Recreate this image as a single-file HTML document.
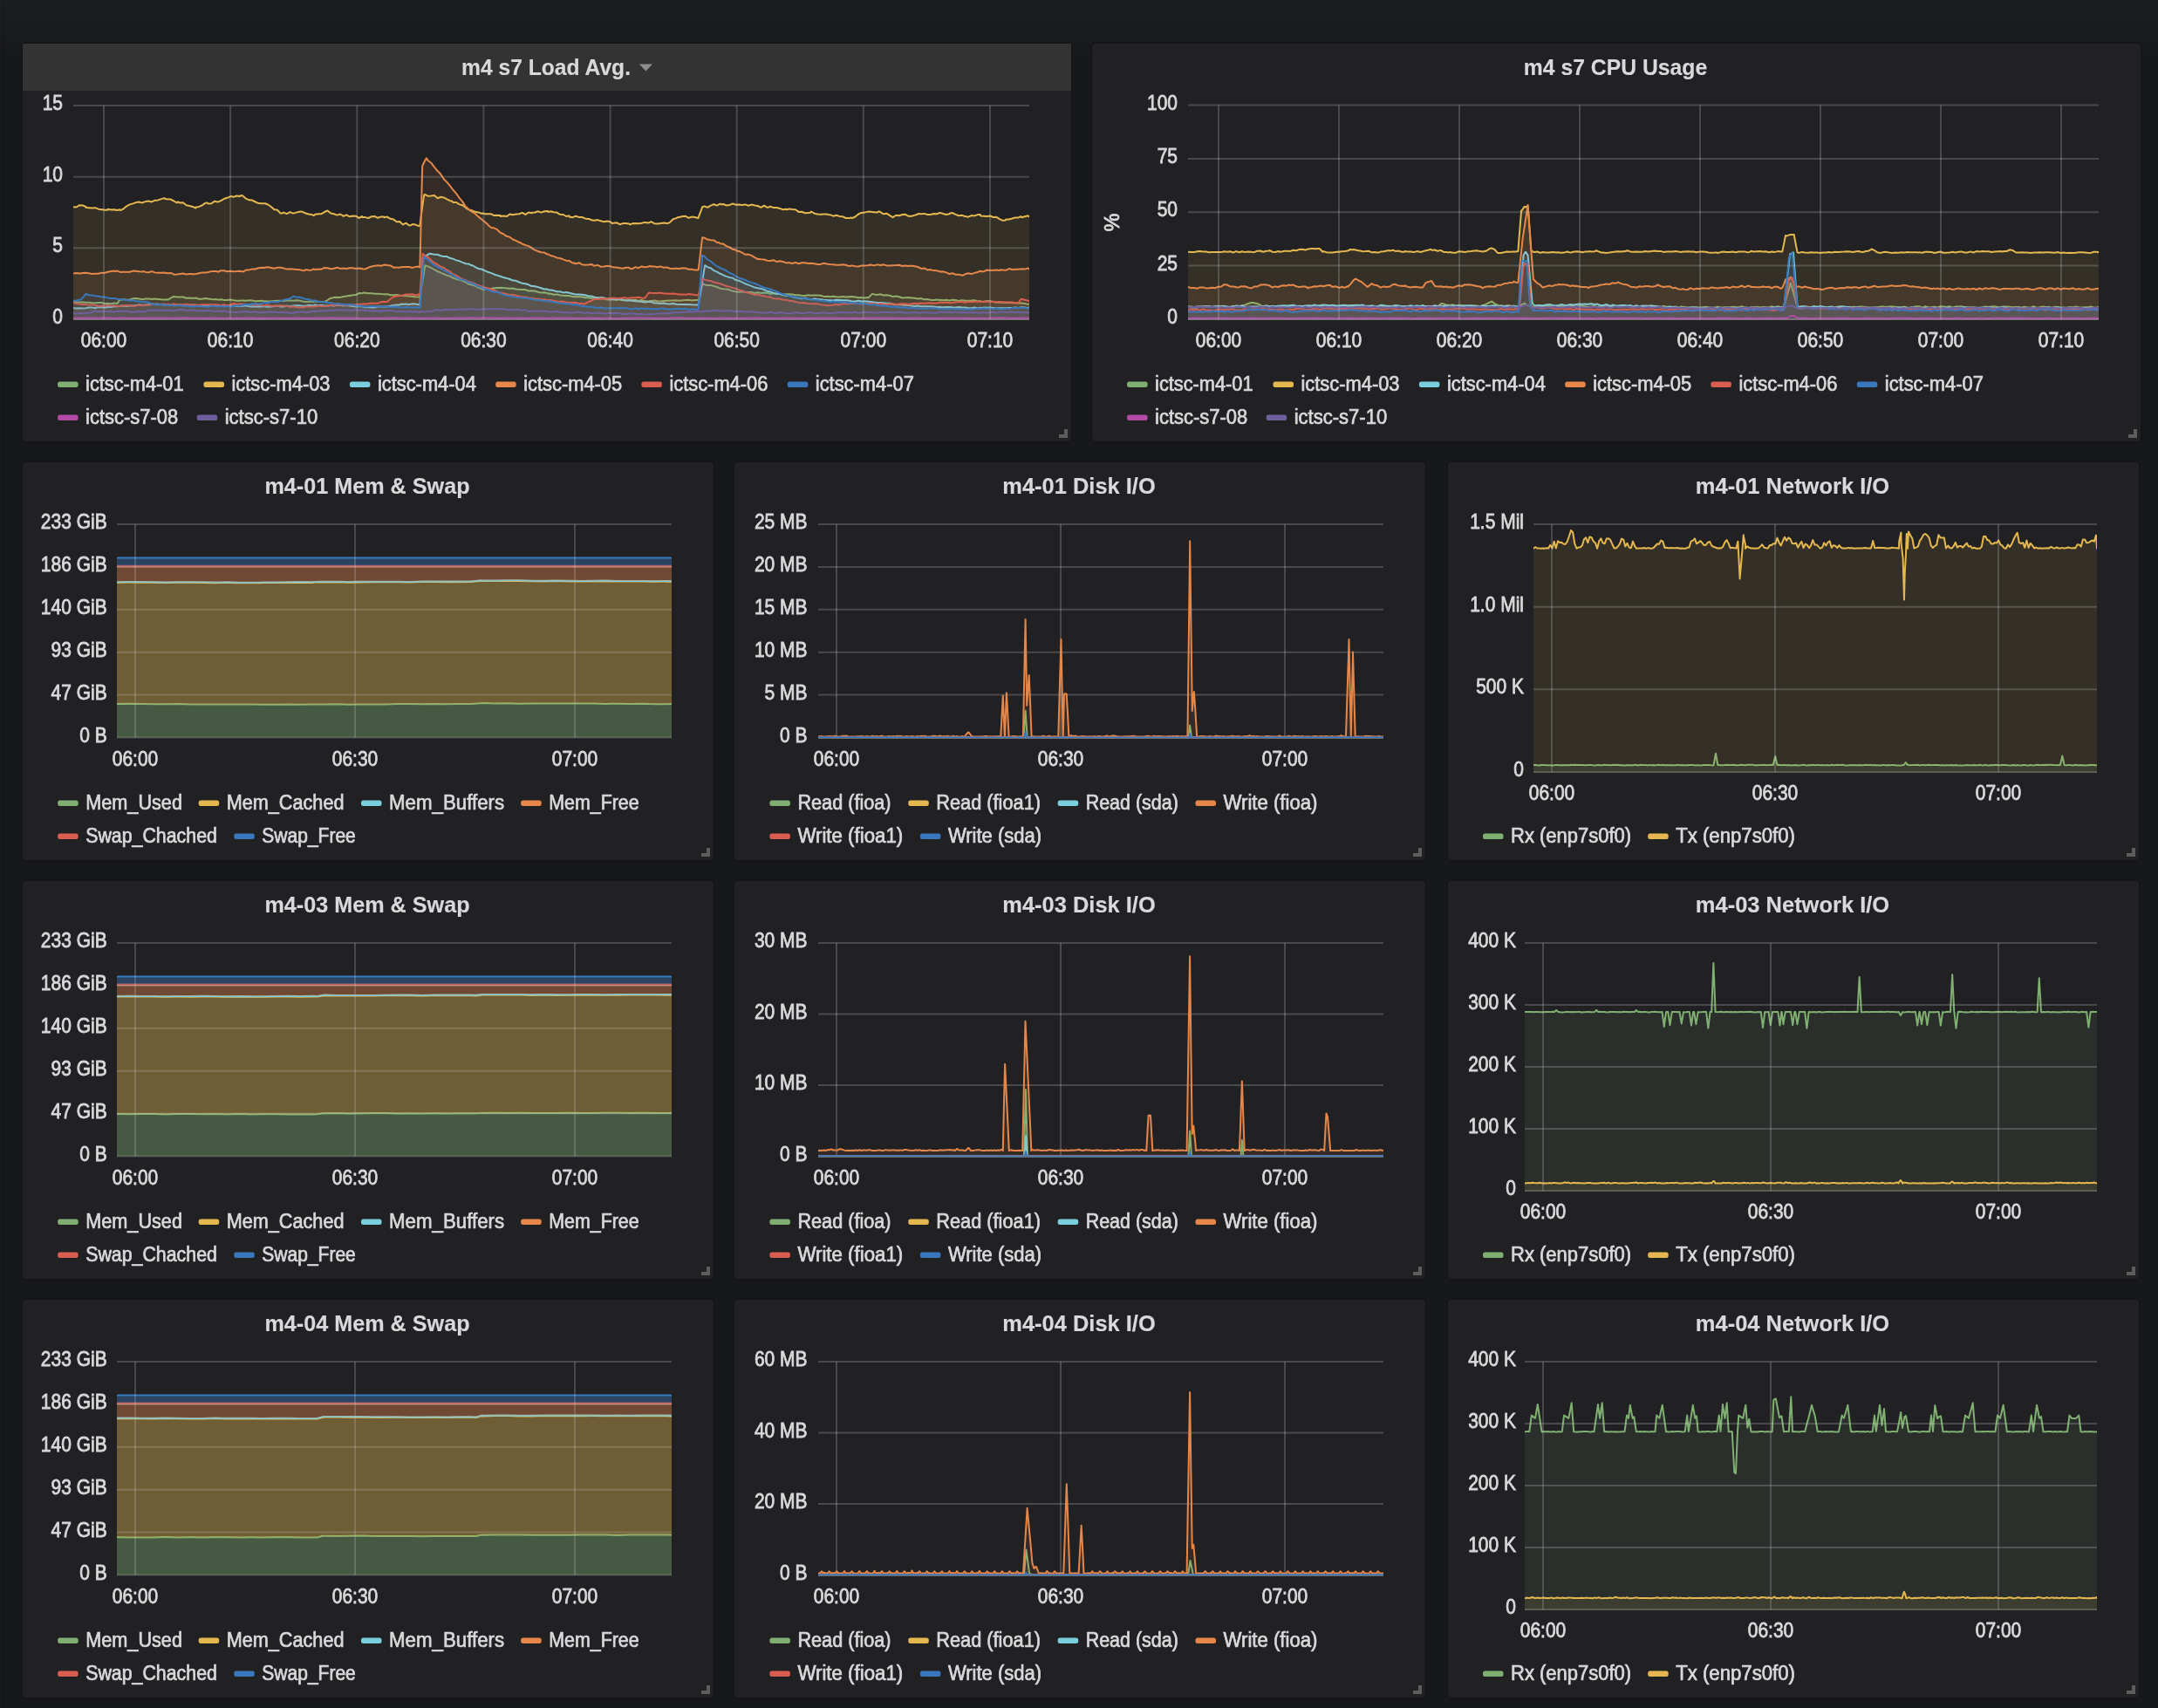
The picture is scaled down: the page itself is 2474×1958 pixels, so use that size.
<!DOCTYPE html><html><head><meta charset="utf-8"><style>html,body{margin:0;padding:0;background:#17181a;overflow:hidden}svg{display:block;will-change:transform}</style></head><body><svg width="2474" height="1958" viewBox="0 0 2474 1958">
<style>
.ttl{font-family:"Liberation Sans",sans-serif;font-weight:bold;font-size:26.5px;fill:#d8d9da;stroke:#d8d9da;stroke-width:.15px}
.ax{font-family:"Liberation Sans",sans-serif;font-size:23.5px;fill:#d8d9da;stroke:#d8d9da;stroke-width:.8px}
.lg{font-family:"Liberation Sans",sans-serif;font-size:23px;fill:#d8d9da;stroke:#d8d9da;stroke-width:.7px}
</style>
<rect width="2474" height="1958" fill="#17181a"/>
<defs><linearGradient id="tg" x1="0" y1="0" x2="0" y2="1"><stop offset="0" stop-color="#1c1d1f"/><stop offset=".6" stop-color="#1a1b1d"/><stop offset="1" stop-color="#17181a"/></linearGradient></defs>
<rect width="2474" height="64" fill="url(#tg)"/>
<rect x="3" y="0" width="1.2" height="1958" fill="#111214" opacity=".6"/>
<rect x="24.5" y="48.5" width="1205" height="459" rx="5" fill="#141516"/>
<rect x="26" y="50" width="1202" height="456" rx="4" fill="#212124"/>
<rect x="26" y="50" width="1202" height="54" fill="#333333"/>
<text x="626.0" y="86" class="ttl" text-anchor="middle" textLength="194" lengthAdjust="spacingAndGlyphs">m4 s7 Load Avg.</text>
<path d="M732.8 73.4 L748 73.4 L740.4 81.6 Z" fill="#8e8e8e"/>
<path d="M1220 492 h4 v10 h-10 v-4 h6 z" fill="#5d5d5d"/>
<text transform="translate(72 371.0) scale(.894 1)" class="ax" text-anchor="end">0</text>
<text transform="translate(72 289.3) scale(.894 1)" class="ax" text-anchor="end">5</text>
<text transform="translate(72 207.7) scale(.894 1)" class="ax" text-anchor="end">10</text>
<text transform="translate(72 126.0) scale(.894 1)" class="ax" text-anchor="end">15</text>
<text transform="translate(119.0 398.0) scale(.894 1)" class="ax" text-anchor="middle">06:00</text>
<text transform="translate(264.1 398.0) scale(.894 1)" class="ax" text-anchor="middle">06:10</text>
<text transform="translate(409.3 398.0) scale(.894 1)" class="ax" text-anchor="middle">06:20</text>
<text transform="translate(554.4 398.0) scale(.894 1)" class="ax" text-anchor="middle">06:30</text>
<text transform="translate(699.6 398.0) scale(.894 1)" class="ax" text-anchor="middle">06:40</text>
<text transform="translate(844.7 398.0) scale(.894 1)" class="ax" text-anchor="middle">06:50</text>
<text transform="translate(989.8 398.0) scale(.894 1)" class="ax" text-anchor="middle">07:00</text>
<text transform="translate(1135.0 398.0) scale(.894 1)" class="ax" text-anchor="middle">07:10</text>
<defs><clipPath id="cload"><rect x="84" y="101" width="1096" height="266"/></clipPath></defs><g clip-path="url(#cload)"><path d="M72 345.4l12 0 3.6 1.1 3.6 .1 3.6-.4 3.6 .5 3.6 .1 3.6 .4 3.6 .4 .2-.3 3.4-.4 3.6 0 3.6 1.1 3.6-.3 3.6 .5 3.6-.8 3.6 .6 0 .1 2.8-4.5 .8 .3 3.6-.8 3.6 .7 3.6-.3 3.6-1.2 3.6-.2 3.4 .4 .2 .1 3.6 .6 3.6-.6 3.6 0 3.6 .3 3.6-.3 3.6 .3 3.6 .4 3.6 .2 3.6-.2 .8 .3 2.8-2 2.8-1.3 .8-.3 3.6 .5 3.6 .1 3.6-.1 3.6 1.2 3.6-.1 3.4 .1 .2 .2 3.6-.4 3.6 1.2 3.6 0 3.6-.7 3.6 .4 3.6 .7 3.6 .1 2.4-.1 1.2 .6 3.6-.5 3.6 .7 3.6 0 3.6-.3 3.6 .6 3.6 .5 3.6 .1 1.4-.3 2.2 .1 3.6 .2 3.6-.6 3.6 .4 3.6 .7 3.6-.3 3.6-.2 3.6 .6 .4-.1 3.2 .2 3.6-.2 3.6-.4 3.6-.1 3.6 0 3.6 .2 3.6-.4 3-.1 .6-.1 3.6 .3 3.6-.4 3.6 .2 3.6 1 3.6 .5 3.6-.3 3.6-.1 2 .3 1.6-.5 3.6 .3 3.6 .4 3.6-.4 1.5-.4 2.1-1.3 3.5-2.3 .1 .4 3.6-1.2 3.6-.1 3.6 .1 3.6-.9 3.6-.6 3.6-.7 .5 .2 3.1-.6 3.6-.3 3.6-1.9 3.6 .1 2.8-.9 .8 .5 3.6 .4 3.6 .1 3.6 .4 3.6 0 3.6 .3 3.6 .2 2.6 .3 1-.4 3.6 1.2 3.6 0 3.6-.2 3.6 .7 3.6 .2 3.6 .2 3.6 .2 1.6 .4 2 .1 3.6 .3 3.6 .2 1.4-.1 2.2-13.2 3.6-21.7 .3-1.2 3.3 1.2 3.6 1.6 3.6 2.2 3.6 2 2.6 .8 1 .7 3.6 1.5 3.6 1.5 3.6 .9 3.6 2.2 2.6 .7 1 .5 3.6 .7 3.6 1.4 3.6 1.4 3.6 2.3 3.6 .8 3.6 1.2 3.6 2 3.6 1.1 2.2 1.1 1.4-.7 3.6-.3 3.6 0 3.6-.8 3.6-.3 3.6 .1 .1-.3 3.5 .3 3.6 .2 1.2 .4 2.4 .2 3.6-.2 3.6 .8 3.6 .4 3.6 .1 3.6 .2 3.6 1.4 3.6-.2 .2 .1 3.4 .2 3.6 1.1 3.6 .9 3.6-.3 3.6 .7 1.5 .8 2.1-.2 3.6 1.1 3.6-.3 3.6 1 3.6 .3 3.6 .2 3.6 0 3.6 1.2 3.6 .2 3.6 0 3.6 0 3.6 .9 3.6 0 3.6 .6 3.6 .1 3.6 .7 2.1 0 1.5-.4 3.6 .4 3.6 1 3.6 0 3.6-.5 3.6 .8 3.6-.6 3.6 .9 3.6 0 3.6-.3 3.6 0 3.6-.2 3.6 1.2 3.6-.9 3.6 1.1 3.6 .3 2.7-.4 .9 0 3.6-.5 3.6 .8 3.6 .1 3.6-.4 3.6-.3 3.6-.2 3.6-.1 3.6-.2 3.6 .5 3.6-.4 3.6-.3 3.6-.2 3.6 .6 3.6-.5 3.6 .2 .4 0 3.2-14 1.2-4.9 2.4 1 3.6 .9 3.6-.2 3.6 1.1 3.6 1 3.6 1.7 3.6 .6 3.6 .3 3.6 .7 3.6 1.5 1.6 .1 2 .5 3.6 .4 3.6-.5 3.6 .8 3.6 0 3.6 0 3.6 .8 3.6-.7 3.6 .8 3.6-.6 3.6 .4 3.6 1.1 3.6-.7 3.6 .9 .6-.3 3 .3 3.6 .5 3.6-.4 3.6 .1 3.6 .1 3.6 .9 3.6-.1 3.6 .6 3.6 .1 3.6-.7 3.6 .6 3.6-.3 3.6 .1 3.6 .2 3.6 1.1 3.6 .1 1.2-.3 2.4 .5 3.6-.5 3.6 .5 3.6 .3 3.6-.4 3.6 .4 3.6-.3 3.6-.1 3.6 .3 3.6 .9 3.6-.3 3.6 .6 3.6-.5 1 .1 2.6-2.9 1.8-1.5 1.8 .6 3.6 .5 3.6-.6 3.6 1.2 3.6-.2 3.6 .4 3.6 1.4 3.6-.6 3.6 .7 3.6 1.3 2.1-.3 1.5 0 3.6-.1 3.6 .3 3.6 .4 3.6 .8 3.6-.5 3.6 1.2 3.6-.3 3.6 .9 3.6 .2 3.6-.5 3.3 .5 .3-.3 3.6 .4 3.6-.4 3.6 .7 3.6-.7 3.6 .1 3.6 1.2 3.6-.8 3.6 .5 3.6-.1 3.6-.1 3.6-.3 3.6 1.1 3.1-.4 .5 .6 3.6 .2 3.6-.8 3.6 .3 3.6 .7 3.6 .7 3.6-.3 3.6 .4 3.6 .2 3.6-.3 3.6 .6 3.6-.1 3.6 .2 3.6 0 3.6 .5 3.6 1 1.6-.5 12 0 0 29.6 -1120 0Z" fill="#80B071" fill-opacity="0.1" stroke="#80B071" stroke-width="2" stroke-linejoin="round"/><path d="M72 237.3l12 0 3.6 .2 3.6-2.3 3.6 .3 3.5 1.4 .1 .9 3.6 .4 3.6 .4 3.6-.4 3.6 1.5 3.6 .6 1.3-.1 2.3 .5 3.3 .1 .3-1 3.6 .6 3.6-.2 3.6 .8 2.8-.8 .8 1 3.6-1.9 3.6-3 3.1-1.6 .5-.3 3.6-1 3.6-1.3 3.6-.6 2.6 .9 1-.2 3.6-1.1 3.6-.5 3.6 .8 3.5-1.7 .1 0 3.6-.3 3.6-1.3 3.6-1 1.6 1.2 2-.1 3.6 .3 3.6 1.8 3.6 2.2 1.1-1.2 2.5 1.2 3.6-.3 3.6 3.1 3.6 .8 3.6 .8 3.6 1.6 .4-1.1 3.2-.5 3.6-1.4 3.6-2.6 2.1-.5 1.5 1.2 3.6-.4 3.6-2.6 2.4 .7 1.2 .3 3.6-1.5 3.6-2.1 3.6-1.2 3.6-1.5 1.1-.4 2.5 1 3.6-1.4 3.6 .6 1.4-1 2.2 .5 3.6 3.1 3.6 1.6 3.6 .3 3.6 1.9 .1-.2 3.5 1.8 3.6 .1 3.6 0 .4 .1 3.2 1.2 3.6 2.5 3.6 3.3 .7-.1 2.9 .5 3.6 3.9 1.9-.2 1.7-.8 3.6 1.5 3.6-2 3.6 1.5 3.6-1 3.6-.9 2.5-.3 1.1 .5 3.6 1.6 3.6 1 3.6 .5 2 1.2 1.6-1.4 3.6-.5 3.6-.1 3.6-2.1 1.5-.9 2.1-.7 3.6 3 3.6 .7 3.6 1.4 3.6-1.1 3 1.7 .6 .7 3.6-1.6 3.6 2 3.6-.8 3.6 .2 3.6 2.2 3.6-1.9 0 1.1 3.6 0 3.6 .9 3.6-1.8 3.6-.2 3.6 1.8 3.6-1.4 3.4 .2 .2 .6 3.6-.6 3.6 2.2 3.6 .8 3.6 2.7 3.6-.4 1.3 1.6 2.3 1.9 3.6-1.7 3.6 2.8 1.6-.2 2-1.3 3.6 .6 3.6 1.6 1.4-.9 2.2-17.3 2.5-17.5 1.1-.7 3.6 2 3.6-.3 3.6-.4 3.6 3.2 2.6-1 1-.6 3.6 .7 3.6 2 3.6 1.8 2.1 .3 1.5 1.4 3.6 .1 3.6 2.4 3.6 .9 3.6 3 .8 .5 2.8 1.6 3.6 .9 3.6 1.5 3.6 .6 3.6 1.4 2.2-.4 1.4 .8 3.6 0 3.6 0 3.6 1.9 3.6-.3 3.6 .1 .1 1.1 3.5-.6 3.6 .7 3.6-2.6 3.6 .8 2.4-.5 1.2-.4 3.6-.1 3.6-1.4 3.6 2 3.6-2.4 3.6 .7 .2-.4 3.4-.3 3.6-1.3 3.6 1.4 3.6-1.3 3.6-.4 1.5 1.2 2.1-.9 3.6 1 3.6 .4 3.6 2.2 3.6 .2 3.6 2 3.2-.8 .4 1.3 3.6 .7 3.6-1.5 3.6 1.2 3.6 0 3.6 1.5 3.6 .7 1.3-.1 2.3 1.3 3.6 .4 3.6-.6 3.6 1.1 3.6 1 3.6-.8 3.6 .8 2.3 1.7 1.3-.1 3.6-.6 3.6 2 3.6-1.1 3.6-.2 3.6 .5 1 1 2.6-1.1 3.6-.4 3.6 .4 3.6-.5 3.6-.9 3.6 .6 2.7-.7 .9-.8 3.6 2.2 3.6 .3 3.6-.4 3.6-.7 3.6 .5 1.5 0 2.1-1 3.6-3.7 3.6-1.1 2.3-1.2 1.3 .1 3.6-1 3.6-.2 3.6 2 3.6-1.2 3.6 .4 3.6 1.1 .4-1.2 3.2-8.2 1.2-3.4 2.4-.9 3.6 1.4 3.6-2.1 3.6-1.5 3.6 1.4 3.6-2.1 1.4 .9 2.2-.5 3.6 1.6 3.6-.4 3.6-1.7 3.6 1.3 3.6-.1 3.1 .4 .5 0 3.6-.6 3.6 1.4 3.6-1.2 3.6 .8 3.6 .6 3.6 1.8 3.6-2.1 3.6 2.1 2.7-.5 .9-.7 3.6 1.5 3.6 0 3.6 .8 3.6 1.3 3.6-.5 1.5 .5 2.1-.8 3.6 .5 3.6 .4 3.6 2.6 3.6-.1 3.6 1.4 3.6-.3 2.5-.2 1.1-1.2 3.6 2.2 3.6 .7 3.6 .3 3.6-.2 3.6 0 1.2 .5 2.4 .2 3.6 1.5 3.6-1 3.6 1.2 3.6 .3 3.6 1.8 3.6 .1 2.2-.6 1.4 .7 3.6-1.7 3.6-3 3.6-1.6 2.4-.2 1.2-.1 3.6-1 3.6 .2 3.6 .4 3.6 .4 1.9-1.4 1.7 1 3.6 2.1 3.6-.6 3.6 2.2 2 1.2 1.6 1.2 3.6-2.6 3.6 .5 3.6-1.2 3.6-.2 3.6 2 3.6 0 3.6-1.2 2.3-.6 1.3-1.1 3.6 .4 3.6-.4 3.6 1.1 3.6-.1 3.6-.8 3.6 .1 3.6-1.3 3.6 1.1 3.6 1 3.6-.7 .5-.7 3.1-.5 3.6 1.8 3.6 1.3 3.6-.5 3.6 1.4 3.6 .6 3.6-1.6 3.6 .3 3.6-1.3 3.1-.1 .5 1.5 3.6 .2 3.6 .2 3.6-.4 3.6 1.6 3.6-.3 3.6 2.4 3.6 1.6 3.4-.4 .2-.9 3.6 0 3.6-1 3.6-1.1 3.6 0 2.8-1.3 .8 1.1 3.6-1 3.6-.9 1.6 1.2 12 0 0 129.5 -1120 0Z" fill="#E5B84F" fill-opacity="0.1" stroke="#E5B84F" stroke-width="2" stroke-linejoin="round"/><path d="M72 353.3l12 0 3.6 .3 3.6-.3 3.6 .1 3.6-.1 3.6-.8 3.6-.1 3.6 .8 .2-.4 3.4-.5 3.6-.3 3.6 .7 3.6-.9 3.6 .2 3.6-.7 3.6-.1 2.8-.3 .8-.5 3.6 .4 3.6 .1 3.6-.6 3.6 .1 3.6-.3 3.6-.9 3.6 .6 3.6-.4 3.6-.5 3.6-.6 3.6 .9 1.3-.6 2.3 .1 3.6 .4 3.6 .3 3.6-.1 3.6 .4 3.6-.5 3.6 .6 3.6-.3 3.6 .7 3.6 .1 3.6-.9 3.4 .6 .2-.4 3.6 .1 3.6 .9 3.6-.6 3.6 .2 3.6-.4 3.6 .2 3.6-.1 3.6 0 3.6 .2 3.6 0 3.6 .4 1.9-.5 1.7 .3 3.6 .4 3.6 .1 3.6 .2 3.6-.2 3.6-.5 3.6 .9 3.6 .3 3.6 0 3.6-.2 3.6 .3 3.6-.5 .4 .3 3.2 .4 3.6-.4 3.6-.4 3.6-.4 3.6 .9 3.6 .1 3.6-1.2 3 .5 .6 .3 3.6-.6 3.6-.4 3.6 .1 3.6 .4 3.6 .1 3.6-1.1 3.6 .5 2-.2 1.6-.5 3.6 .8 3.6-.5 3.6 .7 3.6 .1 3.6-.6 3.6 .6 3.6-.8 1 .2 2.6-.3 3.6 .9 3.6-.5 3.6 .5 3.6 .5 3.6 .4 3.6-.3 3.6 .1 3.6 1.3 2-.3 1.6-.3 3.6 .6 3.6-.2 3.6-.8 3.6 0 3.6 0 2.6-.2 1 0 3.6-.6 3.6-.7 3.6-.5 3.6-.2 1.3-.8 2.3 .1 3.6-.1 3.6 .3 3.6-.6 3.6 .1 3.6 .8 1.4-.6 2.2-35 1.1-17.8 2.5-1.4 3.6-2.8 2.3-.8 1.3 .2 3.6 .8 3.6 0 3.6 1.4 3.6 .7 3.6 0 .1 .5 3.5 1.4 3.6 1.1 3.6 1.5 3.6 .9 3.6 1.6 3.6 1.3 3.6 .4 2.7 1.6 .9-.2 3.6 2.2 3.6 1.8 3.6 .5 3.6 1.7 3.6 1.6 3.6 1.1 3.6 1.5 1.7 .9 1.9 .3 3.6 1.2 3.6 1.3 3.6 .8 3.6 1.1 3.6 1.6 3.6 .2 3.6 1.7 .7 .1 2.9 1.2 3.6 .5 3.6 1 3.6 1.8 .2-.3 3.4 .5 3.6 .8 3.6 1.2 3.6 1.2 3.6 .1 1.5 .9 2.1 .1 3.6 .5 3.6 1.2 3.6 0 3.6 1.1 3.6-.3 3.6 .7 3.6 .9 3.6 .9 3.6 0 3.6 .2 3.6 .5 3.6 1 3.6 .1 3.6 1.3 3.6 .6 2.1-.1 1.5-.2 3.6 .4 3.6 1 3.6 .2 3.6 .6 3.6-.2 3.6 .1 3.6 .5 3.6 1 3.6-.3 3.6 .5 3.6 .4 2.6 .4 1-.1 3.6 .3 3.6 .8 3.6-.7 3.6 .1 3.6 1.4 3.6 .1 3.6 .4 3.6-.4 3.6 .8 3.6 .2 3.6-.6 3 .6 .6 .3 3.6 .3 3.6 0 3.6 0 3.6-.1 3.6 .3 3.6 .1 3.6 0 .4 .5 3.2-19.9 3.6-22.9 .5-2.9 3.1 2 3.6 1 3.6 2.9 3.6 1.6 3.6 2.2 1.4 .2 2.2 1.4 3.6 1.4 3.6 1.1 3.6 .7 3.6 2.4 3.6 .7 3.6 1.6 3.6 1.9 3.6 1.3 3.6 1.3 .3 .2 3.3 1.5 3.6 .7 3.6 .7 3.6 1 3.6 1.8 3.6 .7 3.6 1.4 3.6 .6 .6 .3 3 .2 3.6 1.1 3.6 .9 3.6-.1 3.6 1.4 3.6 .8 3.6 .5 3.6 .7 .9-.2 2.7-.4 3.6 1 3.6 .5 3.6-.7 3.6 .5 3.6 .2 3.6 .6 3.6 .1 1.2 .2 2.4 .1 3.6 .4 3.6-.8 3.6 .2 3.6 .2 3.6 .1 3.6 .1 3.6 1.2 3.6 0 3.6-.8 3.6 .6 3.6-.1 1.7 .3 1.9-.1 3.6 .4 3.6 .7 3.6 .3 3.6 .1 3.6 .2 3.6 .5 3.6 .1 3.6 .9 3.6 .5 3.6 0 3.6 0 2.1 .7 1.5-.3 3.6 .4 3.6 .5 3.6 .4 3.6-.3 3.6 .7 3.6-.1 3.6 0 3.6 .1 3.6 .3 3.6 .4 3.3 0 .3-.1 3.6 .4 3.6-.2 3.6-.2 3.6 .4 3.6 .2 3.6-.6 3.6 .5 3.6 0 3.6 .6 3.6 .2 3.6-.6 3.6 .7 3.1-.5 .5 .4 3.6-.6 3.6 .2 3.6-.4 3.6 .8 3.6-.2 3.6 .3 3.6-.1 3.6-.2 3.6 .1 3.6-.2 3.6-.5 3.6 .5 3.6-.7 3.6 .2 3.6 .8 1.6-.9 12 0 0 25.7 -1120 0Z" fill="#7ACFDF" fill-opacity="0.1" stroke="#7ACFDF" stroke-width="2" stroke-linejoin="round"/><path d="M72 313.4l12 0 3.6-.3 3.6 .4 3.6-.5 3.6-.2 3.6 .5 3.6 .8 3.6-.3 3.6-.1 3.6-1.1 1.3 .5 2.3-.3 3.6-1 3.6-.7 3.6-.6 .8 .6 2.8-.5 3.6 1.3 3.6-.2 3.6 0 3.6 0 3.6-1.1 3.6 .2 3.6 .5 3.6 .2 1.8-.4 1.8 .8 3.6 .4 3.6-1.2 3.6 1.3 3.6 .4 3.6 0 3.6-.3 3.6 .8 3.6-.4 2.8 1 .8 .8 3.6-.1 3.6-.6 3.6-.5 3.6 1.1 3.6-.6 3.4-.1 .2 .7 3.6-.5 3.6-.9 3.6-.6 3.6 0 3.6-.6 3.6-.9 3.6-.1 2.4 .1 1.2 .6 3.6-1.4 3.6 0 3.6 1 3.6-.6 3.6 .5 3.6-.1 3.6-.3 1.4 .3 2.2 .5 3.6-2 3.6-.2 3.6-1 3.6 .2 .1-.3 3.5-1 3.6-.5 3.6 .1 .4-.5 3.2-.1 3.6 .7 3.6 .8 3.6-1.1 3.6 .1 3.6 .6 3.6 1.2 3-.3 .6 .3 3.6-.2 3.6 .5 3.6 .2 3.6 .9 1.7 .3 1.9-1.2 3.6 .6 3.6-.3 2-1.1 1.6 .8 3.6-.6 3.6 .2 3.6-1.8 3.6 .3 3.6 1 3.6-.5 3.6-.9 1 .1 2.6 1 3.6-.4 3.6 .5 3.6-.8 3.6 0 3.6 .7 3.6-.4 3.6 .6 0 .2 3.6 .2 3.6-1.8 3.6-1.3 3.6-.6 3.6-.5 3.6 .5 3.4-1.2 .2-.2 3.6 .6 3.6 .4 3.6 2.3 3.6-.3 2.1 .5 1.5-.5 3.6-.4 3.6-.1 3.6 .2 3.6 .8 3.6-1 3.6-.3 1.4 .8 2.2-92.8 .6-23.4 3-6.2 1.7-2.7 1.9 3 3.6 2.5 3.6 4.8 3.6 4.5 2.6 2.4 1 1.2 3.6 5.6 3.6 3.6 3.6 4.2 3.6 4.9 3.6 3.9 3.6 5.3 3.6 4.2 3.6 5.8 .8 .2 2.8 3 3.6 2.4 3.6 2.2 3.6 3.4 3.6 2.9 3.6 3 3.6 3 .6 1 3 2.4 3.6 .7 3.6 1.8 3.6 3.6 3.6 1.4 3.6 2.8 1.2-.2 2.4 1 3.6 2.7 3.6 1.4 3.6 2 .7-.1 2.9 1.8 3.6 1.4 3.6 1.1 3.6 2 .2 .6 3.4 1.9 3.6 1.4 3.6 1.3 3.6 .3 3.6 1.9 1.5 .2 2.1 1.3 3.6 .9 3.6 1.5 3.6 .6 3.6 1.4 3.6 1.3 3.6 .4 3.6 2.4 1.8-.2 1.8 1.1 3.6-1.2 3.6 2 3.6 .5 3.6-.1 3.6-.7 3.6 1.9 3.6-.9 2.1 .9 1.5 1 3.6-.3 3.6-.8 3.6 .5 3.6 1.2 3.6 .2 3.6 .6 3.6 .6 3.6-1 3.6-.1 1 1 2.6 .5 3.6-2.1 3.6 1.1 3.6-1.8 3.6 .8 3.6-.5 2.7-.9 .9 .8 3.6-.2 3.6 .9 3.6-.9 3.6 1.3 3.6-.3 3.6 1.4 3.6 .1 3-.2 .6 0 3.6 .3 3.6-.7 3.6 .2 3.6 1.2 3.6 0 3.6 .9 3.6-.2 .4-.2 3.2-27.7 1.2-9.3 2.4 .5 3.6 1.9 3.6 .6 3.6 .2 3.6 2.6 2.1 0 1.5 1.3 3.6 .3 3.6 2.5 3.6 1.3 3.6 2.4 3.6 .8 .9 .8 2.7 .5 3.6 1.7 3.6 2.2 3.6-.2 3.6 1.3 3.6 2.3 3.6 1.8 1.9 0 1.7 .2 3.6 .3 3.6 1.2 3.6 .3 3.6-.8 3.6 1.9 3.6-.8 3.6 .7 3.6 1.4 3.6-.3 .8 .2 2.8 .7 3.6-1.1 3.6 1.4 3.6-1.1 3.6 .1 3.6 .7 3.6-.2 3.6 .5 3.6 .8 3.6-.2 3.6-1.2 3.6 .7 1.2 .4 2.4 .2 3.6 .2 3.6 .6 3.6-.1 3.6-.5 3.6 .5 3.6 1.4 3.6-.7 1.6 .4 2 .4 3.6 .2 3.6-.8 3.6-.1 3.6-.3 3.6-.7 3.6 .9 3.6-1 1.9 0 1.7 .8 3.6-1 3.6 1.2 3.6 0 3.6-.2 3.6-.1 3.6-.4 3.6 1.3 3.6-.6 3.6 .7 .8-.3 2.8-.1 3.6 .5 3.6 .8 3.6 1.9 3.6-.5 3.6 2 3.6-.3 3.6 1 3.6 .2 3.3 .9 .3 .3 3.6-.3 3.6 1.2 3.6 1.6 3.6-.7 3.6 1.4 3.6 .1 3.6 .6 .7 .5 2.9-1.6 3.6-1 3.6 .8 3.6-1.2 3.6-.9 3.1-1.4 .5 .6 3.6 0 3.6-1.7 3.6 .6 3.6-.4 3.6-.1 3.6 .4 1.2-.8 2.4 .3 3.6 .3 3.6-1.7 3.6 .8 3.6-.1 3.6-.1 3.6-.4 3.6 .3 3.6-1.2 1.6 1.1 12 0 0 69.5 -1120 0Z" fill="#E6874A" fill-opacity="0.1" stroke="#E6874A" stroke-width="2" stroke-linejoin="round"/><path d="M72 347.4l12 0 3.6 .6 3.6 .4 3.6 .6 3.6 .1 3.6 .6 3.6-.6 3.6 .9 .2 0 3.4 .7 3.6-.3 3.6 .4 3.6-.8 3.6 .5 3.6-.1 3.6 .4 2.8 .1 .8 0 3.6-.8 3.6 .1 3.6-.1 3.6 .7 3.6-.4 3.6-.8 3.6 .6 3.6-.9 3.6 .4 3.6-.7 3.6-.3 3.6 .9 3.6-1 3.6-.1 3.6 .8 .8-.7 2.8 .6 3.6-.7 3.6 .9 3.6-.4 3.6 .2 3.6-.5 3.6 1 3.6-.3 3.6 .4 3.6 0 3.6-.6 3.6 .1 3.6-.1 3.6 0 3.6 0 3.6 .3 3.6 .5 3.6-.7 3.6 .9 1.9-.2 1.7-.7 3.6-1.3 .3 .1 3.3 .6 3.6-.3 3.6 0 3.6 .4 3.6 .5 3.6-.6 3.6 1.3 3.6-.9 3.6 1 3.6 .3 .4-.4 3.2-.4 3.6 1.1 3.6-.3 3.6 .4 3.6-.5 3.6 .2 3.6 .3 3.6 1.1 3.6-.7 3.6 .8 3.6 .4 2.5-.4 1.1 .5 3.6-1 3.6-.1 3.6 0 3.6 .1 3.6-1 3.6 .6 3.6-.2 3.6-.1 3.6-1.2 2.7 .4 .9 .5 3.6-1.1 3.6 .2 3.6 .2 3.6 .2 3.6-.8 3.6 .5 3.6-.5 3.6-.4 3.6-.2 3.6-.3 2 .3 1.6-.7 3.6-.3 3.6 .2 3.6-.1 3.6-1.5 3.6-.5 2.6 .2 1-.1 3.6-3 3.6-2.5 .2 0 3.4-1 3.6-.3 3.6-.4 3.2-1.1 .4 0 3.6 .1 3.6-.3 3.6 1.1 3.6-.9 1.4 .6 2.2-31.4 1.1-15.9 2.5 2.3 3.6 1.9 3.6 3.5 3.6 3 .6-.1 3 1.9 3.6 2.4 3.6 1.3 3.6 2.6 3.6 1.8 3.6 3 3.6 1.5 3.2 2.2 .4 .1 3.6 2.1 3.6 1.2 3.6 1.6 3.6 .8 3.6 1.5 3.6 1.7 3.6 1.2 2.2 .9 1.4 .2 3.6 1.2 3.6 .7 3.6 1.4 3.6 1.8 3.6 1.1 3.6 .6 3.6 1 1.2 .3 2.4 .2 3.6 .2 3.6 .8 3.6 1.1 3.6 .7 3.6-.1 3.6 1.1 3.6 .5 .2-.3 3.4 .7 3.6 .4 3.6 .5 3.6 0 3.6 .9 1.5-.1 2.1 0 3.6 .6 3.6 .7 3.6 .3 3.6-.1 3.6 1.2 3.6 0 3.6 .3 3.6-.3 3.6 1.1 3.6 0 2.7 .6 .9-.3 3.6-2 3.6-1.4 3.5-2.2 .1 .2 3.6 .1 3.6-.7 3.6 .2 3.6-.1 3.6 0 3.6-.7 3.6 .4 3.6-.1 3.6-.4 2.4-.3 1.2 .6 3.6-.1 3.6-.5 3.6 0 3.6-.4 3.6 .8 3.6 .1 .5-.5 3.1-4.2 1.3-1.6 2.3 .3 3.6 .2 3.6 .2 3.6-.5 3.6 .9 3.6-.1 3.6 .3 3.6-.1 3 .2 .6 .2 3.6 .4 3.6 0 3.6 .3 3.6-.6 3.6 .4 3.6 .5 3.6 .4 .4-.1 3.2-14.2 1.2-4.7 2.4 1 3.6 1 3.6 .5 3.6 1.6 3.6 .8 3.6 1 3.6 1.2 3.6 1.4 0 .2 3.6 .7 3.6 1.1 3.6 .9 3.6 1.6 3.6 .9 3.6 1.4 3.6 1.1 3.6 .6 .3 .4 3.3 1.2 3.6-.4 3.6 1.2 3.6 .6 3.6 .9 3.6 .3 3.6 1.6 3.6 .2 .6 .2 3-.1 3.6 1.3 3.6-.1 3.6 1.1 3.6 .3 3.6 .8 3.6 1 3.6 .4 .9-.3 2.7 .2 3.6 .8 3.6 .2 3.6 0 3.6 .1 3.6 .9 3.6 .3 3.6 .9 1.2-.5 2.4 .4 3.6-.7 3.6-.5 3.6 .4 3.6-1.3 3.6-.2 3.6 .3 3.6-.2 1.6-.2 2-.4 3.6 .6 3.6 .4 3.6-.6 3.6 .1 3.6-.2 3.6 .1 3.6 .8 3.6-.6 3.6 .7 3.6 0 3.6-.4 3.6-.3 3.6 .9 3.6-.6 3.6-.1 2.1 .2 1.5-.3 3.6 .7 3.6-.7 3.6-.4 3.6 .1 3.6-.5 3.6 .4 3.6-.3 3.6-.3 3.6 .5 3.6-.1 3.6-1.1 3.6 .5 3.6-.4 3.6 .7 3.6-.3 3.6-.8 3.6-.1 3.6-.3 3.6 .9 3.6-.9 3.6 .2 3.6-.2 3.6 0 3.1-.2 .5 .1 3.6 .3 3.6-.6 3.6 .9 3.6-.5 3.6 .4 3.6-.1 3.6 .1 3.6 .4 3.6 0 3.6 0 3.6 .6 3.5-.2 .1 0 2.8-3.8 .8-.4 3.6 .9 3.6 .9 1.6 .9 12 0 0 32.5 -1120 0Z" fill="#D95E4F" fill-opacity="0.1" stroke="#D95E4F" stroke-width="2" stroke-linejoin="round"/><path d="M72 344.8l12 0 3.6-.3 3.6-.7 1.5-.2 2.1-2.5 3.5-3.6 .1-.6 3.6 1.4 3.6 .2 3.6 .9 3.6 .1 3.6 .9 3.6 0 3.6 1.1 3.6 .4 3.6 .2 3.6 .6 2.8 .4 .8 .3 3.6-.2 3.6 .8 3.6 .6 3.6-.3 3.6 1 3.6 .3 3.6 .5 1.8-.2 1.8 .2 3.6 .6 3.6 1.7 3.6 .9 1.3-.1 2.3 0 3.6-.2 3.6 .2 3.6 .7 3.6-.3 3.6 1 3.6-.3 3.6-.4 3.6 .7 3.6-.2 3.6 .9 3.4-.4 .2 .5 3.6-.5 3.6 .2 3.6 .2 3.6 .1 3.6 .3 3.6-1.1 3.6 .4 3.6 .4 3.6-.3 3.6 .4 3.6-.6 1.9 .5 1.7 .3 3.6-.8 3.6-.8 3.6 .3 3.6-.8 3.6-.5 3.6 0 3.6-.8 .9 .3 2.7-.6 3.6 .5 3.6-.6 3.6-1.2 3.6 .6 3.6-1.3 3.6 0 3.5-.1 .1 .4 3.6-1.2 3.6-1.2 3.6-.8 3-.6 .6-.4 3.6-2.1 1.4-.2 2.2 1 3.6-.3 3.6 1.2 3.6 1.1 3.6 .4 3.6 1.4 2-.1 1.6-.1 3.6 1.3 3.6 .4 3.6 .2 3.6 .7 3.6 0 3.6 .9 3.6 .4 1-.2 2.6 .3 3.6 .3 3.6 .6 3.6 0 3.6 0 3.6 1.1 3.6-.2 3.6 .7 3.6 .7 2-.2 1.6-.4 3.6-.1 3.6 .1 3.6 .5 3.6-.2 3.6-.2 2.6 .3 1 0 3.6 .7 3.6-.7 3.6 .3 3.6 .7 3.6-.1 3.6-.3 3.6 .3 3.6 .2 3.6-.3 3.6 .4 1.4 .2 2.2-27.6 2.5-30.8 1.1 1.2 3.6 2.3 3.6 3.2 3.6 3.1 .6 0 3 2.1 3.6 1.3 3.6 2.3 3.6 1.6 3.6 2.1 3.6 2.1 3.6 2.3 3.2 1.5 .4 .6 3.6 .7 3.6 1.1 3.6 2 3.6 .9 3.6 1.4 3.6 2.4 3.6 .6 2.2 1.4 1.4 .7 3.6 .6 3.6 1.8 3.6 1 3.6 .1 3.6 1.2 3.6 2 3.6 .7 1.2 .2 2.4 .3 3.6 1 3.6 .5 3.6 .2 3.6 .5 3.6 .1 3.6 .8 3.6 .3 .2 .5 3.4 .6 3.6 .4 3.6-.1 3.6 1.1 3.6-.2 1.5 .7 2.1-.3 3.6 1.1 3.6 .3 3.6 1 3.6 .1 3.6 .5 3.6-.2 3.6 1.3 3.6-.5 3.6 1.1 3.6 .8 3.6 .5 3.6 .4 3.6-.1 3.6 .8 3.6 .5 2.1-.1 1.5-.4 3.6 1.1 3.6 0 3.6-.5 3.6 .5 3.6-.3 3.6-.2 3.6 .6 3.6-.7 3.6 1 3.6 .3 3.6-.8 2.6 .3 1 .6 3.6-1 3.6 .9 3.6-.6 3.6 .9 3.6-.6 3.6 .6 3.6-1 3.6 .1 3.6 .9 3.6-.1 3.6-.1 3 0 .6-.6 3.6 .2 3.6 .2 3.6-.3 3.6 1.1 3.6-.3 3.6 .2 3.6-.3 .4-.2 3.2-45.2 1.2-16.5 2.4 1.3 3.6 3.6 3.6 2 3.6 3.2 2.8 2.1 .8 .4 3.6 2 3.6 1.4 3.6 1.9 3.6 2.5 3.6 1.3 3.6 2.5 3.6 1.5 .2 .5 3.4 1 3.6 1.2 3.6 1.8 3.6 1.1 3.6 1.1 3.6 1.4 3.6 1.7 3.6 1.8 .5-.3 3.1 .9 3.6 1 3.6 1.4 3.6 1.2 3.6 1.7 3.6 1.5 3.6 1 3.6 .8 .8 .6 2.8 .2 3.6 .6 3.6 .5 3.6 .4 3.6 1.2 3.6 0 3.6 .6 3.6 .5 3.6 .4 3.6 .7 3.6 0 3.6 .8 1.2 0 2.4 .7 3.6-.7 3.6 .7 3.6 0 3.6-.1 3.6 .2 3.6 1.1 3.6-.6 3.6 1 3.6-.5 3.6 .6 3.6-.2 1.7 .7 1.9 .2 3.6 .7 3.6-.3 3.6 .7 3.6 .8 3.6-.4 3.6 .6 3.6 .6 3.6 .6 3.6-.5 3.6 1 3.6-.3 2.1 .6 1.5-.4 3.6 1.1 3.6-1 3.6 1.1 3.6-.1 3.6 0 3.6 .2 3.6 0 3.6-.4 3.6 .3 3.6-.2 3.6 .9 3.6 0 3.6 .1 3.6-.6 3.6 .5 2.8 0 .8-.3 3.6 .6 3.6-.1 3.6 .3 3.6-.4 3.6-.1 3.6 .1 3.6-.9 3.6 .6 3.6-.7 3.6 .4 3.6-.4 3.6 1 3.6-1.2 3.6 1.1 3.6 0 3.6-.7 3.6 .5 3.6-1 3.6 0 3.6-.1 3.6 0 3.6-.1 3.6 .9 1.6-.9 12 0 0 25.1 -1120 0Z" fill="#3A78BE" fill-opacity="0.1" stroke="#3A78BE" stroke-width="2" stroke-linejoin="round"/><path d="M72 364.5l12 0 3.6-.1 3.6-.1 3.6 .3 3.6-.4 3.6 .3 3.6-.1 3.6-.2 3.6 .3 3.6-.3 3.6 .3 3.6-.3 3.6 .1 3.6 .2 3.6 .2 3.6-.4 3.6 0 3.6 .3 3.6 .2 3.6-.3 3.6-.1 3.6 .4 3.6-.6 3.6 .5 3.6-.3 3.6-.1 3.6 0 3.6 .1 3.6 .3 3.6-.4 3.6 .2 3.6 .1 3.6-.2 3.6 .1 3.6-.3 3.6 0 3.6 .1 3.6 .3 3.6-.1 3.6-.1 3.6 .2 3.6-.1 3.6-.1 3.6 .3 3.6-.1 3.6-.3 3.6 .2 3.6 0 3.6 .2 3.6-.1 3.6-.2 3.6 .4 3.6-.5 3.6 .2 3.6 .2 3.6-.4 3.6 .2 3.6-.3 3.6 .4 3.6 .1 3.6-.2 3.6 .2 3.6-.3 3.6 .2 3.6 0 3.6-.1 3.6 0 3.6 .2 3.6 .1 3.6-.3 3.6 .1 3.6-.4 3.6 .4 3.6 0 3.6 .2 3.6-.1 3.6-.3 3.6 0 3.6 .2 3.6-.4 3.6 .3 3.6-.2 3.6 0 3.6-.1 3.6 .5 3.6-.4 3.6 0 3.6 .1 3.6 .3 3.6-.5 3.6 .3 3.6 0 3.6 .2 3.6 0 3.6 0 3.6-.3 3.6 0 3.6 0 3.6 .3 3.6 .1 3.6-.5 3.6 0 3.6 0 3.6 0 3.6 .2 3.6 .1 3.6-.2 3.6-.2 3.6 .3 3.6-.1 3.6 .1 3.6 .3 3.6-.2 3.6-.1 3.6 .1 3.6 0 3.6-.4 3.6 .5 3.6 0 3.6 0 3.6 0 3.6-.3 3.6 0 3.6-.1 3.6 .3 3.6-.4 3.6 0 3.6 .1 3.6 0 3.6 .1 3.6-.2 3.6 0 3.6 .1 3.6 0 3.6 .1 3.6-.2 3.6 .5 3.6-.1 3.6-.3 3.6 .1 3.6 0 3.6 0 3.6-.1 3.6 .4 3.6 .1 3.6-.3 3.6 0 3.6-.2 3.6 0 3.6 .1 3.6 0 3.6 .3 3.6-.4 3.6-.1 3.6 .6 3.6-.3 3.6-.2 3.6 .2 3.6-.3 3.6 .3 3.6 .3 3.6-.1 3.6-.1 3.6-.2 3.6 0 3.6-.1 3.6 .4 3.6-.2 3.6 .2 3.6-.3 3.6-.1 3.6 .4 3.6 .1 3.6-.1 3.6 0 3.6 0 3.6-.1 3.6-.3 3.6 .2 3.6-.1 3.6-.2 3.6 0 3.6 .2 3.6 0 3.6 .2 3.6 .2 3.6-.3 3.6 .3 3.6 0 3.6 0 3.6-.4 3.6-.1 3.6 0 3.6 0 3.6 0 3.6 .3 3.6 .1 3.6 0 3.6-.2 3.6 .1 3.6 .1 3.6-.4 3.6 .3 3.6 .1 3.6 0 3.6 0 3.6-.2 3.6-.2 3.6 .4 3.6-.3 3.6 .3 3.6 .1 3.6-.4 3.6 0 3.6 .4 3.6-.2 3.6-.3 3.6 0 3.6 0 3.6 .4 3.6 0 3.6-.4 3.6 .4 3.6 .1 3.6-.2 3.6-.2 3.6 .1 3.6-.2 3.6-.1 3.6 .6 3.6-.2 3.6-.1 3.6 .3 3.6-.3 3.6 .2 3.6 0 3.6-.4 3.6 .1 3.6 0 3.6-.1 3.6 .3 3.6-.2 3.6 .1 3.6-.2 3.6 .4 3.6-.3 3.6 .1 3.6 .1 3.6 .1 3.6-.2 3.6 .3 3.6-.3 3.6 0 3.6 0 3.6-.3 3.6 .3 3.6-.2 3.6-.1 3.6 .5 3.6-.4 3.6 .2 3.6 .1 3.6-.1 3.6-.1 3.6 .1 3.6 0 3.6 .2 3.6-.4 3.6 .2 3.6-.2 3.6 .1 3.6 .3 3.6-.2 3.6 0 3.6 .2 3.6 0 3.6-.2 3.6 .1 3.6-.1 3.6 0 3.6 .1 3.6-.1 3.6 0 3.6 0 3.6 .3 3.6-.2 3.6 .1 3.6 .1 3.6-.4 3.6 .1 3.6 .3 3.6-.1 3.6-.4 3.6 0 3.6 .2 3.6-.3 3.6 .1 3.6-.1 3.6 .4 3.6 .1 3.6 0 3.6-.4 3.6 .3 3.6 0 3.6-.3 1.6 .2 12 0 0 13.5 -1120 0Z" fill="#B24BA6" fill-opacity="0.1" stroke="#B24BA6" stroke-width="2" stroke-linejoin="round"/><path d="M72 358.8l12 0 3.6 1.1 3.6-1.2 3.6 .8 3.6-.9 2.7 .6 .9-.7 3.6-.4 1-1.1 2.6-.4 3.6 .6 3.6-.2 3.6 .1 3.6 0 3.6-.3 3.6 .9 3.6-1 3.6 .2 3.6-.3 3.6 .4 3.6 .3 3.6 .7 3.6-.7 3.6-.3 3.6 .2 1.8 .3 1.8 .1 3.6-2.6 .2 .6 3.4 .2 3.6-.4 3.6 .4 3.6-.4 3.6 .5 3.6-.3 3.6 .2 3.6 .4 3.6-.5 3.6-.6 3.6-.1 3.6 1.2 3.6-.6 3.4 0 .2-.4 3.6 1.2 3.6-.4 3.6 .3 3.6 .3 3.6-.7 3.6 .3 3.6 .8 3.6-.9 3.6 1 3.6-.8 3.6 1 3.6 .1 3.6 .5 3.6 0 3.6-.4 1.4 0 2.2-.3 3.6-.1 3.6 .6 3.6 .1 3.6-.6 3.6 1.2 3.6-.5 3.6 .3 3.6-.6 3.6 .1 3.6-.3 3.6 .6 3.6-.1 3.6 .3 3.6 0 3 .2 .6 .4 3.6-.1 3.6-1.2 3.6 .2 3.6-.5 3.6 .5 3.6 .2 3.6-1.2 3.6 .6 3.6-.9 3.6-.5 3.6 .8 3.6-.7 3.6-.5 3.6 .2 3.6-.4 1 .3 2.6-.1 3.6 .1 3.6 0 3.6 .3 3.6-.3 3.6-.3 3.6 .1 3.6 .1 3.6 .6 3.6-.2 3.6 .7 3.6-.4 3.6 .4 3.6 .4 3.6-1.2 2.6 .6 1-.6 3.6 .3 3.6 .4 3.6 .4 3.6 .3 3.6-.4 3.6 .9 3.6-1.2 3.6 1.3 3.6-.8 3.6 1 1.9-.5 1.7-.8 3.6 .9 3.6-.7 3.6-.1 3.6-1 .6-.2 3-.5 3.6 1 3.6-.8 3.6-.6 3.6 .6 3.6-.2 3.6-.2 3.6-.5 3.6-.1 3.6 .5 3.6-.2 3.6-.6 3.6 .4 3.6 .3 3.6-.1 2.2-.4 1.4 0 3.6 0 3.6 0 3.6-.1 3.6 0 3.6 .4 3.6-.4 3.6 1 1.2-.3 2.4 .4 3.6 .1 3.6-.6 3.6 .7 3.6 .3 3.6-.3 3.6 1.5 3.6-.1 .2-.4 3.4 .2 3.6 .4 3.6-.6 3.6 .2 3.6 .6 1.5 0 2.1 .4 3.6 0 3.6-.9 3.6 1 3.6 .5 3.6-.2 3.6 .4 3.6 .2 3.6-1 3.6 .2 3.6 .4 3.6 .7 3.6-.7 3.6 .8 3.6 0 3.6-.4 2.1 .1 1.5 .2 3.6 .5 3.6-.1 3.6-.6 3.6 .8 3.6-.8 3.6 .4 3.6 .9 3.6-.1 3.6-.7 3.6 .1 3.6 .5 3.6 .5 3.6-.2 3.6 .5 3.6-.2 2.7-.3 .9 .4 3.6-.5 3.6-.5 3.6-.1 3.6-.2 3.6-.1 3.6 .2 3.6-1 3.6-.4 3.6 .7 3.6-.9 3.6 .1 3.6-.7 3.6 .8 3.6-1 3.6-.1 3.6 .5 3.6-.6 3.6-.5 3.6 .6 3.6-.9 3.6-.2 2.1 0 1.5 .8 3.6-.1 3.6 .1 3.6-.6 3.6 1 3.6-.2 3.6 .5 3.6-.5 3.6 .8 3.6 .1 3.6-.4 3.6 .5 3.6 .4 3.6 .4 3.6 .1 3.6 0 3.6-.8 3.6 .8 3.6 .3 .6-.2 3-.6 3.6 .5 3.6 .5 3.6 .1 3.6 0 3.6-1.2 3.6 .7 3.6 .4 3.6-.3 3.6-.5 3.6-.4 3.6 1.2 3.6-.1 3.6-.3 3.6-.4 3.6 .6 3.6 0 3.6-.1 3.6-.2 3.6-.4 3.6-.1 3.6 .1 3.6 0 3.6 .2 3.6-.6 3.6 .9 3.6-.5 3.6-.3 3.6 .1 3.6 .2 3.6 0 3.6 .5 3.6-1 3.6 .2 3.6 .1 3.6-.2 3.6 .8 3.6-.9 3.6-.1 3.6 .7 3.6 .2 3.6 .2 3.6-.4 3.6-.4 3.6 .8 3.6-.2 3.6-.4 3.6 .1 3.6 .5 3.6 .1 3.6-.1 3.6-1.1 3.6 .2 3.6 .1 3.6-.3 3.6 .8 3.6-1 3.6 1.2 3.6-.5 3.6 .1 3.6-.3 3.6 .7 3.6-.5 3.6 .4 3.6 0 3.6-.3 3.6 .4 3.6-.7 3.6-.2 3.6 .7 3.6-.5 3.6-.3 3.6 .5 3.6-.3 3.6-.5 3.6 1 3.6-.5 3.6 .7 3.6-.7 3.6 .6 1.6-.9 12 0 0 20.5 -1120 0Z" fill="#705F9E" fill-opacity="0.1" stroke="#705F9E" stroke-width="2" stroke-linejoin="round"/></g>
<path d="M84 366.0H1180 M84 284.3H1180 M84 202.7H1180 M84 121.0H1180" stroke="rgba(200,200,200,0.24)" stroke-width="2" fill="none"/>
<path d="M119.0 121V366 M264.1 121V366 M409.3 121V366 M554.4 121V366 M699.6 121V366 M844.7 121V366 M989.8 121V366 M1135.0 121V366" stroke="rgba(200,200,200,0.24)" stroke-width="2" fill="none"/>
<rect x="66.1" y="437.5" width="23.5" height="6.5" rx="2.5" fill="#80B071"/>
<text x="98.1" y="448" class="lg" textLength="112.4" lengthAdjust="spacingAndGlyphs">ictsc-m4-01</text>
<rect x="233.5" y="437.5" width="23.5" height="6.5" rx="2.5" fill="#E5B84F"/>
<text x="265.5" y="448" class="lg" textLength="113" lengthAdjust="spacingAndGlyphs">ictsc-m4-03</text>
<rect x="400.9" y="437.5" width="23.5" height="6.5" rx="2.5" fill="#7ACFDF"/>
<text x="432.9" y="448" class="lg" textLength="113" lengthAdjust="spacingAndGlyphs">ictsc-m4-04</text>
<rect x="568.2" y="437.5" width="23.5" height="6.5" rx="2.5" fill="#E6874A"/>
<text x="600.2" y="448" class="lg" textLength="113" lengthAdjust="spacingAndGlyphs">ictsc-m4-05</text>
<rect x="735.4" y="437.5" width="23.5" height="6.5" rx="2.5" fill="#D95E4F"/>
<text x="767.4" y="448" class="lg" textLength="113" lengthAdjust="spacingAndGlyphs">ictsc-m4-06</text>
<rect x="902.8" y="437.5" width="23.5" height="6.5" rx="2.5" fill="#3A78BE"/>
<text x="934.8" y="448" class="lg" textLength="113" lengthAdjust="spacingAndGlyphs">ictsc-m4-07</text>
<rect x="66.1" y="475.5" width="23.5" height="6.5" rx="2.5" fill="#B24BA6"/>
<text x="98.1" y="486" class="lg" textLength="106" lengthAdjust="spacingAndGlyphs">ictsc-s7-08</text>
<rect x="225.7" y="475.5" width="23.5" height="6.5" rx="2.5" fill="#705F9E"/>
<text x="257.7" y="486" class="lg" textLength="106.5" lengthAdjust="spacingAndGlyphs">ictsc-s7-10</text>
<rect x="1250.5" y="48.5" width="1205" height="459" rx="5" fill="#141516"/>
<rect x="1252" y="50" width="1202" height="456" rx="4" fill="#212124"/>
<text x="1852.0" y="86" class="ttl" text-anchor="middle" textLength="210.5" lengthAdjust="spacingAndGlyphs">m4 s7 CPU Usage</text>
<path d="M2446 492 h4 v10 h-10 v-4 h6 z" fill="#5d5d5d"/>
<text transform="translate(1350 371.0) scale(.894 1)" class="ax" text-anchor="end">0</text>
<text transform="translate(1350 309.6) scale(.894 1)" class="ax" text-anchor="end">25</text>
<text transform="translate(1350 248.2) scale(.894 1)" class="ax" text-anchor="end">50</text>
<text transform="translate(1350 186.9) scale(.894 1)" class="ax" text-anchor="end">75</text>
<text transform="translate(1350 125.5) scale(.894 1)" class="ax" text-anchor="end">100</text>
<text transform="translate(1397.0 398.0) scale(.894 1)" class="ax" text-anchor="middle">06:00</text>
<text transform="translate(1535.0 398.0) scale(.894 1)" class="ax" text-anchor="middle">06:10</text>
<text transform="translate(1673.0 398.0) scale(.894 1)" class="ax" text-anchor="middle">06:20</text>
<text transform="translate(1811.0 398.0) scale(.894 1)" class="ax" text-anchor="middle">06:30</text>
<text transform="translate(1949.0 398.0) scale(.894 1)" class="ax" text-anchor="middle">06:40</text>
<text transform="translate(2087.0 398.0) scale(.894 1)" class="ax" text-anchor="middle">06:50</text>
<text transform="translate(2225.0 398.0) scale(.894 1)" class="ax" text-anchor="middle">07:00</text>
<text transform="translate(2363.0 398.0) scale(.894 1)" class="ax" text-anchor="middle">07:10</text>
<defs><clipPath id="ccpu"><rect x="1362" y="100.5" width="1044" height="266.5"/></clipPath></defs><g clip-path="url(#ccpu)"><path d="M1350 351.3l12 0 3.5 .2 3.4 .6 3.4-.8 3.5 .1 3.4 .1 3.5-.6 3.5 .5 3.4 .2 3.4 .3 3.5-1.1 3.5 .3 3.4-.4 3.4 1.2 3.5-.2 3.5-1 3.4 1.5 .4-.8 3.1 .1 3.4-1.2 3.4-.8 3.5-1.5 3.5-1 3.1 .1 .3 .2 3.4 .7 3.5 1.7 2.8 1.7 .6-.4 3.5-.4 3.5 .7 3.4 0 3.4 .6 3.5-.5 3.5 .2 3.4-.2 3.4 .3 3.5-.4 3.5-.3 3.4 1.2 3.5 0 3.4-.3 3.4-.2 3.5-.6 3.5-.1 3.4 .1 3.4-.4 3.5 1.1 3.4-.6 3.5 .8 3.5-.8 3.4 .9 3.4-.1 3.5-1.4 3.5 .3 3.4 1.2 3.4-.7 3.5 .8 3.5-1 3.4-.5 3.5 .9 3.4 .2 3.4-.8 3.5-.3 3.5 .4 3.4 1 3.4-.3 3.5-1 3.4 .2 3.5-.2 3.5-.1 3.4 1.2 3.4-1 3.5 .6 3.5-.2 3.4-.4 3.4 .9 3.5-1 3.5 .8 3.4-.8 3.5 .5 3.4-.4 3.4 .1 3.5 1.2 3.5-.3 3.4-.8 2.9 .3 .5 .3 3.5-3.4 1-.2 2.4 .4 3.5 1.4 1.6-.3 1.9 .4 3.4-.7 3.4 1.5 3.5-1 3.5 .2 3.4 1 3.4-.6 3.5 .1 3.5-.2 3.4 .2 3.5 1 1.1-.1 2.3-1.4 3.4-1.1 3.5-1.9 3.3-1.4 .2 0 3.4 2.9 3.4 1.3 .6 .4 2.9 .2 3.4 .7 3.5-.9 3.5 .1 3.4 1.4 3.4 0 3.5-.7 .1 .4 3.4-2.5 2.9-1.3 .5 .7 3.4 2 3.5 .6 .1 .5 3.4 .7 3.4-.1 3.5-.4 3.4-.3 3.4-.5 3.5-.1 3.5 1.4 3.4-1.1 3.4 .7 3.5-.7 3.4 .9 3.5-.3 3.5-.5 3.4-.2 3.4 .9 3.5-1.1 3.5 .3 3.4 .5 3.4 .5 3.5-.4 3.5-.6 3.4 1.1 3.5-1.2 3.4-.3 3.4 .4 3.5 .3 3.5-.6 3.4 .2 3.4 .3 3.5 .3 3.4-.7 3.5 .4 3.5 .8 3.4 .2 3.4-.5 3.5 0 3.5-.2 3.4-.7 3.4-.1 3.5-.1 3.5 1.5 3.2-.7 .2 .3 3.5 .5 3.4-1.4 3.4 1 3.5-.1 3.5 .4 3.4-.6 3.4 1.2 3.5-1.4 1.4 .7 2 .1 3.5 .3 3.5 .2 3.4-.2 3.4-.1 3.5 .1 3.5 .2 3.4-.9 3.4 .6 3.5 .3 3.5 0 3.4-.8 3.5 .6 3.4 .2 3.4-.5 3.5 .1 3.5-.4 3.4 .3 3.4 .1 3.5-.9 3.4 .9 3.5 .6 3.5-.2 3.4-.3 3.4-.5 3.5 .6 3.5-.3 3.4-.2 3.4 .6 3.5-1.2 3.5 1.1 3.4-1.2 3.5 .9 3.4-.1 0 0 3.5-12.8 3.4-11.7 .8-3.3 2.6 9.3 3.5 12.6 1.7 5.9 1.7 .7 3.5-1.1 3.4-.4 3.5 .5 3.5 .6 3.4-.8 3.5 0 3.4 1.1 3.4-.4 3.5-.3 3.4 .7 3.5-.9 3.5 .5 3.4-.7 3.5 .4 3.4 .6 3.5 .1 3.4 0 3.4-.8 3.5 .3 3.4-.4 3.5-.3 3.4 .6 3.5 .5 3.5 0 3.4-.2 3.5 .4 3.4-1.1 3.4-.1 3.5 .4 3.4-.3 3.5-.1 3.5 .3 3.4 .4 3.5-.2 3.4-.3 3.5 .8 3.4 .3 3.4-.9 3.5-.6 3.4-.1 3.5 1.4 3.4-1.4 3.5 1.1 3.5-.2 3.4-.4 3.5 .7 3.4-1.2 3.4 .2 3.5 .5 3.4-.7 3.5 1.3 3.5-.9 3.4-.2 3.5-.1 3.4 .9 3.5-.3 3.4 .3 3.4 0 3.5 .3 3.4 .2 3.5-.4 3.4-.8 3.5 .4 3.5-.4 3.4-.3 3.5 .7 3.4 .4 3.4-.8 3.5 .1 3.4 .1 3.5 .6 3.5-.3 3.4 .2 3.5 .2 3.4-.6 3.5 .6 3.4 .2 3.4-1.3 3.5 1.4 3.4-.4 3.5-.9 3.4 .5 3.5 .3 3.5 .4 3.4-.8 3.5 .3 3.4 .5 3.4-.1 3.5 .2 3.4-.8 3.5 .3 3.5-.7 3.4 .8 3.5 .2 3.4-.3 3.5 .1 3.4-.8 3.4 1.1 3.5 .1 1.8-.7 .3 .7 12 0 0 25.3 -1068 0Z" fill="#80B071" fill-opacity="0.1" stroke="#80B071" stroke-width="2" stroke-linejoin="round"/><path d="M1350 288.8l12 0 3.5 .3 3.4 0 3.4-.8 3.5-.2 3.4 .5 3.5-.1 3.5 .8 3.4-.2 3.4-.1 3.5-.1 3.5 .2 3.4-.8 3.4 .4 3.5-.4 3.5 1.2 3.4-1.4 3.5 1.2 3.4-1.1 3.4 .9 3.5-.5 3.5 .1 .6 .1 2.8 .4 3.4-1.5 3.5-.2 3.4 1.2 3.5-.9 3.4-.2 .1-.7 3.4 1.8 3.4 .3 3.5-1 2.1 .8 1.4-.2 3.4-.8 3.4-.1 3.5 .2 3.5-1.1 3.4 .5 3.5-1.4 3.4-.1 3.4 .7 3.5-1.1 3.5-.3 1.7 0 1.7 .1 3.4-.2 2.4 .1 1.1 .9 2.6 2.8 .8-.7 3.5 1.1 3.5 .4 3.4 0 3.4-.5 3.5-.5 .7 .2 2.8-.6 3.4-.1 3.4-.6 3.5-1.5 1.9 .3 1.6-.2 3.4 .6 3.5 .7 1.5 .2 1.9 .7 3.4-.2 3.5-.4 3.5 1.6 3.4-.3 3.4 .5 .9 .1 2.6-1 3.4-.3 3.5-.8 3-.4 .5 .5 3.4-.8 3.4 1.1 3.5-.3 3.5 1.2 3.2 0 .2-.7 3.4 .4 3.5 .1 3.5 .5 3.4-1 3.5 .7 2.6 0 .8-.7 3.4-.9 3.5-.7 2.3-.7 1.2 .9 3.4-.2 3.4 1.2 3.5-.8 1 .7 2.4 1.3 3.5 0 1.6 .7 1.9-.6 3.4 .7 3.4 .1 3.5-1.6 3.5 .3 3.4 .6 3.4-.8 3.5-.3 3.5-.6 3.4-.1 3.5 .8 3.4 .4 2.7-.9 .7 .4 3.5-2.5 .8-.4 2.7-.5 2.3 1 1.1 .8 2.7 3.2 .7 .4 3.5-.1 3.4-.6 3.5-.8 3.5 .2 3.4-.3 3.4 0 2.4-.3 1.1-14.4 2.6-32.4 .9-.4 2.4-3.9 1 .5 3.2-1.2 .2 2.3 3.5 47.3 .1 1.7 3.4 1.4 1.6-.2 1.8-.3 3.5 1.2 3.4-.6 3.4 .4 3.5 .1 3.5-.6 3.4 .2 2.5 .4 .9-.4 3.5 .5 3.4-.1 3.5-1.1 3.5 1.1 3.4-.9 3.4-.4 3.5 .2 3.5 .7 3.4-.8 3.4 0 2.2-.3 1.3 .5 3.5-.4 2.7-1.1 .7 .8 3.5 1.1 .8 .6 2.6 0 3.4 .3 3.5-.4 3.5-.6 3.4-.5 3.4-.2 3.5 .4 1.7-.5 1.7 .1 3.5-.9 3.5 1.1 3.4 .3 3.4-.1 3.5 .1 3.5 0 3.4-.6 3.4 .5 3.5-.7 3.5-.5 3.2 .7 .2-.2 3.5 0 3.4 1 3.4-.3 3.5-.2 3.5 .2 3.4-.7 3.4 .7 3.5 .3 1.4-.3 2-.1 3.5-.2 3.5 .3 3.4 0 3.4 .6 3.5-.8 3.5 0 3.4 .4 3.4 .7 3.5 .2 3.5-.1 2-.2 1.4 .6 3.5-.9 3.4-.6 3.4 .6 3.5-.1 3.5-.5 3.4 .7 3.4-.6 3.5-.2 3.4 0 3.5 1 2.8-.8 .7-.8 3.4 .6 3.4-.2 3.5-.1 3.5 .4 3.4-.3 3.4 1.1 3.5-.7 3.5 .3 3.4-.8 3.5 .4 1.5 .1 1.9-9 1.9-9.6 1.6 .4 3.4-1.3 3.4-.1 1.3-.1 2.2 12.1 1.7 8.4 1.7 .5 3.5-1 3.4 .5 3.5 .4 3.5-.6 3.4 .4 3.5 0 .7-.2 2.7 .7 3.4-.7 3.5 .1 3.4-.6 3.5 .6 3.5-.7 3.4 .2 3.5-.2 3.4-.2 3.5-.3 3.4 .1 3.4 .5 3.5-.6 3.4-.3 3.5 1.1 3.1-.5 .3-.5 3.5-.3 3.5-2 .4-.3 3 1.3 3.5 2.5 1.2 .1 2.2 .6 3.4-.9 3.5-.3 3.4 .8 3.5 .3 3.5-.4 3.4 .3 3.5-.6 3.4 .4 3.5-.6 3.4 .2 3.4 0 3.5 0 2.8 .2 .6-.2 3.5 .6 3.4-1 3.5 0 3.5 .1 3.4 1.1 3.5-.8 3.4-.7 3.4 1.2 3.5 0 3.4-.1 3.5-.8 3.5 .6 3.4-.7 3.5-.3 3.4 1.1 3.5 0 3.4-1.1 3.4 1.1 3.5-1.4 3.4 .4 3.5-.5 3.4 .2 3.5 0 3.5 .8 3.4-.6 3.5-.2 3.4-.1 2.8 .5 .6-.5 3.5-.1 3.4-1.5 .3-.2 3.2 .6 3.5 2.4 1 .1 2.4 0 3.5-.1 3.4 .1 3.5 .2 3.4 .3 3.4-.5 3.5 .2 3.4-.3 3.5 .3 3.4-.4 3.5 0 3.5 .2 3.4 .3 3.5-.7 3.4 1.1 3.4-.7 3.5 .5 3.4-.2 3.5 .4 3.5-.4 3.4-.4 3.5-.1 3.4 .3 3.5 .3 3.4 .1 3.4-1.1 3.5-.1 1.8 .7 .3-.7 12 0 0 89.3 -1068 0Z" fill="#E5B84F" fill-opacity="0.1" stroke="#E5B84F" stroke-width="2" stroke-linejoin="round"/><path d="M1350 351.7l12 0 3.5 .7 3.4 0 3.4 .2 3.5-1.2 3.4 0 3.5-.2 3.5 .1 3.4 .9 3.4-1.2 3.5 .7 3.5-.6 3.4 .1 3.4 .2 3.5 .6 3.5-.4 3.4-1.1 3.5 .4 3.4-.3 3.4 1.3 3.5-.2 3.5-.1 3.4 0 3.4-.2 3.5 .3 3.4-.3 3.5-1 3.5 1 3.4-.7 3.4 .5 3.5-.4 3.5-.3 3.4-.2 3.4 .1 3.5-.3 3.5-.4 3.4 1.2 3.5-.1 3.4 .3 3.4-.6 3.5-.3 .1 0 3.4 .4 3.4-1.1 3.4 1 3.5-.4 3.4-.5 3.5 .1 3.5 .6 3.4-.5 3.4 .4 3.5 .3 3.5-.4 3.4-.4 3.4 .6 3.5-.4 3.5 0 3.4-.1 3.5 .3 3.4-.5 3.4 1.1 3.5 .5 3.5-1 3.4 .7 3.4 .4 3.5-1.6 3.4 .2 3.5 1.2 3.5 0 3.4-.3 3.4-.9 3.5 .5 3.5 .8 3.4 .1 3.4-.1 3.5-1.1 3.5 1.2 2-.6 1.4-.3 3.5 .7 3.4-1.1 3.4 1.6 3.5-.7 3.5 .3 3.4-.9 3.4 .7 3.5 0 3.4 0 3.5-.4 3.5 .7 3.4-.7 3.4 0 3.5-.2 3.5 .9 3.4-1 3.4 .2 3.5-.2 3.5 1 3.4-.1 3.5 0 3.4-.9 3.4 .8 3.5-.2 3.5-.4 3.4-.2 3.4 1.8 3.5-1.5 3.4 .3 3.5 0 3.5 .6 3.4-.9 3.4 .7 3.5-.1 .1 .2 3.4-38.4 1.6-20.4 1.8-3.5 .7-.3 2.5 3.8 .2 2 3.5 38.2 1.4 14.8 2.1 2.3 1.6 .3 1.8-.1 3.5-.1 3.4 .3 3.4-.8 3.5-.5 3.5 .8 3.4 .6 3.4-.4 3.5-.9 3.4 .7 3.5 .2 3.5-1.1 3.4 .5 3.4-.5 3.5-.3 3.5 .1 3.4-.3 3.1 .5 .3-.3 3.5-.4 3.5 .8 3.4-.4 3.5 1.4 3.4-.1 3.4-.9 3.5 1.5 3-.3 .5-.6 3.4 .6 3.4 .2 3.5-.3 3.4 0 3.5 .4 3.5-.5 3.4 1.4 3.4-1.3 3.5 1.4 3.5-1 3.4 .2 3.4 .3 3.5-.6 3.5 .3 3.2 .7 .2-.2 3.5 .3 3.4 1 3.4 .4 3.5-1.5 3.5 1.1 3.4-.5 3.4 1.4 3.5-.7 1.4 .4 2 .7 3.5-.6 3.5-.7 3.4-.3 3.4 .5 3.5 1.1 3.5-1.3 3.4 .6 3.4-.2 3.5 0 3.5 .8 3.4-1.1 3.5 .9 3.4-.1 3.4 .5 3.5-.7 3.5 .7 3.4-.9 3.4 .3 3.5 .1 3.4 .4 3.5 .1 3.5-1.5 3.4 .1 3.4 .7 3.5 .5 3.5-.5 3.4-.4 3.4 1.2 3.5-1.2 3.5-.4 3.4-.1 3.5 0 3.4 1.2 0-.4 3.5-31.1 3.4-29.6 .1-1.1 3.3-1 .5-.9 3 40.3 1.7 21.5 1.7 .6 3.5-.6 3.4 .4 3.5 .4 3.5-.1 3.4-.7 3.5 .9 3.4-1.1 3.4 .4 3.5 1.3 3.4-.8 3.5-.3 3.5 1 3.4-.6 3.5-.7 3.4 .1 3.5 .5 3.4 .2 3.4 1.1 3.5-1.2 3.4 1.2 3.5 .1 3.4-.7 3.5 1.1 3.5-.4 3.4-.4 3.5-.4 3.4 .5 3.4 .8 2.2-.7 1.3 .1 3.4-.6 3.5 .3 3.5 .2 3.4-.5 3.5 .7 3.4-1 3.5 1.4 3.4-1.1 3.4-.2 3.5 .9 3.4-.5 3.5 1 3.4-.7 3.5 .1 3.5 .5 3.4-1.1 3.5 1 3.4-.2 3.4-.4 3.5 1 3.4-1.7 3.5 1.5 3.5-1.3 3.4 1.3 3.5-1.3 3.4-.2 3.5 .8 3.4 .8 3.4-1.2 3.5 .4 3.4 .2 3.5-.6 3.4 .5 3.5-.9 3.5 .7 3.4 .6 3.5-.7 3.4-.3 3.4-.3 3.5 1.2 3.4-.5 3.5 .9 3.5-.3 3.4-1.2 3.5 1.5 3.4 0 3.5-.2 3.4 0 3.4-.2 3.5 0 3.4-.1 3.5-.1 3.4-.6 3.5-.2 3.5 1 3.4-.2 3.5-1 3.4 1.1 3.4-.1 3.5-.1 3.4 .4 3.5 .2 3.5-.9 3.4 .8 3.5-.6 3.4 .2 3.5-.3 3.4 .9 3.4-.9 3.5 1 1.8-.9 .3-.3 12 0 0 25.2 -1068 0Z" fill="#7ACFDF" fill-opacity="0.1" stroke="#7ACFDF" stroke-width="2" stroke-linejoin="round"/><path d="M1350 328.9l12 0 3.5 1.2 3.4 0 3.4 .6 3.5-1.3 3.4 0 3.5 1 3.5-.1 3.4-.6 2.9 .4 .5 .2 3.5-1.6 3.5-.2 3.4-2.4 1.6 .3 1.8-.1 3.5 2.2 3.5-.1 3.4 .7 .4 .5 3.1-.3 1.9-1.2 1.5 .5 3.4-.4 3.5 1.4 3.5 .8 .6-.3 2.8-1.5 3.4 0 3.5-2.1 2.8-.1 .6-.2 3.5 .2 3.5 .9 3.4 2.2 1.5-.6 1.9-.5 3.5 .7 3.5-1.6 3.4-.2 3.4 .1 1.8-1 1.7 .7 3.5-.5 3.4 1.7 3.5 .8 .4-.2 3-.4 3.4 0 3.5 1.9 .1-.8 3.4-.3 3.4-1 3.4 .1 3.5-.9 3.4 .8 3.5-1 2-.2 1.5-.4 3.4 2.2 3.4-.6 3.5 1.2 .7 .6 2.8-1.3 3.4 1 3.4-1.7 .4 .8 3.1-3.3 3.5-4.5 2.1-1.5 1.3 .6 3.5 2 1.5 .4 1.9 1.7 3.4 2.7 2.2 1.9 1.3-1 3.5-2.7 .2-.1 3.2 1.7 3.4 .5 3.4 2.3 .1 0 3.4-1.2 3.5 .7 3.5-.5 3.4-2.4 3.4-.5 .2 .7 3.3 1 3.5 .3 3.2 .4 .2-.9 3.4 1.6 3.5 .7 3.5-.7 3.4 .1 3.5 .7 2.6 0 .8 0 3.4-5.4 .8-.3 2.7-1 3.5-.9 0 .6 3.4 5.2 .4 .3 3 .3 3.5-.1 3.4 .6 3.5-.4 1.6 1.1 1.9-.6 3.4 .7 3.4-1.3 3.5-1.2 3.5 .8 3.4-1.8 .9 .2 2.5-.1 3.5 .1 3.5 .8 3.4 .7 3.5 .6 3.4 1.8 .2-.7 3.2-.9 3.5-.5 3.5 .3 3.4 .2 1.5-1.1 1.9-.9 3.5 .1 3.4-1.7 3.5-.4 3.5-.8 3.4-.2 .8-1.1 2.6 1.2 2.4 .1 1.1-10.9 3.5-33 .4-4.9 3-19.6 3.2-20.5 .2 2.7 3.5 49.4 .1 .5 2.5 32.5 .9 .9 3.4 3.4 3.5 2.1 2.2 2.4 1.2 .6 3.4-1.1 3.5-1.2 3.5 .9 3.4-1.4 2.5-.3 .9-.3 3.5 .2 3.4 0 3.5 .5 3.5 1.2 3.4-.8 1.9 .9 1.5-.3 3.5 .7 3.5 .6 3.4 0 3.1 .5 .3 .5 3.5-1.6 3.5-.3 3.4-.5 3.5-1.1 3.4-.4 3.4-.7 3.5 .5 3.5-1.7 3.4 .5 3.4-1.5 .2 .6 3.3 1.2 3.4 1 3.5 .4 3.5 2.2 3.4 .4 2.9 .5 .5 .1 3.5-1.4 3.5 .4 3.4-.6 3.4 0 3.5 .6 3.5-.5 3.2-1.1 .2-.8 3.5 1.7 3.4 1 3.4-.4 3.5-.4 3.5 2 3.4-.4 3.4 1.6 3.5 .3 1.4-.6 2 .7 3.5 .2 3.5-1.8 3.4 1.5 3.4-1 3.5 .4 3.5-.9 3.4 .3 3.4 .2 3.5-1.3 3.5 .7 3.4 .5 3.5-.8 3.4-.1 3.4-.7 3.5 1.2 3.5-1.6 3.4 .7 3.4-.3 3.5-1.5 3.4 1.8 3.5-1.7 2.8 .4 .7 1 3.4 .1 3.4 .1 3.5 .1 3.5-.7 3.4 .3 3.4-.1 3.5 1.4 3.5-1.6 3.4 .4 3.5 1.8 1.5-.8 1.9-4.2 1.9-5.5 1.6-.3 3.4-1.1 .8-1.3 2.6 4.7 3.3 5.7 .2 .7 3.4-.3 3.5 1.3 3.4-1.2 3.5 1.1 3.5 .7 3.4 .9 3.5-.3 .7 .2 2.7 .3 3.4 .5 3.5-1.2 3.4-.6 3.5-.4 3.5 1.5 3.4-.8 3.5-.3 3.4 .1 3.5-.9 3.4 .1 1.4 .6 2-.7 3.5-.1 3.4 1.1 3.5-1.4 3.4-.5 3.5 1.4 3.5-.8 3.4-1.2 3.5 1.1 3.4-.1 3.4-.3 3.5 .1 3.4-.8 3.5-.6 3.5 .9 3.4-.4 3.5 0 .7-.5 2.7-.3 3.5 .7 3.4 1 3.4-.3 3.5 .8 3.4 .1 3.5 .9 3.4-.5 3.5 .7 3.5 1 3.4-.7 1.4 .5 2.1-.6 3.4 .9 3.4-1 3.5 1.4 3.4-1.1 3.5 1.2 3.5-.7 3.4-.8 3.5 .8 3.4 .3 3.5-.4 3.4 .3 3.4-.6 3.5 1.2 3.4-1.5 3.5 1.2 3.4-1.5 3.5 .9 3.5-.9 3.4 .2 3.5 .9 3.4 .6 3.4-1.2 3.5 .2 3.4 .2 3.5 .2 3.5-.5 3.4 0 3.5 1 3.4-.6 3.5-.4 3.4 .9 3.4 .4 3.5-1.1 3.4-.9 3.5 .6 3.4 1.2 3.5-1.4 3.5 0 3.4 1.2 3.5-1.4 3.4 1.5 3.4-1.2 3.5 .3 3.4 .4 3.5-1 3.5 1.4 3.4-.7 3.5 .7 3.4-.1 3.5-1.3 3.4 1.5 3.4 0 3.5-1.2 1.8 .5 .3 .2 12 0 0 46.7 -1068 0Z" fill="#E6874A" fill-opacity="0.1" stroke="#E6874A" stroke-width="2" stroke-linejoin="round"/><path d="M1350 356l12 0 3.5-1.8 3.4 1.3 3.4-1 3.5 1.5 3.4-1.8 3.5 1.5 3.5-.3 3.4 .3 3.4 .2 3.5-1.4 3.5 .2 3.4 .6 3.4-.8 3.5 0 3.5-.1 3.4 1.1 3.5 0 3.4-.1 3.4-1.1 3.5 1.3 3.5-.8 3.4-.5 3.4 .4 3.5-.1 3.4-.6 3.5 .8 3.5-.4 3.4 .4 1.5-.1 1.9 .7 3.5-.5 3.5-.5 3.4 .8 3.4 .2 3.5-.9 3.5 .8 3.4-1.7 3.5 .2 3.4 0 3.4 1.4 3.5-.5 3.5 0 3.4-.8 3.4 .4 3.5 .6 3.4-1.4 3.5 0 3.5-.1 3.4 .7 3.4 .6 3.5-.5 3.5-.3 3.4 .1 3.4-.6 3.5 1.4 3.5-1.1 3.4-.2 3.5 .1 1.5 .3 1.9 .6 3.4-.9 3.5 1.1 3.5-1 3.4 .2 3.4-.7 3.5 1.5 3.4-.2 3.5-.5 3.5-.7 3.4 .7 3.4-.2 3.5 .9 3.5 .2 3.4-.4 3.4-.8 3.5-.4 3.5 1.6 3.4 .1 3.5-1.4 3.4 .6 3.4 0 3.5 .9 3.5-1.7 3.4 .1 3.4 1.4 3.5-.5 3.4-.2 3.5 .6 3.5-.3 3.4 .2 3.4-.8 3.5-.3 3.5-.1 3.4 .6 3.4 .6 3.5-.5 3.5 0 3.4 .5 3.5 .1 3.4-.1 3.4-.5 3.5 .9 3.5 0 3.4 .1 3.4 .1 3.5-1.6 3.4 1.2 3.5-.6 3.5 .1 3.4 .3 3.4-.7 3.5 .2 .1 .5 3.4-33.7 1.6-18.4 1.8-.3 3.2 .3 .2 3.5 3.5 45.6 .1 1 3.4-.3 3.4 .2 3.5 .6 3.4 .3 3.4-.5 3.5-.4 3.5 .3 3.4 1.4 3.4-.1 3.5-1 3.4 1.4 3.5-.3 3.5-.3 3.4 1.1 3.4-1.2 3.5 .8 0-.8 3.5 .5 3.4 .7 3.4-.4 3.5-.1 3.5 .8 3.4-.9 3.5 .7 3.4-1.4 3.4 1.4 3.5-1.2 3.5 .9 3.4 .4 3.4-.4 3.5-.1 3.4-.1 3.5 .4 3.5-.7 3.4-.2 3.4 .6 3.5-.1 3.5-.7 3.4 .7 3.4-.1 3.5-.6 3.5 1 3.2-.3 .2 .5 3.5-.8 3.4 1 3.4 .3 3.5-.6 3.5-.4 3.4-.2 3.4-.2 3.5 .3 1.4 .5 2 .9 3.5-1.7 3.5 1.5 3.4-.4 3.4 .2 3.5-1.2 3.5 .9 3.4-.8 3.4 .9 3.5 .2 3.5-.1 3.4-.4 3.5 .7 3.4-1.2 3.4-.1 3.5 1.2 3.5-1.4 3.4 .6 3.4 0 3.5 .9 3.4-1 3.5 .4 3.5-.1 3.4-.1 3.4 0 3.5 0 3.5 .2 3.4-.2 3.4-.1 3.5 .9 3.5 .1 3.4-1.3 3.5 1.3 3.4-1.7 0 .9 3.5-20.9 2.3-13.9 1.1 .2 2.8-2.1 .6 3.4 3.5 21.6 1.7 9.7 1.7 .9 3.5-.6 3.4-.3 3.5-.7 3.5 .7 3.4 .1 3.5 .6 3.4-.7 3.4 .8 3.5-.7 3.4 .4 3.5 .2 3.5-1 3.4 1.4 3.5-.9 3.4 .1 3.5 .9 3.4-.7 3.4-.1 3.5-.5 3.4 0 3.5 1 3.4-.4 3.5 .3 3.5 .1 3.4 0 3.5-.7 3.4 1 3.4-.7 3.5-.5 3.4 1.3 3.5 .1 3.5-1.4 3.4 1.4 3.5-.4 3.4-.7 3.5 .6 3.4 .6 3.4-1.3 3.5 .9 3.4-.7 3.5-.2 3.4 1.5 3.5 .1 3.5-.6 3.4 .2 3.5-.7 3.4 .1 3.4 .4 3.5 .4 3.4-.2 3.5-.4 3.5 .3 3.4-.4 3.5 .8 3.4 .1 3.5-.2 3.4-.8 3.4 .2 3.5 1.1 3.4-1.1 3.5 .5 3.4-1 3.5 .1 3.5 .2 3.4 .8 3.5-.8 3.4 .8 3.4-1 3.5 1.1 3.4 .1 3.5-.8 3.5 0 3.4 0 3.5 .5 3.4-.6 3.5 .1 3.4 1.1 3.4 .2 3.5-1.3 3.4 .6 3.5 .3 3.4 .5 3.5-.6 3.5-.1 3.4 .5 3.5 0 3.4-.1 3.4-.1 3.5 .3 3.4-1.3 3.5 1.3 3.5-1 3.4 .3 3.5 .1 3.4 .2 3.5 .2 3.4 0 3.4-.5 3.5 .1 1.8 .3 .3 .3 12 0 0 22.6 -1068 0Z" fill="#D95E4F" fill-opacity="0.1" stroke="#D95E4F" stroke-width="2" stroke-linejoin="round"/><path d="M1350 357.4l12 0 3.5 .2 3.4-.2 3.4 0 3.5-.1 3.4 .5 3.5-.9 3.5 .8 3.4-1.3 3.4 .5 3.5 .1 3.5-.5 3.4 1.2 3.4-.9 3.2 .4 .3 .5 3.5 .1 3.4-1.7 3.5 1 3.4-.5 3.4-.5 3.5-1.6 3.5 .6 .6 .1 2.8 .3 3.4-.5 3.5 0 3.4 .3 3.5 0 3.5 1.2 3.4-.7 3.4 .3 3.5 .6 3.5 .7 3.4-1.2 3.4-.3 3.5 2 3.5-.2 2.3-.5 1.1 .5 3.5-.6 3.4-.7 3.4-.3 3.5 .2 3.5 .2 3.4-.9 3.4 1.2 3.5 0 3.4-1.6 3.5 1.6 3.5-.8 3.4 .7 3.4-1 3.5 .6 .7-.6 2.8-.1 3.4 .5 3.4-.2 3.5-.8 3.5 .3 3.4 .3 3.5 .5 3.4 0 3.4 .4 3.5 .4 3.5-.4 3.4-.1 3.4 .5 3.5 1 2.4-.8 1 .5 3.5-.3 3.5 .2 3.4-1.2 3.4-.3 3.5-.1 3.5 0 3.4-.3 3.4 1.1 3.5 .6 3.5-1.7 3.4 1.1 3.5 .4 3.4-.4 3.4-1.3 .8 .7 2.7 .3 3.5-.6 3.4-.1 3.4-.2 3.5 1.1 3.4 .9 3.5-1.5 3.5 .2 3.4 .5 3.4-.6 3.5 1 3.5 .6 3.4-.4 3.4-.7 2.5 1 1-1 3.5 .3 3.4 .9 3.5 .5 3.4-.9 3.4-.8 3.5 .2 3.5 .4 3.4-.7 3.4 0 3.5 .6 3.4 .8 3.5-1.2 3.5 1.2 3.4 0 3.4-1 2.9 .2 .6-11.5 2.6-45.6 .9-.8 3.4 .3 2-.8 1.4 20.7 2.3 30.7 1.2 2.6 2.6 3.6 .9-.6 3.4 .5 3.5-.7 3.4 .6 3.4 0 3.5-.3 3.5 0 3.4 1.9 3.4-1.4 3.5 .5 3.4 .1 3.5-.1 3.5 .3 3.4-.1 3.4 0 3.5 .1 0-.9 3.5 1.1 3.4 .1 3.4 .2 3.5-.8 3.5 .3 3.4 .7 3.5-.2 3.4-1.3 3.4 .6 3.5-.3 3.5 1.1 3.4-.6 3.4 0 3.5-.3 3.4 .5 3.5 .5 3.5-.2 3.4-.8 3.4 .4 3.5 .5 3.5-1.1 3.4 1.7 3.4-1.8 3.5 1.3 3.5-1 3.2 .8 .2 .9 3.5-.8 3.4-1.1 3.4 .3 3.5 .5 3.5-.2 3.4-.6 3.4-.3 3.5 0 1.4-.6 2 .9 3.5-.9 3.5 .2 3.4 .4 3.4-.6 3.5-.6 3.5 .7 3.4-.5 3.4 .7 3.5 0 3.5 .3 3.4-1.6 3.5-.2 3.4 1.8 3.4-.4 3.5 .5 3.5-.4 3.4 .2 3.4-1.6 3.5 .1 3.4 .8 3.5 .3 3.5-1.3 3.4 1.6 3.4-1.5 3.5 0 3.5 .4 3.4-.5 3.4-.2 3.5-.1 3.5-.1 3.4 .2 3.5 1.1 3.4 .1 0-.5 3.5-34.9 2.3-25 1.1-1.8 2.8-4 .6 7.8 3.5 36.7 1.7 19.2 1.7 .8 3.5-.8 3.4-.5 3.5 .5 3.5-.3 3.4 1.2 3.5-.7 3.4-.6 3.4 .4 3.5-.2 3.4 1.8 3.5-1 3.5 .8 3.4-.3 3.5-.3 3.4 .7 3.5-.2 3.4-1 3.4 2 3.5-1.3 3.4 .7 3.5-.4 3.4 1.2 3.5-1.5 3.5-.2 3.4 0 3.5 .8 3.4 1 3.4-.8 3.5 1.1 3.4-1.5 3.5 1.7 3.5-1.5 3.4 1.5 3.5-1.4 3.4 .9 3.5 .1 3.4 .8 3.4-1.1 3.5 1 2.8-.7 .6-.9 3.5 1.7 3.4-.7 3.5 0 3.5 .8 3.4-1.3 3.5 .6 3.4-.1 3.4-.6 3.5-.3 3.4 .6 3.5-.3 3.5 .6 3.4-.4 3.5-.7 3.4 1.2 3.5 .5 3.4-.6 3.4-.7 3.5 0 3.4 1.3 3.5-1 3.4 .5 3.5-1.3 3.5 1.5 3.4 .1 3.5-1.3 3.4 .1 3.4 .7 3.5 .6 3.4-.4 3.5-1.5 3.5 .2 3.4 1.5 3.5-1 3.4 1.1 3.5-1 3.4 .7 3.4-1.2 3.5 1.5 3.4-1 3.5-1 3.4 .4 3.5-.2 3.5 .6 3.4 1.1 3.5 0 3.4-.1 3.4-1.1 3.5 .7 3.4 0 3.5 .1 3.5 .3 3.4-.3 3.5-.1 3.4-.9 3.5-.3 3.4 .4 3.4-.2 3.5 .9 1.8-.5 .3-.7 12 0 0 23.6 -1068 0Z" fill="#3A78BE" fill-opacity="0.1" stroke="#3A78BE" stroke-width="2" stroke-linejoin="round"/><path d="M1350 364.7l12 0 3.5 .1 3.4 0 3.4-.2 3.5 .2 3.4-.1 3.5 0 3.5-.2 3.4 0 3.4 .1 3.5 .2 3.5-.2 3.4 .1 3.4-.1 3.5 .2 3.5 0 3.4-.2 3.5 .3 3.4-.4 3.4 .3 3.5 0 3.5-.3 3.4 .2 3.4 0 3.5 .1 3.4-.3 3.5 .2 3.5 .1 3.4-.1 3.4-.1 3.5-.1 3.5 .3 3.4-.1 3.4 .2 3.5-.4 3.5 .3 3.4 0 3.5 0 3.4-.3 3.4 .1 3.5-.1 3.5 .3 3.4-.2 3.4 .2 3.5-.2 3.4 .2 3.5 0 3.5-.2 3.4 .1 3.4 .1 3.5-.1 3.5-.1 3.4 0 3.4 .2 3.5-.3 3.5 .2 3.4 0 3.5 0 3.4-.2 3.4 .2 3.5 .1 3.5-.2 3.4 0 3.4 .2 3.5-.1 3.4-.1 3.5-.1 3.5 .3 3.4-.2 3.4 .1 3.5-.1 3.5 .1 3.4 .1 3.4-.2 3.5-.1 3.5 .4 3.4-.1 3.5-.3 3.4 .2 3.4 0 3.5-.1 3.5 .2 3.4 0 3.4-.1 3.5-.1 3.4-.1 3.5 .1 3.5-.1 3.4 0 3.4 0 3.5 .3 3.5-.1 3.4 .1 3.4 0 3.5 0 3.5-.3 3.4 .3 3.5-.3 3.4 .3 3.4 0 3.5-.1 3.5-.1 3.4-.1 3.4 0 3.5 .2 3.4-.1 3.5 .1 3.5-.1 3.4-.1 3.4 .1 3.5 .2 3.5-.1 3.4-.1 3.4 .1 3.5 0 3.5 0 3.4-.1 3.5 .3 3.4-.1 3.4-.2 3.5 0 3.5-.1 3.4 .1 3.4-.1 3.5 .3 3.4-.1 3.5-.1 3.5 .2 3.4-.2 3.4 .1 3.5 .1 3.5-.1 3.4 0 3.4-.1 3.5 .3 3.5-.1 3.4-.2 3.5 0 3.4 .1 3.4 0 3.5 0 3.5-.2 3.4 .2 3.4 0 3.5 .1 3.4-.2 3.5 0 3.5 .1 3.4 0 3.4 0 3.5-.2 3.5 .1 3.4 .3 3.4-.1 3.5-.1 3.5 .1 3.2-.1 .2-.2 3.5 .1 3.4 .1 3.4 .1 3.5-.3 3.5 .2 3.4 .2 3.4-.1 3.5 .1 1.4-.2 2-.1 3.5 .3 3.5 0 3.4-.4 3.4 .2 3.5 .1 3.5-.2 3.4 .2 3.4 .1 3.5 0 3.5-.2 3.4-.1 3.5 .1 3.4-.1 3.4 .1 3.5-.1 3.5 .1 3.4 .1 3.4 .1 3.5 0 3.4-.2 3.5-.2 3.5 .3 3.4-.1 3.4 .1 3.5 .1 3.5-.4 3.4 .3 3.4-.2 3.5 .1 3.5 0 3.4 0 3.5-.1 3.4 .1 3.5-.1 .4 .1 3-2.2 .8-.5 2.6-.1 1.3 .1 2.2 1.6 1.7 1.1 1.7 0 3.5-.1 3.4 .1 3.5-.1 3.5 .3 3.4-.1 3.5-.2 3.4 .1 3.4 0 3.5 0 3.4 0 3.5 0 3.5 .1 3.4-.2 3.5 .2 3.4-.2 3.5 .1 3.4 0 3.4 .2 3.5 0 3.4 0 3.5-.2 3.4 .1 3.5-.2 3.5 .2 3.4 0 3.5-.1 3.4 0 3.4 .1 3.5 0 3.4 .1 3.5-.3 3.5 0 3.4 0 3.5 0 3.4-.1 3.5 .1 3.4 .1 3.4 0 3.5 .2 3.4-.2 3.5-.1 3.4 .3 3.5-.3 3.5 .1 3.4 .1 3.5-.1 3.4 .2 3.4-.1 3.5-.1 3.4 .2 3.5 0 3.5-.2 3.4-.1 3.5 0 3.4 .3 3.5 0 3.4-.1 3.4 0 3.5 .1 3.4-.3 3.5 0 3.4 .3 3.5 0 3.5-.2 3.4-.1 3.5 0 3.4 .1 3.4 .2 3.5-.3 3.4 .1 3.5-.2 3.5 .3 3.4-.2 3.5 .2 3.4-.1 3.5 0 3.4-.1 3.4 .1 3.5 .2 3.4 0 3.5-.1 3.4-.2 3.5 0 3.5 .1 3.4 .2 3.5 0 3.4-.3 3.4 .2 3.5-.1 3.4 0 3.5-.1 3.5 .2 3.4 0 3.5 .1 3.4-.2 3.5 0 3.4 .1 3.4-.2 3.5 .3 1.8-.2 .3 .1 12 0 0 13.2 -1068 0Z" fill="#B24BA6" fill-opacity="0.1" stroke="#B24BA6" stroke-width="2" stroke-linejoin="round"/><path d="M1350 351.8l12 0 3.5 .5 3.4-.3 3.4-.2 3.5 .3 3.4 0 3.5 0 3.5 0 3.4-.2 3.4 0 3.5 .5 3.5-.5 3.4 .5 3.4 .1 3.5 .1 3.5 .1 3.4-.9 3.5 0 3.4 .6 3.4-.2 3.5-.4 3.5 .6 3.4 .2 3.4 0 3.5-.8 3.4 .1 3.5-.3 3.5 1.1 3.4-.9 3.4 .6 3.5-.2 3.5 .1 3.4-.1 3.4 .3 3.5-.2 3.5-.4 3.4-.2 3.5 .4 3.4 .6 3.4-1 3.5 .7 3.5-.1 3.4-.6 3.4 .1 3.5 .6 3.4-.3 3.5-.1 3.5 .1 3.4-.4 3.4 .7 3.5-.1 3.5-.1 3.4-.2 3.4 .5 3.5 0 3.5-.3 3.4-.5 3.5 0 3.4 0 3.4-.1 3.5 .7 3.5-.1 3.4-.4 3.4 .8 3.5-.3 3.4 .2 3.5 0 3.5-.1 3.4-.2 3.4 .5 3.5-1 3.5 .7 3.4 .2 3.4-.5 3.5 .4 3.5-.7 3.4 .3 3.5-.2 3.4 .1 3.4 .4 3.5-.7 3.5 .3 3.4 .6 3.4-.7 3.5-.2 3.4 1 3.5-.5 3.5-.6 3.4 .6 3.4-.5 3.5 0 3.5 .7 3.4-.1 3.4-.2 3.5 .1 3.5 0 3.4-.1 3.5-.4 3.4 .8 3.4 0 3.5-.4 3.5-.1 3.4 .3 3.4-.2 3.5 0 3.4 .5 3.5 0 3.5-.9 3.4 .1 3.4 .7 2.4-.3 1.1 .2 3.5-1.1 3.4-1.4 2-.3 1.4 .2 3.5 2.7 .1-.3 3.4 .5 3.4-.2 3.5-.1 3.4 .3 3.4-.5 3.5 .5 3.5-.8 3.4-.3 3.4 1 3.5-.2 3.4 .1 3.5-.8 3.5 .2 3.4 .4 3.4-.7 3.5 .3 3.5 .4 3.4 .4 3.4-.3 3.5-.4 3.5 0 3.4 .2 3.5 .2 3.4 .3 3.4-1.1 3.5 1.1 3.5-.2 3.4-.9 3.4 .3 3.5 0 3.4-.1 3.5-.1 3.5 0 3.4 .7 3.4-.3 3.5-.4 3.5 .9 3.4 0 3.4-.7 3.5 .6 3.5 0 3.2-.3 .2 0 3.5-.4 3.4 .8 3.4 .4 3.5 .1 3.5 .2 3.4-.8 3.4 1 3.5-.9 1.4 .5 2-.1 3.5 .2 3.5 .1 3.4-.1 3.4 .4 3.5-.1 3.5 .1 3.4-.2 3.4-.3 3.5-.5 3.5 .7 3.4 .4 3.5-.9 3.4 .9 3.4-1.1 3.5 .4 3.5 .4 3.4 0 3.4-.2 3.5-.3 3.4-.1 3.5-.1 3.5 .6 3.4-.7 3.4 .1 3.5 .7 3.5-.3 3.4-.5 3.4 .4 3.5 .6 3.5-.4 3.4-.3 3.5-.2 3.4 .4 0 0 3.5-1.5 3.4-1.1 .8-.1 2.6 .4 3.5 1.9 1.7 .4 1.7 .4 3.5-.4 3.4 .2 3.5-.4 3.5 .8 3.4-.8 3.5 .7 3.4-1 3.4 .7 3.5 .3 3.4-.4 3.5-.4 3.5-.1 3.4 1 3.5 0 3.4-.9 3.5 .2 3.4 .5 3.4 .1 3.5-1 3.4 .6 3.5-.4 3.4-.2 3.5 .8 3.5-.3 3.4-.3 3.5 .7 3.4-.6 3.4 0 3.5 0 3.4-.1 3.5 .8 3.5-.7 3.4 .8 3.5-.3 3.4-.2 3.5 .4 3.4-.6 3.4-.4 3.5 .7 3.4-.7 3.5 1.1 3.4 0 3.5-.7 3.5-.4 3.4 1.1 3.5-.8 3.4 .8 3.4-.6 3.5 .5 3.4 0 3.5-.9 3.5 .2 3.4 .2 3.5-.3 3.4 .9 3.5-.9 3.4 0 3.4 0 3.5-.1 3.4 .8 3.5-.7 3.4 .4 3.5-.5 3.5 .8 3.4 0 3.5 .2 3.4-1.1 3.4 .7 3.5 .1 3.4-.5 3.5 .5 3.5-.5 3.4 .3 3.5 .4 3.4-.1 3.5-.6 3.4 0 3.4 .8 3.5-.9 3.4 .3 3.5-.1 3.4 0 3.5 .2 3.5-.5 3.4 .4 3.5 .2 3.4 .3 3.4-.5 3.5-.3 3.4 .1 3.5-.1 3.5-.1 3.4 .2 3.5 .1 3.4 .7 3.5-.3 3.4 .2 3.4-.5 3.5-.3 1.8 .3 .3 .1 12 0 0 24.8 -1068 0Z" fill="#705F9E" fill-opacity="0.1" stroke="#705F9E" stroke-width="2" stroke-linejoin="round"/></g>
<path d="M1362 366.0H2406 M1362 304.6H2406 M1362 243.2H2406 M1362 181.9H2406 M1362 120.5H2406" stroke="rgba(200,200,200,0.24)" stroke-width="2" fill="none"/>
<path d="M1397.0 120.5V366 M1535.0 120.5V366 M1673.0 120.5V366 M1811.0 120.5V366 M1949.0 120.5V366 M2087.0 120.5V366 M2225.0 120.5V366 M2363.0 120.5V366" stroke="rgba(200,200,200,0.24)" stroke-width="2" fill="none"/>
<rect x="1292.1" y="437.5" width="23.5" height="6.5" rx="2.5" fill="#80B071"/>
<text x="1324.1" y="448" class="lg" textLength="112.4" lengthAdjust="spacingAndGlyphs">ictsc-m4-01</text>
<rect x="1459.5" y="437.5" width="23.5" height="6.5" rx="2.5" fill="#E5B84F"/>
<text x="1491.5" y="448" class="lg" textLength="113" lengthAdjust="spacingAndGlyphs">ictsc-m4-03</text>
<rect x="1626.9" y="437.5" width="23.5" height="6.5" rx="2.5" fill="#7ACFDF"/>
<text x="1658.9" y="448" class="lg" textLength="113" lengthAdjust="spacingAndGlyphs">ictsc-m4-04</text>
<rect x="1794.2" y="437.5" width="23.5" height="6.5" rx="2.5" fill="#E6874A"/>
<text x="1826.2" y="448" class="lg" textLength="113" lengthAdjust="spacingAndGlyphs">ictsc-m4-05</text>
<rect x="1961.4" y="437.5" width="23.5" height="6.5" rx="2.5" fill="#D95E4F"/>
<text x="1993.4" y="448" class="lg" textLength="113" lengthAdjust="spacingAndGlyphs">ictsc-m4-06</text>
<rect x="2128.8" y="437.5" width="23.5" height="6.5" rx="2.5" fill="#3A78BE"/>
<text x="2160.8" y="448" class="lg" textLength="113" lengthAdjust="spacingAndGlyphs">ictsc-m4-07</text>
<rect x="1292.1" y="475.5" width="23.5" height="6.5" rx="2.5" fill="#B24BA6"/>
<text x="1324.1" y="486" class="lg" textLength="106" lengthAdjust="spacingAndGlyphs">ictsc-s7-08</text>
<rect x="1451.7" y="475.5" width="23.5" height="6.5" rx="2.5" fill="#705F9E"/>
<text x="1483.7" y="486" class="lg" textLength="106.5" lengthAdjust="spacingAndGlyphs">ictsc-s7-10</text>
<rect x="24.5" y="528.5" width="795" height="459" rx="5" fill="#141516"/>
<rect x="26" y="530" width="792" height="456" rx="4" fill="#212124"/>
<text x="421.0" y="566" class="ttl" text-anchor="middle" textLength="235.2" lengthAdjust="spacingAndGlyphs">m4-01 Mem &amp; Swap</text>
<path d="M810 972 h4 v10 h-10 v-4 h6 z" fill="#5d5d5d"/>
<text transform="translate(122.7 850.5) scale(.894 1)" class="ax" text-anchor="end">0 B</text>
<text transform="translate(122.7 801.6) scale(.894 1)" class="ax" text-anchor="end">47 GiB</text>
<text transform="translate(122.7 752.7) scale(.894 1)" class="ax" text-anchor="end">93 GiB</text>
<text transform="translate(122.7 703.8) scale(.894 1)" class="ax" text-anchor="end">140 GiB</text>
<text transform="translate(122.7 654.9) scale(.894 1)" class="ax" text-anchor="end">186 GiB</text>
<text transform="translate(122.7 606.0) scale(.894 1)" class="ax" text-anchor="end">233 GiB</text>
<text transform="translate(155.0 877.5) scale(.894 1)" class="ax" text-anchor="middle">06:00</text>
<text transform="translate(407.0 877.5) scale(.894 1)" class="ax" text-anchor="middle">06:30</text>
<text transform="translate(659.0 877.5) scale(.894 1)" class="ax" text-anchor="middle">07:00</text>
<defs><clipPath id="cmem0"><rect x="134" y="581" width="636" height="265.5"/></clipPath></defs><g clip-path="url(#cmem0)"><path d="M134 806.9l14-.1 14 .3 14 .1 14 0 14-.1 14 .4 14 .1 14-.1 14 .1 14-.1 14 0 12 .3 2-.1 14 .1 14-.3 14 .3 14-.3 14-.1 14-.1 14 .4 14-.2 14 .1 14-.2 14-.4 14 .1 14 .1 14-.3 14 .4 14-.3 14 0 11-.7 3-.2 14 .4 14-.3 14 .5 14-.2 14 .1 14-.1 14 .1 14-.1 14 0 14 .5 6-.2 8-.1 14 .3 14-.2 14 .4 14 0 6-.2 0 38.5 -6 0 -14 0 -14 0 -14 0 -14 0 -8 0 -6 0 -14 0 -14 0 -14 0 -14 0 -14 0 -14 0 -14 0 -14 0 -14 0 -14 0 -3 0 -11 0 -14 0 -14 0 -14 0 -14 0 -14 0 -14 0 -14 0 -14 0 -14 0 -14 0 -14 0 -14 0 -12 0 -2 0 -14 0 -14 0 -14 0 -14 0 -2 0 -12 0 -14 0 -14 0 -14 0 -14 0 -14 0 -14 0 -14 0 -14 0 -14 0 -14 0 -14 0Z" fill="#80B071" fill-opacity="0.4"/><path d="M134 806.9l14-.1 14 .3 14 .1 14 0 14-.1 14 .4 14 .1 14-.1 14 .1 14-.1 14 0 12 .3 2-.1 14 .1 14-.3 14 .3 14-.3 14-.1 14-.1 14 .4 14-.2 14 .1 14-.2 14-.4 14 .1 14 .1 14-.3 14 .4 14-.3 14 0 11-.7 3-.2 14 .4 14-.3 14 .5 14-.2 14 .1 14-.1 14 .1 14-.1 14 0 14 .5 6-.2 8-.1 14 .3 14-.2 14 .4 14 0 6-.2" fill="none" stroke="#80B071" stroke-width="2" stroke-linejoin="round" stroke-opacity="1"/><path d="M134 667.8l14-.2 14 .1 14 .1 14 .2 14-.2 14 0 14 .1 14 .3 14-.3 14 .4 14 0 12-.1 2-.2 14 .1 14-.2 14-.2 14 .2 2-.3 12-.2 14-.1 14 .4 14-.3 14-.1 14 0 14 0 14 .2 14-.4 14 0 14 .1 14 0 14-.1 11-1.2 3 .2 14 0 14-.2 14 0 14 .4 14 .1 14-.4 14 .4 14 .1 14-.1 14-.2 6 .2 8 .2 14 0 14-.1 14 .3 14-.2 6 .2 0 140.2 -6 .2 -14 0 -14-.4 -14 .2 -14-.3 -8 .1 -6 .2 -14-.5 -14 0 -14 .1 -14-.1 -14 .1 -14-.1 -14 .2 -14-.5 -14 .3 -14-.4 -3 .2 -11 .7 -14 0 -14 .3 -14-.4 -14 .3 -14-.1 -14-.1 -14 .4 -14 .2 -14-.1 -14 .2 -14-.4 -14 .1 -14 .1 -14 .3 -14-.3 -14 .3 -14-.1 -2 .1 -12-.3 -14 0 -14 .1 -14-.1 -14 .1 -14-.1 -14-.4 -14 .1 -14 0 -14-.1 -14-.3 -14 .1Z" fill="#E5B84F" fill-opacity="0.4"/><path d="M134 667.8l14-.2 14 .1 14 .1 14 .2 14-.2 14 0 14 .1 14 .3 14-.3 14 .4 14 0 12-.1 2-.2 14 .1 14-.2 14-.2 14 .2 2-.3 12-.2 14-.1 14 .4 14-.3 14-.1 14 0 14 0 14 .2 14-.4 14 0 14 .1 14 0 14-.1 11-1.2 3 .2 14 0 14-.2 14 0 14 .4 14 .1 14-.4 14 .4 14 .1 14-.1 14-.2 6 .2 8 .2 14 0 14-.1 14 .3 14-.2 6 .2" fill="none" stroke="#E5B84F" stroke-width="2" stroke-linejoin="round" stroke-opacity="1"/><path d="M134 667.2l14-.2 14 .1 14 .1 14 .2 14-.2 14 0 14 .1 14 .3 14-.3 14 .4 14 0 12-.1 2-.2 14 .1 14-.2 14-.2 14 .2 2-.3 12-.2 14-.1 14 .4 14-.3 14-.1 14 0 14 0 14 .2 14-.4 14 0 14 .1 14 0 14-.1 11-1.2 3 .2 14 0 14-.2 14 0 14 .4 14 .1 14-.4 14 .4 14 .1 14-.1 14-.2 6 .2 8 .2 14 0 14-.1 14 .3 14-.2 6 .2 0 .6 -6-.2 -14 .2 -14-.3 -14 .1 -14 0 -8-.2 -6-.2 -14 .2 -14 .1 -14-.1 -14-.4 -14 .4 -14-.1 -14-.4 -14 0 -14 .2 -14 0 -3-.2 -11 1.2 -14 .1 -14 0 -14-.1 -14 0 -14 .4 -14-.2 -14 0 -14 0 -14 .1 -14 .3 -14-.4 -14 .1 -12 .2 -2 .3 -14-.2 -14 .2 -14 .2 -14-.1 -2 .2 -12 .1 -14 0 -14-.4 -14 .3 -14-.3 -14-.1 -14 0 -14 .2 -14-.2 -14-.1 -14-.1 -14 .2Z" fill="#7ACFDF" fill-opacity="0.4"/><path d="M134 667.2l14-.2 14 .1 14 .1 14 .2 14-.2 14 0 14 .1 14 .3 14-.3 14 .4 14 0 12-.1 2-.2 14 .1 14-.2 14-.2 14 .2 2-.3 12-.2 14-.1 14 .4 14-.3 14-.1 14 0 14 0 14 .2 14-.4 14 0 14 .1 14 0 14-.1 11-1.2 3 .2 14 0 14-.2 14 0 14 .4 14 .1 14-.4 14 .4 14 .1 14-.1 14-.2 6 .2 8 .2 14 0 14-.1 14 .3 14-.2 6 .2" fill="none" stroke="#7ACFDF" stroke-width="2" stroke-linejoin="round" stroke-opacity="1"/><path d="M134 649.3l14 0 14 0 14 0 14 0 14 0 14 0 14 0 14 0 14 0 14 0 14 0 12 0 2 0 14 0 14 0 14 0 14 0 2 0 12 0 14 0 14 0 14 0 14 0 14 0 14 0 14 0 14 0 14 0 14 0 14 0 14 0 11 0 3 0 14 0 14 0 14 0 14 0 14 0 14 0 14 0 14 0 14 0 14 0 6 0 8 0 14 0 14 0 14 0 14 0 6 0 0 16.9 -6-.2 -14 .2 -14-.3 -14 .1 -14 0 -8-.2 -6-.2 -14 .2 -14 .1 -14-.1 -14-.4 -14 .4 -14-.1 -14-.4 -14 0 -14 .2 -14 0 -3-.2 -11 1.2 -14 .1 -14 0 -14-.1 -14 0 -14 .4 -14-.2 -14 0 -14 0 -14 .1 -14 .3 -14-.4 -14 .1 -12 .2 -2 .3 -14-.2 -14 .2 -14 .2 -14-.1 -2 .2 -12 .1 -14 0 -14-.4 -14 .3 -14-.3 -14-.1 -14 0 -14 .2 -14-.2 -14-.1 -14-.1 -14 .2Z" fill="#E6874A" fill-opacity="0.4"/><path d="M134 649.3l14 0 14 0 14 0 14 0 14 0 14 0 14 0 14 0 14 0 14 0 14 0 12 0 2 0 14 0 14 0 14 0 14 0 2 0 12 0 14 0 14 0 14 0 14 0 14 0 14 0 14 0 14 0 14 0 14 0 14 0 14 0 11 0 3 0 14 0 14 0 14 0 14 0 14 0 14 0 14 0 14 0 14 0 14 0 6 0 8 0 14 0 14 0 14 0 14 0 6 0" fill="none" stroke="#E6874A" stroke-width="2" stroke-linejoin="round" stroke-opacity="1"/><path d="M134 648.8l14 0 14 0 14 0 14 0 14 0 14 0 14 0 14 0 14 0 14 0 14 0 12 0 2 0 14 0 14 0 14 0 14 0 2 0 12 0 14 0 14 0 14 0 14 0 14 0 14 0 14 0 14 0 14 0 14 0 14 0 14 0 11 0 3 0 14 0 14 0 14 0 14 0 14 0 14 0 14 0 14 0 14 0 14 0 6 0 8 0 14 0 14 0 14 0 14 0 6 0 0 .5 -6 0 -14 0 -14 0 -14 0 -14 0 -8 0 -6 0 -14 0 -14 0 -14 0 -14 0 -14 0 -14 0 -14 0 -14 0 -14 0 -14 0 -3 0 -11 0 -14 0 -14 0 -14 0 -14 0 -14 0 -14 0 -14 0 -14 0 -14 0 -14 0 -14 0 -14 0 -12 0 -2 0 -14 0 -14 0 -14 0 -14 0 -2 0 -12 0 -14 0 -14 0 -14 0 -14 0 -14 0 -14 0 -14 0 -14 0 -14 0 -14 0 -14 0Z" fill="#D95E4F" fill-opacity="0.4"/><path d="M134 648.8l14 0 14 0 14 0 14 0 14 0 14 0 14 0 14 0 14 0 14 0 14 0 12 0 2 0 14 0 14 0 14 0 14 0 2 0 12 0 14 0 14 0 14 0 14 0 14 0 14 0 14 0 14 0 14 0 14 0 14 0 14 0 11 0 3 0 14 0 14 0 14 0 14 0 14 0 14 0 14 0 14 0 14 0 14 0 6 0 8 0 14 0 14 0 14 0 14 0 6 0" fill="none" stroke="#D95E4F" stroke-width="2" stroke-linejoin="round" stroke-opacity="1"/><path d="M134 639.6l14 0 14 0 14 0 14 0 14 0 14 0 14 0 14 0 14 0 14 0 14 0 12 0 2 0 14 0 14 0 14 0 14 0 2 0 12 0 14 0 14 0 14 0 14 0 14 0 14 0 14 0 14 0 14 0 14 0 14 0 14 0 11 0 3 0 14 0 14 0 14 0 14 0 14 0 14 0 14 0 14 0 14 0 14 0 6 0 8 0 14 0 14 0 14 0 14 0 6 0 0 9.2 -6 0 -14 0 -14 0 -14 0 -14 0 -8 0 -6 0 -14 0 -14 0 -14 0 -14 0 -14 0 -14 0 -14 0 -14 0 -14 0 -14 0 -3 0 -11 0 -14 0 -14 0 -14 0 -14 0 -14 0 -14 0 -14 0 -14 0 -14 0 -14 0 -14 0 -14 0 -12 0 -2 0 -14 0 -14 0 -14 0 -14 0 -2 0 -12 0 -14 0 -14 0 -14 0 -14 0 -14 0 -14 0 -14 0 -14 0 -14 0 -14 0 -14 0Z" fill="#3A78BE" fill-opacity="0.4"/><path d="M134 639.6l14 0 14 0 14 0 14 0 14 0 14 0 14 0 14 0 14 0 14 0 14 0 12 0 2 0 14 0 14 0 14 0 14 0 2 0 12 0 14 0 14 0 14 0 14 0 14 0 14 0 14 0 14 0 14 0 14 0 14 0 14 0 11 0 3 0 14 0 14 0 14 0 14 0 14 0 14 0 14 0 14 0 14 0 14 0 6 0 8 0 14 0 14 0 14 0 14 0 6 0" fill="none" stroke="#3A78BE" stroke-width="2" stroke-linejoin="round" stroke-opacity="1"/></g>
<path d="M134 845.5H770 M134 796.6H770 M134 747.7H770 M134 698.8H770 M134 649.9H770 M134 601.0H770" stroke="rgba(200,200,200,0.24)" stroke-width="2" fill="none"/>
<path d="M155.0 601V845.5 M407.0 601V845.5 M659.0 601V845.5" stroke="rgba(200,200,200,0.24)" stroke-width="2" fill="none"/>
<rect x="66.2" y="917.5" width="23.5" height="6.5" rx="2.5" fill="#80B071"/>
<text x="98.2" y="928" class="lg" textLength="110.8" lengthAdjust="spacingAndGlyphs">Mem_Used</text>
<rect x="227.7" y="917.5" width="23.5" height="6.5" rx="2.5" fill="#E5B84F"/>
<text x="259.7" y="928" class="lg" textLength="134.8" lengthAdjust="spacingAndGlyphs">Mem_Cached</text>
<rect x="414.0" y="917.5" width="23.5" height="6.5" rx="2.5" fill="#7ACFDF"/>
<text x="446.0" y="928" class="lg" textLength="132.2" lengthAdjust="spacingAndGlyphs">Mem_Buffers</text>
<rect x="597.2" y="917.5" width="23.5" height="6.5" rx="2.5" fill="#E6874A"/>
<text x="629.2" y="928" class="lg" textLength="103.5" lengthAdjust="spacingAndGlyphs">Mem_Free</text>
<rect x="66.2" y="955.5" width="23.5" height="6.5" rx="2.5" fill="#D95E4F"/>
<text x="98.2" y="966" class="lg" textLength="150.7" lengthAdjust="spacingAndGlyphs">Swap_Chached</text>
<rect x="268.3" y="955.5" width="23.5" height="6.5" rx="2.5" fill="#3A78BE"/>
<text x="300.3" y="966" class="lg" textLength="107.5" lengthAdjust="spacingAndGlyphs">Swap_Free</text>
<rect x="840.5" y="528.5" width="795" height="459" rx="5" fill="#141516"/>
<rect x="842" y="530" width="792" height="456" rx="4" fill="#212124"/>
<text x="1237.0" y="566" class="ttl" text-anchor="middle" textLength="175.4" lengthAdjust="spacingAndGlyphs">m4-01 Disk I/O</text>
<path d="M1626 972 h4 v10 h-10 v-4 h6 z" fill="#5d5d5d"/>
<text transform="translate(925.6 850.5) scale(.894 1)" class="ax" text-anchor="end">0 B</text>
<text transform="translate(925.6 801.6) scale(.894 1)" class="ax" text-anchor="end">5 MB</text>
<text transform="translate(925.6 752.7) scale(.894 1)" class="ax" text-anchor="end">10 MB</text>
<text transform="translate(925.6 703.8) scale(.894 1)" class="ax" text-anchor="end">15 MB</text>
<text transform="translate(925.6 654.9) scale(.894 1)" class="ax" text-anchor="end">20 MB</text>
<text transform="translate(925.6 606.0) scale(.894 1)" class="ax" text-anchor="end">25 MB</text>
<text transform="translate(959.0 877.5) scale(.894 1)" class="ax" text-anchor="middle">06:00</text>
<text transform="translate(1216.0 877.5) scale(.894 1)" class="ax" text-anchor="middle">06:30</text>
<text transform="translate(1473.0 877.5) scale(.894 1)" class="ax" text-anchor="middle">07:00</text>
<path d="M938 845.5H1586 M938 796.6H1586 M938 747.7H1586 M938 698.8H1586 M938 649.9H1586 M938 601.0H1586" stroke="rgba(200,200,200,0.24)" stroke-width="2" fill="none"/>
<path d="M959.0 601V845.5 M1216.0 601V845.5 M1473.0 601V845.5" stroke="rgba(200,200,200,0.24)" stroke-width="2" fill="none"/>
<defs><clipPath id="cdisk0"><rect x="938" y="581" width="648" height="265.5"/></clipPath></defs><g clip-path="url(#cdisk0)"><path d="M926 845.2l12 0 235.5 .3 2.1-30.7 2.1 30.7 184.8 0 1.7-13.9 1.8 13.9 220-.3 12 0 0 12.3 -672 0Z" fill="#80B071" fill-opacity="0.1" stroke="#80B071" stroke-width="2" stroke-linejoin="round"/><path d="M926 845.2l12 0 648 0 12 0 0 12.3 -672 0Z" fill="#E5B84F" fill-opacity="0.1" stroke="#E5B84F" stroke-width="2" stroke-linejoin="round"/><path d="M926 845.2l12 0 648 0 12 0 0 12.3 -672 0Z" fill="#7ACFDF" fill-opacity="0.1" stroke="#7ACFDF" stroke-width="2" stroke-linejoin="round"/><path d="M926 844.6l12 0 2.1-.5 2.2 .2 2.2 .3 2.1-.1 2.2-.2 2.1-.2 2.1 .1 2.2 0 2.2-.5 2.1 .5 2.1 .2 2.2 .1 2.2-.8 2.1 0 2.1-.2 2.2 .9 2.1 .2 2.2-.2 2.2 .1 2.1 0 2.1-.2 2.2-.1 2.2-.1 2.1 .2 2.2 .1 2.1-.5 2.1 .6 2.2 0 2.2-.7 2.1 .7 2.1-.4 2.2 .5 2.2-.5 2.1-.3 2.1 .7 2.2 0 2.1-.2 2.2-.3 2.2 .4 2.1-.5 2.2 .6 2.1-.7 2.2 .3 2.1-.3 2.2 .8 2.1-.2 2.1-.3 2.2 .1 2.1 .2 2.2-.3 2.2 .2 2.1 .1 2.2-.3 2.1 .3 2.1-.7 2.2 .4 2.1-.4 2.2 .7 2.1 0 2.2 .1 2.2-.7 2.1-.1 2.2 .4 2.1 .1 2.2-.7 2.1 1.1 2.1-.7 2.2 .4 2.1-.5 2.2 .6 2.2 .1 2.1-.7 2.2 .6 2.1-.4 2.1 .6 2.2-.1 2.1-.6 2.2 .7 .3 0 1.8-2.8 2.2-2.3 .4-.1 1.8 2.2 1.8 3 .3-.6 2.2 .6 2.1-.1 2.2-.1 2.1 .2 2.1-.3 2.2 .2 2.1-.6 2.2 .1 2.2 .4 2.1-.1 2.2 .1 2.1-.1 2.1-.1 2.2 0 2.1 0 .8 .4 1.4-26.8 1.1-20.4 1 23.5 1.1 23.8 1.1-28.1 .9-22.3 1.3 22.6 1.4 27.7 .7-.1 2.2 0 2.1-.4 2.2 0 2.1 .3 2.1 .1 2.2-.2 2.1-.1 .6 .4 1.6-80.5 1.1-54.2 1.1 64.8 .5 34 1.6-22.3 .9-12.5 1.3 30 1.6 40.7 .5-.7 2.1 .4 2.2 .2 2.1-.1 2.2 .1 2.1 0 2.2-.9 2.2 .8 2.1 .2 2.2-.9 2.1 .6 2.2 .1 2.1-.1 2.1 .2 2.2 .1 .1 0 2-71.7 1.2-40 1 50.6 1.2 61.1 1-36.3 .3-12.7 1.8-.5 .9 .5 1.3 21.8 1.4 27.2 .7-.7 2.1-.6 2.2 .7 2.1-.5 2.2 .9 2.1 .1 2.2-.3 2.2-.1 2.1 .2 2.2 .3 2.1-.1 2.2-.3 2.1 .4 2.1-.5 2.2 .3 2.1-.1 2.2-.3 2.2 .5 2.1 0 2.2-.6 2.1-.4 2.1 .9 2.2-.5 2.1-.4 2.2 .1 2.1 .3 2.2 .5 2.2 0 2.1 .2 2.2-.1 2.1-.3 2.2 0 2.1 0 2.1-.3 2.2-.2 2.1 .4 2.2 .3 2.2 .1 2.1 0 2.2 0 2.1 0 2.1-.6 2.2-.1 2.1 .5 2.2 .3 2.1-.8 2.2 .4 2.2-.2 2.1 .1 2.2 .2 2.1-.1 2.2 .4 2.1-.1 2.1-.4 2.2 .3 2.1-.5 2.2 .3 2.2-.2 2.1 0 2.2 .5 2.1-.4 2.1 .3 2.2-.4 2.1 .6 0-4.5 2.2-178.5 .5-41.4 1.6 123.2 1 71.6 1.2-13.8 .9-8.3 1.3 19.3 2 32.4 .1-.5 2.2 .3 2.1-.4 2.2-.1 2.1 .3 2.1 .4 2.2-.1 2.1-.4 2.2 .3 2.2 .1 2.1-.9 2.2 .4 2.1-.1 2.1 .6 2.2-.4 2.1 .3 2.2 .1 2.1-.3 2.2-.2 2.2-.3 2.1 .6 2.2-.1 2.1-.1 2.2 .5 2.1-.1 2.1-.3 2.2-.2 2.1 .2 2.2-1 2.2 1 2.1-.5 2.2 .7 2.1-.4 2.1 .5 2.2-.1 2.1 0 2.2 .2 2.1-.6 2.2 .1 2.2 .4 2.1-.3 2.2 .3 2.1 0 2.2 0 2.1-1 2.1 .9 2.2 0 2.1 0 2.2 .2 2.2-.8 2.1 .6 2.2-.1 2.1-.5 2.1 .5 2.2-.3 2.1 .6 2.2-.5 2.1 .3 2.2 0 2.2-.2 2.1 .4 2.2 0 2.1-.5 2.2-.1 2.1 .2 2.1 .2 2.2-.3 2.1 .1 2.2 0 2.2-.1 2.1 .2 2.2 .1 2.1-.5 2.1 .5 2.2 .2 2.1-.4 2.2-.1 2.1-1 2.2 1.2 2.2-.2 .8 .5 1.3-41.8 2.2-68.3 0-1.6 2.1 101.1 .2 10.6 2-86.2 .2-10.9 1.9 68.2 .8 28.9 1.3-.2 2.2-.1 2.1 .1 2.2 .2 2.2-.3 2.1-.6 2.2 .2 2.1 0 2.1 .4 2.2 0 2.1 .2 2.2-.1 2.1-.4 2.2 .5 2.2-.1 .8 .2 12 0 0 12.9 -672 0Z" fill="#E6874A" fill-opacity="0.1" stroke="#E6874A" stroke-width="2" stroke-linejoin="round"/><path d="M926 845.2l12 0 236 .3 1.6-2.5 1.4 2.5 409-.3 12 0 0 12.3 -672 0Z" fill="#D95E4F" fill-opacity="0.1" stroke="#D95E4F" stroke-width="2" stroke-linejoin="round"/><path d="M926 845.2l12 0 236 .3 1.6-6.5 1.9 6.5 185.5 0 1.2-4.5 1.3 4.5 220.5-.3 12 0 0 12.3 -672 0Z" fill="#3A78BE" fill-opacity="0.1" stroke="#3A78BE" stroke-width="2" stroke-linejoin="round"/></g>
<rect x="882.4" y="917.5" width="23.5" height="6.5" rx="2.5" fill="#80B071"/>
<text x="914.4" y="928" class="lg" textLength="107.2" lengthAdjust="spacingAndGlyphs">Read (fioa)</text>
<rect x="1041.3" y="917.5" width="23.5" height="6.5" rx="2.5" fill="#E5B84F"/>
<text x="1073.3" y="928" class="lg" textLength="119.7" lengthAdjust="spacingAndGlyphs">Read (fioa1)</text>
<rect x="1212.7" y="917.5" width="23.5" height="6.5" rx="2.5" fill="#7ACFDF"/>
<text x="1244.7" y="928" class="lg" textLength="106.1" lengthAdjust="spacingAndGlyphs">Read (sda)</text>
<rect x="1370.5" y="917.5" width="23.5" height="6.5" rx="2.5" fill="#E6874A"/>
<text x="1402.5" y="928" class="lg" textLength="107.9" lengthAdjust="spacingAndGlyphs">Write (fioa)</text>
<rect x="882.4" y="955.5" width="23.5" height="6.5" rx="2.5" fill="#D95E4F"/>
<text x="914.4" y="966" class="lg" textLength="120.8" lengthAdjust="spacingAndGlyphs">Write (fioa1)</text>
<rect x="1054.9" y="955.5" width="23.5" height="6.5" rx="2.5" fill="#3A78BE"/>
<text x="1086.9" y="966" class="lg" textLength="107.2" lengthAdjust="spacingAndGlyphs">Write (sda)</text>
<rect x="1658.5" y="528.5" width="795" height="459" rx="5" fill="#141516"/>
<rect x="1660" y="530" width="792" height="456" rx="4" fill="#212124"/>
<text x="2055.0" y="566" class="ttl" text-anchor="middle" textLength="222.3" lengthAdjust="spacingAndGlyphs">m4-01 Network I/O</text>
<path d="M2444 972 h4 v10 h-10 v-4 h6 z" fill="#5d5d5d"/>
<text transform="translate(1747 890.0) scale(.894 1)" class="ax" text-anchor="end">0</text>
<text transform="translate(1747 795.3) scale(.894 1)" class="ax" text-anchor="end">500 K</text>
<text transform="translate(1747 700.7) scale(.894 1)" class="ax" text-anchor="end">1.0 Mil</text>
<text transform="translate(1747 606.0) scale(.894 1)" class="ax" text-anchor="end">1.5 Mil</text>
<text transform="translate(1779.0 917.0) scale(.894 1)" class="ax" text-anchor="middle">06:00</text>
<text transform="translate(2035.0 917.0) scale(.894 1)" class="ax" text-anchor="middle">06:30</text>
<text transform="translate(2291.0 917.0) scale(.894 1)" class="ax" text-anchor="middle">07:00</text>
<defs><clipPath id="cnet0"><rect x="1758" y="581" width="646" height="305"/></clipPath></defs><g clip-path="url(#cnet0)"><path d="M1746 877.1l12 0 2.2-.3 2.1 .4 2.2 .2 2.1-.4 2.2 .1 2.1-.1 2.1 .3 2.2-.1 2.1 0 2.2 .2 2.2-.2 2.1-.2 2.2 0 2.1 .2 2.1 0 2.2-.3 2.1 .4 2.2-.2 2.1 .2 2.2-.5 2.2 .2 2.1-.2 2.2 .2 2.1-.1 2.2 .1 2.1-.1 2.1 .4 2.2-.1 2.1-.2 2.2 .1 2.2-.2 2.1 .5 2.2 0 2.1-.3 2.1-.2 2.2 .5 2.1-.5 2.2-.1 2.1 .2 2.2 0 2.2 .3 2.1-.4 2.2-.1 2.1 .3 2.2-.3 2.1 .4 2.1-.1 2.2 .3 2.1 0 2.2-.5 2.2 .4 2.1-.2 2.2 .3 2.1-.6 2.1 .3 2.2 .3 2.1-.6 2.2 .2 2.1 0 2.2 0 2.2 .4 2.1-.5 2.2 .4 2.1-.4 2.2 .5 2.1-.5 2.1-.1 2.2 .6 2.1-.6 2.2 .4 2.2-.3 2.1 .3 2.2-.2 2.1 .2 2.1 0 2.2 .1 2.1-.5 2.2 .5 2.1-.4 2.2 .3 2.2 .1 2.1 0 2.2-.2 2.1 0 2.2-.2 2.1 .5 2.1-.2 2.2 .1 2.1 .1 2.2-.2 2.2-.2 2.1 .1 2.2-.2 2.1 0 2.1 .5 2.2-.2 .2-.1 1.9-11 .5-2.3 1.7 9.4 .7 3.9 1.4-.1 2.2 .3 2.2 0 2.1-.3 2.2-.2 2.1 .1 2.2 .2 2.1-.1 2.1-.2 2.2 .5 2.1-.1 2.2-.2 2.2-.2 2.1 .2 2.2 .2 2.1-.4 2.1 0 2.2 0 2.1 0 2.2 .4 2.1 0 2.2 0 2.2-.2 2.1 0 2.2-.2 2.1 .5 2.2-.2 2.1-.2 2.1-.1 1.8 .3 .4-1.8 2-8.3 .1 .6 2.2 9.2 .1 .3 2.1-.3 2.1 .5 2.2-.4 2.1 0 2.1 .3 2.2-.3 2.2 .5 2.1-.2 2.1 .1 2.2-.2 2.2 .3 2.1-.1 2.1-.2 2.2-.3 2.2 .4 2.1 .2 2.2-.5 2.1 .3 2.1-.4 2.2 .5 2.2-.2 2.1 0 2.1 .1 2.2-.1 2.1 .1 2.2 0 2.2-.2 2.1 .4 2.1-.6 2.2 .5 2.2-.3 2.1-.2 2.1 .1 2.2 .2 2.2-.3 2.1 .4 2.2 .2 2.1-.1 2.1-.2 2.2 .1 2.2-.1 2.1 .2 2.1-.1 2.2-.1 2.1 .2 2.2-.1 2.2-.4 2.1 .1 2.1 .1 2.2 0 2.2 .2 2.1-.1 2.1 .1 2.2 .1 2.2 .1 2.1-.3 2.2-.2 2.1 .5 2.1-.4 2.2 .3 2.2-.4 2.1 .1 2.1 .2 2.2 .2 2.1 0 2.2 0 2.2-.3 .8 0 1.3-1.5 1.1-1.6 1 1.5 1.4 1.6 .8 0 2.2 .2 2.1-.3 2.1 .1 2.2-.1 2.2-.2 2.1 .6 2.2-.3 2.1 0 2.1 .1 2.2-.3 2.2-.1 2.1 .4 2.1-.3 2.2 0 2.1 .2 2.2-.1 2.2 .4 2.1-.3 2.1 .3 2.2-.1 2.2-.1 2.1 0 2.1-.3 2.2 .5 2.2-.5 2.1 .4 2.2 .1 2.1 0 2.1 0 2.2-.1 2.2-.2 2.1 .2 2.1-.1 2.2 0 2.1-.1 2.2 .1 2.2 .1 2.1-.5 2.1 .4 2.2 .2 2.2-.6 2.1 .6 2.1 0 2.2-.3 2.2 .1 2.1-.2 2.2-.1 2.1 .1 2.1 .4 2.2-.6 2.2 .3 2.1-.2 2.1 .3 2.2 .2 2.1-.2 2.2-.3 2.2 .5 2.1-.4 2.1 .3 2.2 .1 2.2-.4 2.1-.1 2.1 .5 2.2 0 2.2-.5 2.1 .5 2.2-.1 2.1-.4 2.1-.1 2.2 .4 2.2-.2 2.1-.1 2.1-.1 2.2 .2 2.1-.2 2.2 0 2.2 .1 2.1 .2 2.1 .1 2.2-.2 1.9 .1 .3-1.3 2.1-9.4 2.1 9.6 .3 1.1 1.9 .1 2.2-.2 2.1 .1 2.2 .1 2.1 .2 2.1-.6 2.2 .5 2.2 0 2.1-.3 2.1 .2 2.2 .2 2.1-.1 2.2 0 2.2-.5 2.1 .1 2.1 0 2.2 .5 1-.3 12 0 0 19.9 -670 0Z" fill="#80B071" fill-opacity="0.1" stroke="#80B071" stroke-width="2" stroke-linejoin="round"/><path d="M1746 628.8l12 0 2.2-1.6 2.1 1.3 2.2-.1 2.1 .4 2.2-.3 2.1 .2 2.1-.4 2.2 .3 2.1-3.8 2.2 3.8 2.2-7.9 2.1 7.9 2.2-8.4 2.1 1.7 2.1-.1 2.2 1.8 2.1 .3 2.2-2.9 2.1-6 2.2-7 2.2 2.5 2.1 12.8 2.2 5.4 2.1-1.1 2.2-.4 2.1-1.9 2.1-7 2.2-2 2.1 5.8 2.2-6.7 2.2 .8 2.1 4.4 2.2 1.8 2.1 6.3 2.1-8.3 2.2-3 2.1 5 2.2 .8 2.1-5.7 2.2-.3 2.2 1.8 2.1 4.7 2.2 4.6 2.1 .2 2.2-2.1 2.1-2.7 2.1-6.1 2.2 1 2.1 7.8 2.2-3.7 2.2 4.9 2.1 .6 2.2-7.6 2.1 5.3 2.1 2.9 2.2-.2 2.1 0 2.2-.2 2.1-.4 2.2 .7 2.2-.6 2.1 .3 2.2 .4 2.1-.7 2.2-2.4 2.1-2.2 2.1 .2 2.2-4.1 2.1 1 2.2 7.3 2.2-.1 2.1 .6 2.2-.3 2.1 .2 2.1-.1 2.2 0 2.1-.2 2.2 .7 2.1-.3 2.2 .4 2.2 0 2.1-1 2.2-.4 2.1-6.7 2.2-1 2.1-2.3 2.1 5.8 2.2-1.2 2.1-2 2.2 2.3 2.2 2.7 2.1-.3 2.2-3 2.1-.8 2.1 4.5 2.2 1.4 2.1 .7 2.2 1 2.1-.3 2.2 .4 2.2-1.8 2.1-5 2.2-2.8 2.1 3.9 2.2 5.5 2.1-.6 2.1 .5 2.2-.4 .3 .9 1.8-8 .1 0 2.1 39.6 .1 3.1 2.1-24.3 .8-9.2 1.3-16.7 .3 2.1 1.9 9.3 0 4.1 2.1-2.5 2.1 1.4 2.2 .9 2.1-.2 2.2 .3 2.1-.3 2.2 .1 2.2-2.1 2.1-2.2 2.2 3.5 2.1 .5 2.2 .3 2.1-3.4 2.1-.1 2.2-1.9 2.1 .5 2.2-7 2.2 5.5 2.1 3.4 2.2-5.7 2.1-4 2.1 4 2.2-3.4 2.2 1.7 2.1 5 2.1 .2 2.2-.9 2.2 5.3 2.1-3.9 2.1-3 2.2 7.3 2.2-4.6 2.1 1.4 2.2 3.3 2.1-3.1 2.1-6.1 2.2 5.6 2.2-.2 2.1 2.2 2.1 2.1 2.2-1 2.1-5.5 2.2 3.2 2.2-3.8 2.1-1.2 2.1 7.5 2.2-2.8 2.2 .7 2.1 2.3 2.1-3 2.2 2.6 2.2 .8 2.1 .1 2.2 0 2.1-.7 2.1 .6 2.2-.4 2.2 .6 2.1-.1 2.1 0 2.2-.1 2.1 .1 2.2-.4 2.2-.1 2.1 .4 2.1 .1 2.2 0 2.2-8.6 2.1 8.2 2.1-.1 2.2-.3 2.2 .2 2.1-.1 2.2 .2 2.1 .3 2.1 .1 2.2 0 2.2-.7 2.1 .3 2.1 .1 2.2 0 1.9 .6 .2-8 2.2-10.3 .1 11.5 2.1 18.2 1.4 47.3 .7-29.9 1.3-22.6 .8-22.9 1.2 16.7 1-19.4 2.2 4.3 2.1 3.6 2.1 11.2 2.2-.9 2.2-1 2.1-6.5 2.2-3.2 2.1-4 2.1-.9 2.2 1.8 2.2 2.9 2.1 8.9 2.1 2.4 2.2-2.1 2.1-1.2 2.2-11.5 2.2 3.1 2.1 .3 2.1-.2 2.2 12.1 2.2-3 2.1 2.5 2.1 .6 2.2-2.3 2.2-4.4 2.1 5.7 2.2-1.7 2.1 .1 2.1 1.7 2.2-2.7 2.2-2.4 2.1 3.8 2.1-.4 2.2 2.6 2.1-.8 2.2 .9 2.2 .1 2.1 0 2.1-2 2.2-11.8 2.2-.3 2.1 4.3 2.1 .5 2.2 3.8 2.2 .3 2.1-1.5 2.2 .4 2.1-3.1 2.1 4.7 2.2 1.5 2.2 2.7 2.1 .4 2.1-4.3 2.2 2.6 2.1-3.1 2.2-5.4 2.2-4.5 2.1-3.3 2.1 11.3 2.2 1 2.2-.9 2.1 5.7 2.1-8.2 2.2 8.3 2.2-5.2 2.1 2.4 2.2 3.4 2.1-1 2.1 1.2 2.2-.4 2.2 .5 2.1-.2 2.1 0 2.2-.3 2.1 .1 2.2-1.6 2.2 1.4 2.1 .4 2.1-1.1 2.2 1 2.2 .1 2.1-.7 2.1 .7 2.2-.3 2.2-.8 2.1 .4 2.2 .7 2.1-.6 2.1 .4 2.2-4.2 2.2 .2 2.1 2.2 2.1-8.1 2.2 0 2.1 3.7 2.2-.1 2.2-1.4 2.1-1.3 2.1 1.2 2.2-7 1 15.2 12 0 0 268.2 -670 0Z" fill="#E5B84F" fill-opacity="0.1" stroke="#E5B84F" stroke-width="2" stroke-linejoin="round"/></g>
<path d="M1758 885.0H2404 M1758 790.3H2404 M1758 695.7H2404 M1758 601.0H2404" stroke="rgba(200,200,200,0.24)" stroke-width="2" fill="none"/>
<path d="M1779.0 601V885 M2035.0 601V885 M2291.0 601V885" stroke="rgba(200,200,200,0.24)" stroke-width="2" fill="none"/>
<rect x="1700.0" y="955.5" width="23.5" height="6.5" rx="2.5" fill="#80B071"/>
<text x="1732.0" y="966" class="lg" textLength="138.1" lengthAdjust="spacingAndGlyphs">Rx (enp7s0f0)</text>
<rect x="1889.2" y="955.5" width="23.5" height="6.5" rx="2.5" fill="#E5B84F"/>
<text x="1921.2" y="966" class="lg" textLength="136.8" lengthAdjust="spacingAndGlyphs">Tx (enp7s0f0)</text>
<rect x="24.5" y="1008.5" width="795" height="459" rx="5" fill="#141516"/>
<rect x="26" y="1010" width="792" height="456" rx="4" fill="#212124"/>
<text x="421.0" y="1046" class="ttl" text-anchor="middle" textLength="235.2" lengthAdjust="spacingAndGlyphs">m4-03 Mem &amp; Swap</text>
<path d="M810 1452 h4 v10 h-10 v-4 h6 z" fill="#5d5d5d"/>
<text transform="translate(122.7 1330.5) scale(.894 1)" class="ax" text-anchor="end">0 B</text>
<text transform="translate(122.7 1281.6) scale(.894 1)" class="ax" text-anchor="end">47 GiB</text>
<text transform="translate(122.7 1232.7) scale(.894 1)" class="ax" text-anchor="end">93 GiB</text>
<text transform="translate(122.7 1183.8) scale(.894 1)" class="ax" text-anchor="end">140 GiB</text>
<text transform="translate(122.7 1134.9) scale(.894 1)" class="ax" text-anchor="end">186 GiB</text>
<text transform="translate(122.7 1086.0) scale(.894 1)" class="ax" text-anchor="end">233 GiB</text>
<text transform="translate(155.0 1357.5) scale(.894 1)" class="ax" text-anchor="middle">06:00</text>
<text transform="translate(407.0 1357.5) scale(.894 1)" class="ax" text-anchor="middle">06:30</text>
<text transform="translate(659.0 1357.5) scale(.894 1)" class="ax" text-anchor="middle">07:00</text>
<defs><clipPath id="cmem1"><rect x="134" y="1061" width="636" height="265.5"/></clipPath></defs><g clip-path="url(#cmem1)"><path d="M134 1277.1l14 .2 14-.4 14 0 14 .5 14-.4 14 0 14 .3 14-.2 14 .3 14-.3 14 .4 14-.3 14 .1 14 .2 14-.1 14 .1 6-.2 6-1.1 2 .1 14-.3 14 .4 14-.2 14-.1 14-.1 14 .4 14-.2 14 .2 14-.1 14 .1 14-.2 14 .1 6-.1 6-.3 2 .1 14-.2 14 .3 14-.3 14 .2 14 .1 14-.1 14-.3 14 .4 14-.1 14-.3 14 0 14 .2 14-.2 14 .4 14-.2 6 0 0 49.6 -6 0 -14 0 -14 0 -14 0 -14 0 -14 0 -14 0 -14 0 -14 0 -14 0 -14 0 -14 0 -14 0 -14 0 -14 0 -14 0 -2 0 -6 0 -6 0 -14 0 -14 0 -14 0 -14 0 -14 0 -14 0 -14 0 -14 0 -14 0 -14 0 -14 0 -14 0 -2 0 -6 0 -6 0 -14 0 -14 0 -14 0 -14 0 -14 0 -14 0 -14 0 -14 0 -14 0 -14 0 -14 0 -14 0 -14 0 -14 0 -14 0 -14 0Z" fill="#80B071" fill-opacity="0.4"/><path d="M134 1277.1l14 .2 14-.4 14 0 14 .5 14-.4 14 0 14 .3 14-.2 14 .3 14-.3 14 .4 14-.3 14 .1 14 .2 14-.1 14 .1 6-.2 6-1.1 2 .1 14-.3 14 .4 14-.2 14-.1 14-.1 14 .4 14-.2 14 .2 14-.1 14 .1 14-.2 14 .1 6-.1 6-.3 2 .1 14-.2 14 .3 14-.3 14 .2 14 .1 14-.1 14-.3 14 .4 14-.1 14-.3 14 0 14 .2 14-.2 14 .4 14-.2 6 0" fill="none" stroke="#80B071" stroke-width="2" stroke-linejoin="round" stroke-opacity="1"/><path d="M134 1142.6l14-.2 14 .1 14 0 14 .3 14-.2 14 .1 14-.3 14 .2 14 .2 14-.2 14 .2 14 0 14-.3 14-.1 14 .3 14-.3 6 .2 6-1.2 2-.2 14 .3 14 .1 14 0 14 0 14-.3 14-.1 14 0 14 .4 14-.4 14 0 14 0 14 0 6 .2 6-.7 2-.2 14 .1 14-.1 14 .1 14 .3 14-.4 14 .4 14-.1 14-.1 14 0 14 .1 14-.1 14-.1 14 0 14 0 14 .1 6 0 0 135.2 -6 0 -14 .2 -14-.4 -14 .2 -14-.2 -14 0 -14 .3 -14 .1 -14-.4 -14 .3 -14 .1 -14-.1 -14-.2 -14 .3 -14-.3 -14 .2 -2-.1 -6 .3 -6 .1 -14-.1 -14 .2 -14-.1 -14 .1 -14-.2 -14 .2 -14-.4 -14 .1 -14 .1 -14 .2 -14-.4 -14 .3 -2-.1 -6 1.1 -6 .2 -14-.1 -14 .1 -14-.2 -14-.1 -14 .3 -14-.4 -14 .3 -14-.3 -14 .2 -14-.3 -14 0 -14 .4 -14-.5 -14 0 -14 .4 -14-.2Z" fill="#E5B84F" fill-opacity="0.4"/><path d="M134 1142.6l14-.2 14 .1 14 0 14 .3 14-.2 14 .1 14-.3 14 .2 14 .2 14-.2 14 .2 14 0 14-.3 14-.1 14 .3 14-.3 6 .2 6-1.2 2-.2 14 .3 14 .1 14 0 14 0 14-.3 14-.1 14 0 14 .4 14-.4 14 0 14 0 14 0 6 .2 6-.7 2-.2 14 .1 14-.1 14 .1 14 .3 14-.4 14 .4 14-.1 14-.1 14 0 14 .1 14-.1 14-.1 14 0 14 0 14 .1 6 0" fill="none" stroke="#E5B84F" stroke-width="2" stroke-linejoin="round" stroke-opacity="1"/><path d="M134 1142l14-.2 14 .1 14 0 14 .3 14-.2 14 .1 14-.3 14 .2 14 .2 14-.2 14 .2 14 0 14-.3 14-.1 14 .3 14-.3 6 .2 6-1.2 2-.2 14 .3 14 .1 14 0 14 0 14-.3 14-.1 14 0 14 .4 14-.4 14 0 14 0 14 0 6 .2 6-.7 2-.2 14 .1 14-.1 14 .1 14 .3 14-.4 14 .4 14-.1 14-.1 14 0 14 .1 14-.1 14-.1 14 0 14 0 14 .1 6 0 0 .6 -6 0 -14-.1 -14 0 -14 0 -14 .1 -14 .1 -14-.1 -14 0 -14 .1 -14 .1 -14-.4 -14 .4 -14-.3 -14-.1 -14 .1 -14-.1 -2 .2 -6 .7 -6-.2 -14 0 -14 0 -14 0 -14 .4 -14-.4 -14 0 -14 .1 -14 .3 -14 0 -14 0 -14-.1 -14-.3 -2 .2 -6 1.2 -6-.2 -14 .3 -14-.3 -14 .1 -14 .3 -14 0 -14-.2 -14 .2 -14-.2 -14-.2 -14 .3 -14-.1 -14 .2 -14-.3 -14 0 -14-.1 -14 .2Z" fill="#7ACFDF" fill-opacity="0.4"/><path d="M134 1142l14-.2 14 .1 14 0 14 .3 14-.2 14 .1 14-.3 14 .2 14 .2 14-.2 14 .2 14 0 14-.3 14-.1 14 .3 14-.3 6 .2 6-1.2 2-.2 14 .3 14 .1 14 0 14 0 14-.3 14-.1 14 0 14 .4 14-.4 14 0 14 0 14 0 6 .2 6-.7 2-.2 14 .1 14-.1 14 .1 14 .3 14-.4 14 .4 14-.1 14-.1 14 0 14 .1 14-.1 14-.1 14 0 14 0 14 .1 6 0" fill="none" stroke="#7ACFDF" stroke-width="2" stroke-linejoin="round" stroke-opacity="1"/><path d="M134 1129l14 0 14 0 14 0 14 0 14 0 14 0 14 0 14 0 14 0 14 0 14 0 14 0 14 0 14 0 14 0 14 0 6 0 6 0 2 0 14 0 14 0 14 0 14 0 14 0 14 0 14 0 14 0 14 0 14 0 14 0 14 0 6 0 6 0 2 0 14 0 14 0 14 0 14 0 14 0 14 0 14 0 14 0 14 0 14 0 14 0 14 0 14 0 14 0 14 0 6 0 0 11.1 -6 0 -14-.1 -14 0 -14 0 -14 .1 -14 .1 -14-.1 -14 0 -14 .1 -14 .1 -14-.4 -14 .4 -14-.3 -14-.1 -14 .1 -14-.1 -2 .2 -6 .7 -6-.2 -14 0 -14 0 -14 0 -14 .4 -14-.4 -14 0 -14 .1 -14 .3 -14 0 -14 0 -14-.1 -14-.3 -2 .2 -6 1.2 -6-.2 -14 .3 -14-.3 -14 .1 -14 .3 -14 0 -14-.2 -14 .2 -14-.2 -14-.2 -14 .3 -14-.1 -14 .2 -14-.3 -14 0 -14-.1 -14 .2Z" fill="#E6874A" fill-opacity="0.4"/><path d="M134 1129l14 0 14 0 14 0 14 0 14 0 14 0 14 0 14 0 14 0 14 0 14 0 14 0 14 0 14 0 14 0 14 0 6 0 6 0 2 0 14 0 14 0 14 0 14 0 14 0 14 0 14 0 14 0 14 0 14 0 14 0 14 0 6 0 6 0 2 0 14 0 14 0 14 0 14 0 14 0 14 0 14 0 14 0 14 0 14 0 14 0 14 0 14 0 14 0 14 0 6 0" fill="none" stroke="#E6874A" stroke-width="2" stroke-linejoin="round" stroke-opacity="1"/><path d="M134 1128.5l14 0 14 0 14 0 14 0 14 0 14 0 14 0 14 0 14 0 14 0 14 0 14 0 14 0 14 0 14 0 14 0 6 0 6 0 2 0 14 0 14 0 14 0 14 0 14 0 14 0 14 0 14 0 14 0 14 0 14 0 14 0 6 0 6 0 2 0 14 0 14 0 14 0 14 0 14 0 14 0 14 0 14 0 14 0 14 0 14 0 14 0 14 0 14 0 14 0 6 0 0 .5 -6 0 -14 0 -14 0 -14 0 -14 0 -14 0 -14 0 -14 0 -14 0 -14 0 -14 0 -14 0 -14 0 -14 0 -14 0 -14 0 -2 0 -6 0 -6 0 -14 0 -14 0 -14 0 -14 0 -14 0 -14 0 -14 0 -14 0 -14 0 -14 0 -14 0 -14 0 -2 0 -6 0 -6 0 -14 0 -14 0 -14 0 -14 0 -14 0 -14 0 -14 0 -14 0 -14 0 -14 0 -14 0 -14 0 -14 0 -14 0 -14 0 -14 0Z" fill="#D95E4F" fill-opacity="0.4"/><path d="M134 1128.5l14 0 14 0 14 0 14 0 14 0 14 0 14 0 14 0 14 0 14 0 14 0 14 0 14 0 14 0 14 0 14 0 6 0 6 0 2 0 14 0 14 0 14 0 14 0 14 0 14 0 14 0 14 0 14 0 14 0 14 0 14 0 6 0 6 0 2 0 14 0 14 0 14 0 14 0 14 0 14 0 14 0 14 0 14 0 14 0 14 0 14 0 14 0 14 0 14 0 6 0" fill="none" stroke="#D95E4F" stroke-width="2" stroke-linejoin="round" stroke-opacity="1"/><path d="M134 1119.6l14 0 14 0 14 0 14 0 14 0 14 0 14 0 14 0 14 0 14 0 14 0 14 0 14 0 14 0 14 0 14 0 6 0 6 0 2 0 14 0 14 0 14 0 14 0 14 0 14 0 14 0 14 0 14 0 14 0 14 0 14 0 6 0 6 0 2 0 14 0 14 0 14 0 14 0 14 0 14 0 14 0 14 0 14 0 14 0 14 0 14 0 14 0 14 0 14 0 6 0 0 8.9 -6 0 -14 0 -14 0 -14 0 -14 0 -14 0 -14 0 -14 0 -14 0 -14 0 -14 0 -14 0 -14 0 -14 0 -14 0 -14 0 -2 0 -6 0 -6 0 -14 0 -14 0 -14 0 -14 0 -14 0 -14 0 -14 0 -14 0 -14 0 -14 0 -14 0 -14 0 -2 0 -6 0 -6 0 -14 0 -14 0 -14 0 -14 0 -14 0 -14 0 -14 0 -14 0 -14 0 -14 0 -14 0 -14 0 -14 0 -14 0 -14 0 -14 0Z" fill="#3A78BE" fill-opacity="0.4"/><path d="M134 1119.6l14 0 14 0 14 0 14 0 14 0 14 0 14 0 14 0 14 0 14 0 14 0 14 0 14 0 14 0 14 0 14 0 6 0 6 0 2 0 14 0 14 0 14 0 14 0 14 0 14 0 14 0 14 0 14 0 14 0 14 0 14 0 6 0 6 0 2 0 14 0 14 0 14 0 14 0 14 0 14 0 14 0 14 0 14 0 14 0 14 0 14 0 14 0 14 0 14 0 6 0" fill="none" stroke="#3A78BE" stroke-width="2" stroke-linejoin="round" stroke-opacity="1"/></g>
<path d="M134 1325.5H770 M134 1276.6H770 M134 1227.7H770 M134 1178.8H770 M134 1129.9H770 M134 1081.0H770" stroke="rgba(200,200,200,0.24)" stroke-width="2" fill="none"/>
<path d="M155.0 1081V1325.5 M407.0 1081V1325.5 M659.0 1081V1325.5" stroke="rgba(200,200,200,0.24)" stroke-width="2" fill="none"/>
<rect x="66.2" y="1397.5" width="23.5" height="6.5" rx="2.5" fill="#80B071"/>
<text x="98.2" y="1408" class="lg" textLength="110.8" lengthAdjust="spacingAndGlyphs">Mem_Used</text>
<rect x="227.7" y="1397.5" width="23.5" height="6.5" rx="2.5" fill="#E5B84F"/>
<text x="259.7" y="1408" class="lg" textLength="134.8" lengthAdjust="spacingAndGlyphs">Mem_Cached</text>
<rect x="414.0" y="1397.5" width="23.5" height="6.5" rx="2.5" fill="#7ACFDF"/>
<text x="446.0" y="1408" class="lg" textLength="132.2" lengthAdjust="spacingAndGlyphs">Mem_Buffers</text>
<rect x="597.2" y="1397.5" width="23.5" height="6.5" rx="2.5" fill="#E6874A"/>
<text x="629.2" y="1408" class="lg" textLength="103.5" lengthAdjust="spacingAndGlyphs">Mem_Free</text>
<rect x="66.2" y="1435.5" width="23.5" height="6.5" rx="2.5" fill="#D95E4F"/>
<text x="98.2" y="1446" class="lg" textLength="150.7" lengthAdjust="spacingAndGlyphs">Swap_Chached</text>
<rect x="268.3" y="1435.5" width="23.5" height="6.5" rx="2.5" fill="#3A78BE"/>
<text x="300.3" y="1446" class="lg" textLength="107.5" lengthAdjust="spacingAndGlyphs">Swap_Free</text>
<rect x="840.5" y="1008.5" width="795" height="459" rx="5" fill="#141516"/>
<rect x="842" y="1010" width="792" height="456" rx="4" fill="#212124"/>
<text x="1237.0" y="1046" class="ttl" text-anchor="middle" textLength="175.4" lengthAdjust="spacingAndGlyphs">m4-03 Disk I/O</text>
<path d="M1626 1452 h4 v10 h-10 v-4 h6 z" fill="#5d5d5d"/>
<text transform="translate(925.6 1330.5) scale(.894 1)" class="ax" text-anchor="end">0 B</text>
<text transform="translate(925.6 1249.0) scale(.894 1)" class="ax" text-anchor="end">10 MB</text>
<text transform="translate(925.6 1167.5) scale(.894 1)" class="ax" text-anchor="end">20 MB</text>
<text transform="translate(925.6 1086.0) scale(.894 1)" class="ax" text-anchor="end">30 MB</text>
<text transform="translate(959.0 1357.5) scale(.894 1)" class="ax" text-anchor="middle">06:00</text>
<text transform="translate(1216.0 1357.5) scale(.894 1)" class="ax" text-anchor="middle">06:30</text>
<text transform="translate(1473.0 1357.5) scale(.894 1)" class="ax" text-anchor="middle">07:00</text>
<path d="M938 1325.5H1586 M938 1244.0H1586 M938 1162.5H1586 M938 1081.0H1586" stroke="rgba(200,200,200,0.24)" stroke-width="2" fill="none"/>
<path d="M959.0 1081V1325.5 M1216.0 1081V1325.5 M1473.0 1081V1325.5" stroke="rgba(200,200,200,0.24)" stroke-width="2" fill="none"/>
<defs><clipPath id="cdisk1"><rect x="938" y="1061" width="648" height="265.5"/></clipPath></defs><g clip-path="url(#cdisk1)"><path d="M926 1325.2l12 0 236 .3 2-76.5 2 76.5 184.5 0 1.6-28.9 1.9 28.9 56.5 0 1.4-18.5 1.6 18.5 160.5-.3 12 0 0 12.3 -672 0Z" fill="#80B071" fill-opacity="0.1" stroke="#80B071" stroke-width="2" stroke-linejoin="round"/><path d="M926 1325.2l12 0 648 0 12 0 0 12.3 -672 0Z" fill="#E5B84F" fill-opacity="0.1" stroke="#E5B84F" stroke-width="2" stroke-linejoin="round"/><path d="M926 1325.2l12 0 236.5 .3 1.5-23.5 1.5 23.5 408.5-.3 12 0 0 12.3 -672 0Z" fill="#7ACFDF" fill-opacity="0.1" stroke="#7ACFDF" stroke-width="2" stroke-linejoin="round"/><path d="M926 1319.1l12 0 2.1-.3 2.2 .1 2.2-.4 2.1 .5 2.2-.9 2.1 .1 2.1-.8 2.2 1.1 2.2-.1 2.1 .5 2.1-1.3 2.2-.4 2.2 .7 2.1 .7 2.1 .5 2.2-.4 2.1 .4 2.2-.3 2.2 .1 2.1-.4 2.1 .5 2.2-.7 2.2 .7 2.1-.4 2.2 0 2.1 .1 2.1-.6 2.2 .5 2.2 .5 2.1-.2 2.1 .1 2.2-.6 2.2 .1 2.1 .6 2.1-.2 2.2-.8 2.1 .5 2.2 .1 2.2-.1 2.1 0 2.2-.1 2.1 .2 2.2 0 2.1-.3 2.2 .5 2.1-.9 2.1 .1 2.2 .5 2.1 .2 2.2 .2 2.2-.3 2.1-.4 2.2 .5 2.1-.6 2.1 .7 2.2-.2 2.1 .4 2.2-.1 2.1-.4 2.2 0 2.2 .4 2.1 0 2.2-.1 2.1 0 2.2-.6 2.1 .5 2.1-.2 2.2-.1 2.1-.2 2.2-.2 2.2 .5 2.1-.4 2.2 .8 2.1-2.1 2.1 1.6 2.2 0 2.1 .1 2.2 .3 1.3 .2 .8-.9 2.2-2.2 .4 0 1.8 1.9 .8 1.2 1.3 0 2.2-.2 2.1-.5 2.2-.1 2.1 0 2.1 .4 2.2 .2 2.1 0 2.2-.4 2.2 .4 2.1-.3 2.2 .4 2.1-.4 2.1 .4 2.2-.5 2.1 .2 2.2-1 1.1 1.4 1-45.7 1.3-53.7 .9 18.6 2.2 45.7 1.6 35.1 .5-.2 2.2-.7 2.1 .8 2.2 0 2.1 0 2.1-.3 2.2 .3 2.1 .1 0-3.1 2.2-99.2 1-46 1.2 24.6 2.1 45.9 1.1 24.1 1.1 23 1.3 30.7 .8-1.5 2.1 1.1 2.2-.3 2.1-.2 2.2 .2 2.1 .6 2.2-.3 2.2 0 2.1 .2 2.2-1 2.1 .3 2.2 .3 2.1 .5 2.1-.1 2.2-.1 2.1 0 2.2-.3 2.2 .4 2.1-.3 2.2 .4 2.1-.2 2.1-.3 2.2 .3 2.1-.3 2.2-.3 2.1-.5 2.2 .8 2.2 .4 2.1-.4 2.2-.4 2.1 .5 2.2-.2 2.1 .5 2.1-.2 2.2-.1 2.1-.3 2.2 .7 2.2-.4 2.1 .3 2.2 0 2.1 .1 2.1-.3 2.2-.2 2.1 .5 2.2-.3 2.1 .3 2.2-1.1 2.2 1.1 2.1-.1 2.2-.1 2.1-.5 2.2 .3 2.1-.3 2.1 .3 2.2-.6 2.1 .6 2.2-.7 2.2 1 2.1-.9 2.2-.1 2.1 1.1 2.1-.7 .1 .8 2.1-37.5 .2-2.8 1.9-.2 .5 .2 1.7 29.1 .6 11.2 1.5-.4 2.2-.3 2.2-.1 2.1 .2 2.2 .2 2.1-.1 2.2 .3 2.1-.4 2.1 .2 2.2 .1 2.1 .1 2.2-.1 2.2 .1 2.1-.4 2.2 .2 2.1-.3 2.1 .4 2.2 .1 1.2 .2 .9-60.7 2.2-137.5 .4-24.7 1.7 136.8 .9 67 1.3-7.8 .3-1.4 1.9 18.4 .9 9.9 1.2-.5 2.2 0 2.1-.5 2.2 .3 2.1 .4 2.1-.8 2.2 .7 2.1 .1 2.2-.1 2.2 0 2.1-.7 2.2 .7 2.1 .3 2.1-.8 2.2 .3 2.1-.2 2.2 .8 2.1 0 2.2-.3 2.2-1.4 2.1 1.5 2.2-.4 2.1 .1 1.3 .5 .9-22.9 2.1-56.8 2.1 59.8 .7 19.9 1.5-.6 2.1-.6 2.2 .8 2.2-.4 2.1-.6 2.2 .6 2.1 .6 2.1-.5 2.2 .4 2.1 .2 2.2-1.2 2.1 1.1 2.2-.1 2.2 .2 2.1-.2 2.2-.1 2.1 .2 2.2-.4 2.1-.5 2.1 .9 2.2-.3 2.1-.1 2.2-.1 2.2-.1 2.1 .8 2.2-.6 2.1 .1 2.1 0 2.2 0 2.1 .5 2.2-.2 2.1 0 2.2-.3 2.2 .3 2.1-.9 2.2 .5 2.1 .1 2.2-.4 2.1 .5 2.1 .4 2.2-1.4 2.1 .1 1.9 1.3 .3-6 2-36.6 .2 0 1.3 3.5 .8 9.8 2.2 26.8 .1 2.5 2-.1 2.1-.1 2.2 .2 2.1-.2 2.2 .2 2.1-1 2.2 .8 2.2 .2 2.1-.2 2.2 .1 2.1 .1 2.2-.1 2.1 0 2.1-1 2.2 .9 2.1 .2 2.2-.3 2.2-.1 2.1 .2 2.2-.4 2.1 .2 2.1 .2 2.2-.2 2.1 0 2.2 .2 2.1-.3 2.2-.3 2.2 .7 .8 .1 12 0 0 18.4 -672 0Z" fill="#E6874A" fill-opacity="0.1" stroke="#E6874A" stroke-width="2" stroke-linejoin="round"/><path d="M926 1325.2l12 0 648 0 12 0 0 12.3 -672 0Z" fill="#D95E4F" fill-opacity="0.1" stroke="#D95E4F" stroke-width="2" stroke-linejoin="round"/><path d="M926 1325.2l12 0 236.5 .3 1.5-5.5 1.5 5.5 185.5 0 1.1-4.5 1.4 4.5 220.5-.3 12 0 0 12.3 -672 0Z" fill="#3A78BE" fill-opacity="0.1" stroke="#3A78BE" stroke-width="2" stroke-linejoin="round"/></g>
<rect x="882.4" y="1397.5" width="23.5" height="6.5" rx="2.5" fill="#80B071"/>
<text x="914.4" y="1408" class="lg" textLength="107.2" lengthAdjust="spacingAndGlyphs">Read (fioa)</text>
<rect x="1041.3" y="1397.5" width="23.5" height="6.5" rx="2.5" fill="#E5B84F"/>
<text x="1073.3" y="1408" class="lg" textLength="119.7" lengthAdjust="spacingAndGlyphs">Read (fioa1)</text>
<rect x="1212.7" y="1397.5" width="23.5" height="6.5" rx="2.5" fill="#7ACFDF"/>
<text x="1244.7" y="1408" class="lg" textLength="106.1" lengthAdjust="spacingAndGlyphs">Read (sda)</text>
<rect x="1370.5" y="1397.5" width="23.5" height="6.5" rx="2.5" fill="#E6874A"/>
<text x="1402.5" y="1408" class="lg" textLength="107.9" lengthAdjust="spacingAndGlyphs">Write (fioa)</text>
<rect x="882.4" y="1435.5" width="23.5" height="6.5" rx="2.5" fill="#D95E4F"/>
<text x="914.4" y="1446" class="lg" textLength="120.8" lengthAdjust="spacingAndGlyphs">Write (fioa1)</text>
<rect x="1054.9" y="1435.5" width="23.5" height="6.5" rx="2.5" fill="#3A78BE"/>
<text x="1086.9" y="1446" class="lg" textLength="107.2" lengthAdjust="spacingAndGlyphs">Write (sda)</text>
<rect x="1658.5" y="1008.5" width="795" height="459" rx="5" fill="#141516"/>
<rect x="1660" y="1010" width="792" height="456" rx="4" fill="#212124"/>
<text x="2055.0" y="1046" class="ttl" text-anchor="middle" textLength="222.3" lengthAdjust="spacingAndGlyphs">m4-03 Network I/O</text>
<path d="M2444 1452 h4 v10 h-10 v-4 h6 z" fill="#5d5d5d"/>
<text transform="translate(1738 1370.0) scale(.894 1)" class="ax" text-anchor="end">0</text>
<text transform="translate(1738 1299.0) scale(.894 1)" class="ax" text-anchor="end">100 K</text>
<text transform="translate(1738 1228.0) scale(.894 1)" class="ax" text-anchor="end">200 K</text>
<text transform="translate(1738 1157.0) scale(.894 1)" class="ax" text-anchor="end">300 K</text>
<text transform="translate(1738 1086.0) scale(.894 1)" class="ax" text-anchor="end">400 K</text>
<text transform="translate(1769.0 1397.0) scale(.894 1)" class="ax" text-anchor="middle">06:00</text>
<text transform="translate(2030.0 1397.0) scale(.894 1)" class="ax" text-anchor="middle">06:30</text>
<text transform="translate(2291.0 1397.0) scale(.894 1)" class="ax" text-anchor="middle">07:00</text>
<defs><clipPath id="cnet1"><rect x="1748" y="1061" width="656" height="305"/></clipPath></defs><g clip-path="url(#cnet1)"><path d="M1736 1160.1l12 0 2.2 0 2.1 0 2.2 0 2.2-.1 2.1 .3 2.2-.4 2.2 .2 2.2 .2 2.1-.1 2.2 .1 2.2-.3 2.1 0 2.2 0 2.2-.1 2.1-.1 1.5 .3 .7-.7 1.5-1.4 .7 .5 1.5 1.6 .7 0 2.1 .3 2.2 0 2.2-.1 2.1-.3 2.2 0 2.2 .3 2.1-.4 2.2 .4 2.2-.4 2.2 .2 2.1 0 2.2 .3 2.2-.2 2.1 .1 2.2-.3 2.2 0 2.2 .3 2.1-.1 1.8-.1 .4-.2 1.8-1.9 .4 .1 1.8 2 .3-.3 2.2 .3 2.2-.1 2.1 0 2.2 .3 2.2 .1 2.2-.5 2.1 0 2.2 0 2.2 0 2.1 .3 2.2-.2 2.2 .4 2.1-.6 2.2 .3 2.2-.2 2.1 .4 2.2-.3 2.2-.1 1.9 .2 .3-.2 1.9-1.9 .2 .4 2 1.7 .2-.3 2.2 .1 2.1 .4 2.2-.2 2.2-.2 2.1 .5 2.2 0 2.2-.3 2.2-.2 2.1-.1 2.2 .4 2.2 .1 2.1-.1 1.4-.1 .8 6.3 1.4 10.5 .8-6 1.4-10.8 .8-.1 1.5 .1 .6 4.2 1.6 10.7 .6-3.8 1.6-11.1 .6 0 2.1 0 2.2-.1 2.2 .3 1.8-.2 .3 2.3 1.9 11 .3-2 1.9-11.3 .3 .3 2.2-.1 2.1-.3 2.2 0 0 .1 2.2 15.3 0 .2 2.1-15 .1-.5 1 0 1.1 7.1 1.1 7 1.1-6.6 1.1-7.5 1 .3 2.2-.2 2.2-.1 2.2-.2 1.9 .2 .2 1.6 2 17.1 .2-1.4 2-17.3 .2-.1 1.5 .1 .6-16 1.6-40.1 .6 15.2 1.6 40.9 .6-.2 2.1 .3 2.2-.3 2.2-.1 2.1 .6 2.2-.4 2.2 0 2.2 .3 2.1-.4 2.2 .4 2.2-.4 2.1 .3 2.2 .1 2.2-.4 2.1 .1 2.2 .3 2.2-.2 2.2 0 2.1-.3 2.2 .1 2.2 .5 2.1 0 2.2-.3 2.2 .1 1.7-.1 .4 3.5 1.8 14.6 .4-3.2 1.8-14.9 .4 .1 2.2 0 1.8-.1 .3 2.4 1.9 12.5 .3-2.2 1.9-12.7 .3 .1 2.1-.1 2.2-.1 1.7 .1 .5 3.2 1.7 12.3 .5-3.7 1.3-11.8 .4 0 .4 3.1 1.4 11 .8-5.3 1.4-8.8 .8-.1 2.1 .1 2.2 0 1.2 0 1 6.4 1.2 8.5 .9-6.1 1.3-8.8 .9 0 0-.2 2.2 14.3 0 0 2.2-13.6 0-.5 2.1 0 2.2-.1 2.2 .3 0-.2 2.1 18.3 .1 .4 2.1-18 .1-.7 2.1 .2 2.1-.1 2.2-.3 2.2 .5 2.1-.4 2.2-.1 2.2 .5 2.2-.1 2.1-.2 2.2 0 2.2 0 2.1 0 2.2-.2 2.2 .3 2.2-.2 2.1-.1 2.2 .1 2.2 0 2.1-.2 2.2 .2 2.2 0 2.1-.1 2.2 .2 2.2-.3 2.2 .3 1.7 0 .4-7.8 1.8-32.3 .4 7 1.8 33.1 .4 .1 2.1 0 2.2-.3 2.2 0 2.1 .3 2.2-.2 2.2-.1 2.1 .1 2.2 0 2.2-.1 2.2-.1 2.1 .2 2.2 .3 2.2-.5 2.1 0 2.2 .1 2.2 .2 2.2-.1 2.1 .2 2.2 0 1.3-.1 .9 1.6 1.3 2.3 .8-1.5 1.4-2.4 .8 .2 2.2 .1 2.1-.5 2.2 .1 2.2 .3 2.1-.1 2.2-.2 1 .1 1.2 8.5 1 7 1.2-8.3 1-7.2 .4 0 .7 4.9 1.5 9.2 .7-4.7 1.5-9.4 .7-.2 1.3 .2 .8 5.9 1.4 9 .8-5.5 1.4-9.4 .8 .2 2.2 0 2.1 0 2.2-.1 2.2-.2 1.6 .1 .5 3.7 1.7 11.8 .5-3.7 1.7-11.8 .5 .2 2.1 .1 2.2-.6 2.2 .3 1.9 0 .2-4.7 2-38.1 .2 4.8 1.9 38 .1 0 .2 1.6 1.9 17.1 .3-2.2 1.9-16.5 .2-.1 2.2-.2 2.2 .1 2.1 .5 2.2-.1 2.2 .1 2.1-.2 2.2-.4 2.2 .3 2.2 .2 2.1-.2 2.2 .2 2.2-.5 2.1 .2 2.2 .1 2.2 0 2.2-.1 2.1 .2 2.2 .1 2.2 0 2.1-.3 2.2-.1 2.2 .2 2.1 .2 2.2-.3 2.2-.2 2.1 .2 2.2 0 2.2-.2 2.2 .4 2.1-.4 2.2 .5 2.2 .1 2.1-.1 2.2 0 2.2-.1 2.2 .1 2.1-.2 2.2 .1 2.2-.4 2.1 .3 2.2 .3 1.7-.3 .5-8.6 1.7-30.2 .4 7.7 1.8 31.1 .4 .2 2.2-.2 2.2 .2 2.1-.2 2.2-.1 2.2 .4 2.1-.4 2.2 .3 2.2-.1 2.1 .2 2.2-.2 2.2 0 2.1-.4 2.2 .4 2.2-.4 2.2 .1 2.1 .4 2.2-.3 2.2 0 2.1 .2 2.2 .2 2.2-.5 2.2 0 2.1 .3 1.9-.1 .3 2.5 1.9 15.1 .3-2.3 1.9-15.3 .2 .1 2.2-.4 2.2 .1 2.1 0 .7 .2 12 0 0 216.9 -680 0Z" fill="#80B071" fill-opacity="0.1" stroke="#80B071" stroke-width="2" stroke-linejoin="round"/><path d="M1736 1356.6l12 0 2.2-.4 2.1-.1 2.2 .2 2.2-.5 2.1 .3 2.2 .2 2.2 0 2.2-.6 2.1 .7 2.2-.2 2.2 .4 2.1 0 2.2-.6 2.2 .4 2.1-.3 2.2 0 2.2 .1 2.2 .3 2.1 0 2.2-.2 2.2-1 2.1 .7 2.2-.5 2.2 .9 2.1-.1 2.2-.6 2.2 .5 2.2-.3 2.1 .3 2.2 .1 2.2 .2 2.1-.1 2.2-.3 2.2 0 2.2 0 2.1 .5 2.2-.1 2.2-.1 2.1 0 2.2-.3 2.2-.1 2.1-.3 2.2 .9 2.2-.8 2.2 .6 2.1 .1 2.2-.4 2.2 0 2.1 .2 2.2 .1 2.2-.2 2.1 0 2.2 .3 2.2-.1 2.1-.2 2.2-.1 2.2 0 2.2-.3 2.1-.3 2.2 1 2.2-.6 2.1 .1 2.2 .3 2.2 .1 2.1-.3 2.2-.1 2.2-.3 2.2 .2 2.1-.3 2.2 .8 2.2-.3 2.1 .3 2.2 .1 2.2 0 2.2-.4 2.1 .1 2.2-.1 2.2-.2 2.1 .4 2.2-.7 2.2 .7 2.1 .2 2.2-.1 2.2 .1 2.2-.5 2.1 .2 2.2 .1 2.2 .2 2.1 0 2.2-.7 2.2 .3 2.1-.3 2.2-.3 2.2 .8 2.2 .1 2.1-.2 2.2 .3 2.2-.6 1.3 .7 .8-1.1 1.6-1.5 .6 .1 1.8 2.5 .4-.2 2.1 .2 2.2-.2 2.2 .2 2.1-.8 2.2 .4 2.2-.3 2.2 .1 2.1 .2 2.2 .3 2.2-.4 2.1 0 2.2 .4 2.2-.3 2.1 0 2.2-.4 2.2 .6 2.2-.5 2.1 .7 2.2-.6 2.2 .3 2.1-.3 2.2 .1 2.2 .1 2.1 .1 2.2-.8 2.2 .4 2.2 .7 2.1-.4 2.2-.3 2.2 .4 2.1 .1 2.2-.4 2.2-.2 2.2 0 2.1 .5 2.2 .1 2.2-1.2 2.1 .8 2.2-.2 2.2 .6 2.1 .2 2.2-.4 2.2 .3 2.2-.1 2.1-.4 2.2 .5 2.2 0 2.1 0 2.2-.8 2.2-.3 2.1 1 2.2-.8 2.2 .8 2.1-.2 2.2 .2 2.2-.5 2.2 .3 2.1 .3 2.2-.3 2.2 .4 2.1-.5 2.2-.1 2.2 0 2.2 .4 2.1-.1 2.2 .2 2.2-.4 2.1 .3 2.2-.5 2.2 .6 2.1-.1 2.2-.1 2.2-.1 2.2 0 2.1 0 2.2-.2 2.2 .2 2.1 .2 2.2-.1 2.2-.6 2.1 .9 2.2-.5 2.2-.4 2.1 .6 2.2-.1 2.2 .3 2.2-.3 2.1-.4 2.2 .6 2.2 0 2.1-.1 2.2-.3 2.2 .5 2.2 .1 2.1-.8 2.2-.4 1.1 1.2 1.1-2.4 1.3-1.2 .8 1.1 1.6 2.5 .6-.8 2.2 0 2.1 .3 2.2 .4 2.2-.1 2.1-.1 2.2-.1 2.2 .3 2.2 0 2.1-.2 2.2 .3 2.2-.5 2.1 .4 2.2 0 2.2 .1 2.2-.1 2.1-.3 2.2 .3 2.2-.3 2.1 0 2.2-.1 2.2-.3 2.1 .4 2.2 .4 2.2-.1 1.5 .1 .6-.8 1.8-1.3 .4 .2 2 1.9 .2-.6 2.2 .2 2.1-.1 2.2 .3 2.2-.6 2.1 .7 2.2 0 2.2-.1 2.1-.5 2.2 .1 2.2 .2 2.2-.9 2.1 .9 2.2-.3 2.2 .5 2.1-.6 2.2-.1 2.2 .4 2.2 .4 2.1-.3 2.2-.4 2.2 .3 2.1 .1 2.2-.3 2.2 .6 2.1-.6 2.2 .3 2.2-.2 2.1-.6 2.2 .8 2.2-.1 2.2 .3 2.1 .2 2.2-.4 2.2 0 2.1 .4 2.2-.3 2.2 0 2.2 .1 2.1-.2 2.2 .3 2.2 0 2.1-.2 2.2 0 2.2 .2 2.1-.1 2.2 .2 2.2-.1 2.2-.2 2.1 .2 2.2 0 2.2-.5 2.1 .3 2.2-.3 2.2-.4 2.1 .4 2.2-.4 2.2 .3 2.1 0 2.2 .4 2.2-.4 2.2 .3 2.1 .1 2.2-.4 2.2 .5 2.1-.3 2.2-.4 2.2 .7 2.2-.3 2.1 .1 2.2-.4 2.2 .5 2.1-.2 2.2-.2 2.2-.3 2.1 .8 .7 .2 12 0 0 20.4 -680 0Z" fill="#E5B84F" fill-opacity="0.1" stroke="#E5B84F" stroke-width="2" stroke-linejoin="round"/></g>
<path d="M1748 1365.0H2404 M1748 1294.0H2404 M1748 1223.0H2404 M1748 1152.0H2404 M1748 1081.0H2404" stroke="rgba(200,200,200,0.24)" stroke-width="2" fill="none"/>
<path d="M1769.0 1081V1365 M2030.0 1081V1365 M2291.0 1081V1365" stroke="rgba(200,200,200,0.24)" stroke-width="2" fill="none"/>
<rect x="1700.0" y="1435.5" width="23.5" height="6.5" rx="2.5" fill="#80B071"/>
<text x="1732.0" y="1446" class="lg" textLength="138.1" lengthAdjust="spacingAndGlyphs">Rx (enp7s0f0)</text>
<rect x="1889.2" y="1435.5" width="23.5" height="6.5" rx="2.5" fill="#E5B84F"/>
<text x="1921.2" y="1446" class="lg" textLength="136.8" lengthAdjust="spacingAndGlyphs">Tx (enp7s0f0)</text>
<rect x="24.5" y="1488.5" width="795" height="459" rx="5" fill="#141516"/>
<rect x="26" y="1490" width="792" height="456" rx="4" fill="#212124"/>
<text x="421.0" y="1526" class="ttl" text-anchor="middle" textLength="235.2" lengthAdjust="spacingAndGlyphs">m4-04 Mem &amp; Swap</text>
<path d="M810 1932 h4 v10 h-10 v-4 h6 z" fill="#5d5d5d"/>
<text transform="translate(122.7 1810.5) scale(.894 1)" class="ax" text-anchor="end">0 B</text>
<text transform="translate(122.7 1761.6) scale(.894 1)" class="ax" text-anchor="end">47 GiB</text>
<text transform="translate(122.7 1712.7) scale(.894 1)" class="ax" text-anchor="end">93 GiB</text>
<text transform="translate(122.7 1663.8) scale(.894 1)" class="ax" text-anchor="end">140 GiB</text>
<text transform="translate(122.7 1614.9) scale(.894 1)" class="ax" text-anchor="end">186 GiB</text>
<text transform="translate(122.7 1566.0) scale(.894 1)" class="ax" text-anchor="end">233 GiB</text>
<text transform="translate(155.0 1837.5) scale(.894 1)" class="ax" text-anchor="middle">06:00</text>
<text transform="translate(407.0 1837.5) scale(.894 1)" class="ax" text-anchor="middle">06:30</text>
<text transform="translate(659.0 1837.5) scale(.894 1)" class="ax" text-anchor="middle">07:00</text>
<defs><clipPath id="cmem2"><rect x="134" y="1541" width="636" height="265.5"/></clipPath></defs><g clip-path="url(#cmem2)"><path d="M134 1762.3l14 .2 14 0 14 0 14-.4 14 .3 14-.1 14 .1 14-.2 14 .1 14 .1 14-.1 14 .1 14-.2 14 .1 14 .3 14-.1 6 0 6-1.7 2 0 14 .1 14-.1 14-.2 14 .4 14-.1 14 .1 14 0 14 .2 14-.3 14 .2 14-.2 14 .1 6 0 6-1.4 2 .1 14-.2 14-.1 14 .2 14 .2 14-.1 14 0 14 .1 14-.3 14 .1 14 0 14 .3 14-.3 14 0 14 0 14 0 6 .2 0 45.7 -6 0 -14 0 -14 0 -14 0 -14 0 -14 0 -14 0 -14 0 -14 0 -14 0 -14 0 -14 0 -14 0 -14 0 -14 0 -14 0 -2 0 -6 0 -6 0 -14 0 -14 0 -14 0 -14 0 -14 0 -14 0 -14 0 -14 0 -14 0 -14 0 -14 0 -14 0 -2 0 -6 0 -6 0 -14 0 -14 0 -14 0 -14 0 -14 0 -14 0 -14 0 -14 0 -14 0 -14 0 -14 0 -14 0 -14 0 -14 0 -14 0 -14 0Z" fill="#80B071" fill-opacity="0.4"/><path d="M134 1762.3l14 .2 14 0 14 0 14-.4 14 .3 14-.1 14 .1 14-.2 14 .1 14 .1 14-.1 14 .1 14-.2 14 .1 14 .3 14-.1 6 0 6-1.7 2 0 14 .1 14-.1 14-.2 14 .4 14-.1 14 .1 14 0 14 .2 14-.3 14 .2 14-.2 14 .1 6 0 6-1.4 2 .1 14-.2 14-.1 14 .2 14 .2 14-.1 14 0 14 .1 14-.3 14 .1 14 0 14 .3 14-.3 14 0 14 0 14 0 6 .2" fill="none" stroke="#80B071" stroke-width="2" stroke-linejoin="round" stroke-opacity="1"/><path d="M134 1626.2l14 0 14 .1 14 .1 14-.3 14 .2 14 .2 14 0 14-.4 14 .3 14 0 14-.1 14 .3 14-.2 14-.1 14 .3 14-.1 6-.1 6-1.7 2-.1 14 0 14 .1 14-.1 14 .3 14 0 14-.1 14 .2 14 .1 14-.2 14 .1 14-.2 14 0 6 .2 6-1.8 2 .2 14-.3 14 0 14 .3 14 0 14-.3 14 .1 14 0 14 0 14-.1 14 .2 14-.1 14 .1 14-.1 14 0 14 0 6 .2 0 136.4 -6-.2 -14 0 -14 0 -14 0 -14 .3 -14-.3 -14 0 -14-.1 -14 .3 -14-.1 -14 0 -14 .1 -14-.2 -14-.2 -14 .1 -14 .2 -2-.1 -6 1.4 -6 0 -14-.1 -14 .2 -14-.2 -14 .3 -14-.2 -14 0 -14-.1 -14 .1 -14-.4 -14 .2 -14 .1 -14-.1 -2 0 -6 1.7 -6 0 -14 .1 -14-.3 -14-.1 -14 .2 -14-.1 -14 .1 -14-.1 -14-.1 -14 .2 -14-.1 -14 .1 -14-.3 -14 .4 -14 0 -14 0 -14-.2Z" fill="#E5B84F" fill-opacity="0.4"/><path d="M134 1626.2l14 0 14 .1 14 .1 14-.3 14 .2 14 .2 14 0 14-.4 14 .3 14 0 14-.1 14 .3 14-.2 14-.1 14 .3 14-.1 6-.1 6-1.7 2-.1 14 0 14 .1 14-.1 14 .3 14 0 14-.1 14 .2 14 .1 14-.2 14 .1 14-.2 14 0 6 .2 6-1.8 2 .2 14-.3 14 0 14 .3 14 0 14-.3 14 .1 14 0 14 0 14-.1 14 .2 14-.1 14 .1 14-.1 14 0 14 0 6 .2" fill="none" stroke="#E5B84F" stroke-width="2" stroke-linejoin="round" stroke-opacity="1"/><path d="M134 1625.6l14 0 14 .1 14 .1 14-.3 14 .2 14 .2 14 0 14-.4 14 .3 14 0 14-.1 14 .3 14-.2 14-.1 14 .3 14-.1 6-.1 6-1.7 2-.1 14 0 14 .1 14-.1 14 .3 14 0 14-.1 14 .2 14 .1 14-.2 14 .1 14-.2 14 0 6 .2 6-1.8 2 .2 14-.3 14 0 14 .3 14 0 14-.3 14 .1 14 0 14 0 14-.1 14 .2 14-.1 14 .1 14-.1 14 0 14 0 6 .2 0 .6 -6-.2 -14 0 -14 0 -14 .1 -14-.1 -14 .1 -14-.2 -14 .1 -14 0 -14 0 -14-.1 -14 .3 -14 0 -14-.3 -14 0 -14 .3 -2-.2 -6 1.8 -6-.2 -14 0 -14 .2 -14-.1 -14 .2 -14-.1 -14-.2 -14 .1 -14 0 -14-.3 -14 .1 -14-.1 -14 0 -2 .1 -6 1.7 -6 .1 -14 .1 -14-.3 -14 .1 -14 .2 -14-.3 -14 .1 -14 0 -14-.3 -14 .4 -14 0 -14-.2 -14-.2 -14 .3 -14-.1 -14-.1 -14 0Z" fill="#7ACFDF" fill-opacity="0.4"/><path d="M134 1625.6l14 0 14 .1 14 .1 14-.3 14 .2 14 .2 14 0 14-.4 14 .3 14 0 14-.1 14 .3 14-.2 14-.1 14 .3 14-.1 6-.1 6-1.7 2-.1 14 0 14 .1 14-.1 14 .3 14 0 14-.1 14 .2 14 .1 14-.2 14 .1 14-.2 14 0 6 .2 6-1.8 2 .2 14-.3 14 0 14 .3 14 0 14-.3 14 .1 14 0 14 0 14-.1 14 .2 14-.1 14 .1 14-.1 14 0 14 0 6 .2" fill="none" stroke="#7ACFDF" stroke-width="2" stroke-linejoin="round" stroke-opacity="1"/><path d="M134 1609l14 0 14 0 14 0 14 0 14 0 14 0 14 0 14 0 14 0 14 0 14 0 14 0 14 0 14 0 14 0 14 0 6 0 6 0 2 0 14 0 14 0 14 0 14 0 14 0 14 0 14 0 14 0 14 0 14 0 14 0 14 0 6 0 6 0 2 0 14 0 14 0 14 0 14 0 14 0 14 0 14 0 14 0 14 0 14 0 14 0 14 0 14 0 14 0 14 0 6 0 0 13.8 -6-.2 -14 0 -14 0 -14 .1 -14-.1 -14 .1 -14-.2 -14 .1 -14 0 -14 0 -14-.1 -14 .3 -14 0 -14-.3 -14 0 -14 .3 -2-.2 -6 1.8 -6-.2 -14 0 -14 .2 -14-.1 -14 .2 -14-.1 -14-.2 -14 .1 -14 0 -14-.3 -14 .1 -14-.1 -14 0 -2 .1 -6 1.7 -6 .1 -14 .1 -14-.3 -14 .1 -14 .2 -14-.3 -14 .1 -14 0 -14-.3 -14 .4 -14 0 -14-.2 -14-.2 -14 .3 -14-.1 -14-.1 -14 0Z" fill="#E6874A" fill-opacity="0.4"/><path d="M134 1609l14 0 14 0 14 0 14 0 14 0 14 0 14 0 14 0 14 0 14 0 14 0 14 0 14 0 14 0 14 0 14 0 6 0 6 0 2 0 14 0 14 0 14 0 14 0 14 0 14 0 14 0 14 0 14 0 14 0 14 0 14 0 6 0 6 0 2 0 14 0 14 0 14 0 14 0 14 0 14 0 14 0 14 0 14 0 14 0 14 0 14 0 14 0 14 0 14 0 6 0" fill="none" stroke="#E6874A" stroke-width="2" stroke-linejoin="round" stroke-opacity="1"/><path d="M134 1608.5l14 0 14 0 14 0 14 0 14 0 14 0 14 0 14 0 14 0 14 0 14 0 14 0 14 0 14 0 14 0 14 0 6 0 6 0 2 0 14 0 14 0 14 0 14 0 14 0 14 0 14 0 14 0 14 0 14 0 14 0 14 0 6 0 6 0 2 0 14 0 14 0 14 0 14 0 14 0 14 0 14 0 14 0 14 0 14 0 14 0 14 0 14 0 14 0 14 0 6 0 0 .5 -6 0 -14 0 -14 0 -14 0 -14 0 -14 0 -14 0 -14 0 -14 0 -14 0 -14 0 -14 0 -14 0 -14 0 -14 0 -14 0 -2 0 -6 0 -6 0 -14 0 -14 0 -14 0 -14 0 -14 0 -14 0 -14 0 -14 0 -14 0 -14 0 -14 0 -14 0 -2 0 -6 0 -6 0 -14 0 -14 0 -14 0 -14 0 -14 0 -14 0 -14 0 -14 0 -14 0 -14 0 -14 0 -14 0 -14 0 -14 0 -14 0 -14 0Z" fill="#D95E4F" fill-opacity="0.4"/><path d="M134 1608.5l14 0 14 0 14 0 14 0 14 0 14 0 14 0 14 0 14 0 14 0 14 0 14 0 14 0 14 0 14 0 14 0 6 0 6 0 2 0 14 0 14 0 14 0 14 0 14 0 14 0 14 0 14 0 14 0 14 0 14 0 14 0 6 0 6 0 2 0 14 0 14 0 14 0 14 0 14 0 14 0 14 0 14 0 14 0 14 0 14 0 14 0 14 0 14 0 14 0 6 0" fill="none" stroke="#D95E4F" stroke-width="2" stroke-linejoin="round" stroke-opacity="1"/><path d="M134 1599.6l14 0 14 0 14 0 14 0 14 0 14 0 14 0 14 0 14 0 14 0 14 0 14 0 14 0 14 0 14 0 14 0 6 0 6 0 2 0 14 0 14 0 14 0 14 0 14 0 14 0 14 0 14 0 14 0 14 0 14 0 14 0 6 0 6 0 2 0 14 0 14 0 14 0 14 0 14 0 14 0 14 0 14 0 14 0 14 0 14 0 14 0 14 0 14 0 14 0 6 0 0 8.9 -6 0 -14 0 -14 0 -14 0 -14 0 -14 0 -14 0 -14 0 -14 0 -14 0 -14 0 -14 0 -14 0 -14 0 -14 0 -14 0 -2 0 -6 0 -6 0 -14 0 -14 0 -14 0 -14 0 -14 0 -14 0 -14 0 -14 0 -14 0 -14 0 -14 0 -14 0 -2 0 -6 0 -6 0 -14 0 -14 0 -14 0 -14 0 -14 0 -14 0 -14 0 -14 0 -14 0 -14 0 -14 0 -14 0 -14 0 -14 0 -14 0 -14 0Z" fill="#3A78BE" fill-opacity="0.4"/><path d="M134 1599.6l14 0 14 0 14 0 14 0 14 0 14 0 14 0 14 0 14 0 14 0 14 0 14 0 14 0 14 0 14 0 14 0 6 0 6 0 2 0 14 0 14 0 14 0 14 0 14 0 14 0 14 0 14 0 14 0 14 0 14 0 14 0 6 0 6 0 2 0 14 0 14 0 14 0 14 0 14 0 14 0 14 0 14 0 14 0 14 0 14 0 14 0 14 0 14 0 14 0 6 0" fill="none" stroke="#3A78BE" stroke-width="2" stroke-linejoin="round" stroke-opacity="1"/></g>
<path d="M134 1805.5H770 M134 1756.6H770 M134 1707.7H770 M134 1658.8H770 M134 1609.9H770 M134 1561.0H770" stroke="rgba(200,200,200,0.24)" stroke-width="2" fill="none"/>
<path d="M155.0 1561V1805.5 M407.0 1561V1805.5 M659.0 1561V1805.5" stroke="rgba(200,200,200,0.24)" stroke-width="2" fill="none"/>
<rect x="66.2" y="1877.5" width="23.5" height="6.5" rx="2.5" fill="#80B071"/>
<text x="98.2" y="1888" class="lg" textLength="110.8" lengthAdjust="spacingAndGlyphs">Mem_Used</text>
<rect x="227.7" y="1877.5" width="23.5" height="6.5" rx="2.5" fill="#E5B84F"/>
<text x="259.7" y="1888" class="lg" textLength="134.8" lengthAdjust="spacingAndGlyphs">Mem_Cached</text>
<rect x="414.0" y="1877.5" width="23.5" height="6.5" rx="2.5" fill="#7ACFDF"/>
<text x="446.0" y="1888" class="lg" textLength="132.2" lengthAdjust="spacingAndGlyphs">Mem_Buffers</text>
<rect x="597.2" y="1877.5" width="23.5" height="6.5" rx="2.5" fill="#E6874A"/>
<text x="629.2" y="1888" class="lg" textLength="103.5" lengthAdjust="spacingAndGlyphs">Mem_Free</text>
<rect x="66.2" y="1915.5" width="23.5" height="6.5" rx="2.5" fill="#D95E4F"/>
<text x="98.2" y="1926" class="lg" textLength="150.7" lengthAdjust="spacingAndGlyphs">Swap_Chached</text>
<rect x="268.3" y="1915.5" width="23.5" height="6.5" rx="2.5" fill="#3A78BE"/>
<text x="300.3" y="1926" class="lg" textLength="107.5" lengthAdjust="spacingAndGlyphs">Swap_Free</text>
<rect x="840.5" y="1488.5" width="795" height="459" rx="5" fill="#141516"/>
<rect x="842" y="1490" width="792" height="456" rx="4" fill="#212124"/>
<text x="1237.0" y="1526" class="ttl" text-anchor="middle" textLength="175.4" lengthAdjust="spacingAndGlyphs">m4-04 Disk I/O</text>
<path d="M1626 1932 h4 v10 h-10 v-4 h6 z" fill="#5d5d5d"/>
<text transform="translate(925.6 1810.5) scale(.894 1)" class="ax" text-anchor="end">0 B</text>
<text transform="translate(925.6 1729.0) scale(.894 1)" class="ax" text-anchor="end">20 MB</text>
<text transform="translate(925.6 1647.5) scale(.894 1)" class="ax" text-anchor="end">40 MB</text>
<text transform="translate(925.6 1566.0) scale(.894 1)" class="ax" text-anchor="end">60 MB</text>
<text transform="translate(959.0 1837.5) scale(.894 1)" class="ax" text-anchor="middle">06:00</text>
<text transform="translate(1216.0 1837.5) scale(.894 1)" class="ax" text-anchor="middle">06:30</text>
<text transform="translate(1473.0 1837.5) scale(.894 1)" class="ax" text-anchor="middle">07:00</text>
<path d="M938 1805.5H1586 M938 1724.0H1586 M938 1642.5H1586 M938 1561.0H1586" stroke="rgba(200,200,200,0.24)" stroke-width="2" fill="none"/>
<path d="M959.0 1561V1805.5 M1216.0 1561V1805.5 M1473.0 1561V1805.5" stroke="rgba(200,200,200,0.24)" stroke-width="2" fill="none"/>
<defs><clipPath id="cdisk2"><rect x="938" y="1541" width="648" height="265.5"/></clipPath></defs><g clip-path="url(#cdisk2)"><path d="M926 1805.2l12 0 236 .3 2.5-28.9 3.5 26.4 3 2.5 179 0 2.5-16.5 3.5 16.5 218-.3 12 0 0 12.3 -672 0Z" fill="#80B071" fill-opacity="0.1" stroke="#80B071" stroke-width="2" stroke-linejoin="round"/><path d="M926 1805.2l12 0 648 0 12 0 0 12.3 -672 0Z" fill="#E5B84F" fill-opacity="0.1" stroke="#E5B84F" stroke-width="2" stroke-linejoin="round"/><path d="M926 1805.2l12 0 648 0 12 0 0 12.3 -672 0Z" fill="#7ACFDF" fill-opacity="0.1" stroke="#7ACFDF" stroke-width="2" stroke-linejoin="round"/><path d="M926 1803.7l12 0 2.1-.4 .1 .4 1.8-2.4 .3 .3 1.5 2.1 .7-.9 2.1 .8 2.2 0 0 .1 1.8-2.4 .3 .2 1.5 2.2 .6-.4 2.2-.1 2.2 .1 0 .4 1.8-2.4 .3 .1 1.5 2.3 .6-.1 2.2 0 2.2-.1 .1 .2 1.8-2.4 .2-.2 1.6 2.6 .5-.1 2.2-.4 2.1 .4 .2 .1 1.8-2.4 .2 0 1.6 2.4 .6-.3 2.1 .3 2.1-.1 .2 .1 1.8-2.4 .2-.2 1.6 2.6 .6-.1 2.1-.1 2.2 .1 .1 .1 1.8-2.4 .2-.2 1.6 2.6 .5-.4 2.2 .3 2.2 .1 .1 0 1.8-2.4 .2-.5 1.6 2.9 .5-.1 2.2-.5 2.2 .1 .2 .5 1.8-2.4 .1-.2 1.7 2.6 .4-.2 2.2-.1 2.1-.1 .3 .4 1.8-2.4 .1 .1 1.7 2.3 .5-.5 2.1 .4 2.2-.2 .2 .3 1.8-2.4 .1-.3 1.7 2.7 .5-.2 2.1 0 2.2 0 .2 .2 1.8-2.4 .1-.1 1.7 2.5 .4-.3 2.2-.3 2.1 .2 .3 .4 1.8-2.4 .1-.7 1.7 3.1 .5-.4 2.1 .3 2.2-.8 .3 .9 1.8-2.4 0-.1 1.8 2.5 .3 0 2.2-.3 2.1 .2 .4 .1 1.8-2.4 0 0 1.8 2.4 .3-.5 2.2 .4 2.2-.2 .3 .3 1.8-2.4 1.8 2.4 .4-.2 2.1 .2 2.2-.6 .3 .6 1.8-2.4 0 0 1.8 2.4 .3 0 2.2-.1 2.1 0 .4 .1 1.8-2.6 0 .2 1.8 2.4 .4-.1 2.1-.6 2.2 .6 .4 .1 1.7-2.6 .1 .2 1.8 2.4 .2-.3 2.2 .2 2.1-.1 .5 .2 1.7-2.4 .1 0 1.8 2.4 .2-.5 2.2 .5 2.2 0 .4 0 1.7-2.4 .1 0 1.8 2.4 .3-.1 2.1-.1 2.2-.6 .4 .8 1.7-2.9 .1 .5 1.8 2.4 .2-.1 2.2-.2 2.1 .2 .5 .1 1.7-2.2 .1-.2 1.8 2.4 .3-.6 2.1 .3 2.2 .2 .5 .1 1.6-2.5 .2 .1 1.8 2.4 .1-.1 2.2-.2 2.1 .3 .6 0 1.6-2.4 .2 0 1.8 2.4 .1 0 2.2-.2 2.2 .1 .5 .1 1.6-2.5 .2 .1 1.8 2.4 .2-.1 2.1-.4 2.2 .3 .5 .2 1.6-2.1 .2-.3 1.8 2.4 .1-.4 2.2-.1 2.1 .5 .7 0 1.5-24.6 2.2-34.9 .9-15.5 1.2 12.9 2.2 23 2.1 23.6 .3 3.5 1.8 5.5 .3 .8 1.9-2 .6-.1 1.5 3.9 1.3 3.9 .9-.3 2.1-.1 2.2 .3 2.2 0 .6 .1 1.5-2.7 .3 .3 1.8 2.4 .1-.4 2.1 .3 2.2 .1 .6 0 1.5-2.3 .3-.1 1.8 2.4 0-.3 2.2 .2 2.1-.2 2.2 0 1.8 .3 .4-10.4 2.1-62.9 1-29.1 1.2 33 2.1 63.1 .2 6.3 1.9-.2 2.2-.1 2.1 .2 2.2-.2 2 .3 .1-2.8 2.2-39.7 .7-12.4 1.5 28.3 1.3 26.6 .8-.3 2.2 .3 2.1-.4 2.2 .3 .7 .1 1.4-2 .4-.4 1.7 2.1 .1 .3 2.1-.5 2.1 .4 .8 .1 1.4-2.2 .4-.2 1.8 1.5 0 .9 2.1 0 2.2-.1 .8 .1 1.3-1.8 .5-.6 1.6 2 .2 .4 2-.1 2.1-.7 .9 .8 1.3-1.9 .5-.5 1.6 1.2 .2 1.2 2-.5 2.2 .3 .8 .2 1.3-1.8 .5-.6 1.7 2.2 .1 .2 2 0 2.2-.4 .8 .4 1.3-1.7 .5-.7 1.6 1.8 .2 .6 2-.1 2.1 0 .9 .1 1.3-1.8 .5-.6 1.7 2.1 .1 .3 2 0 2.2-.4 .9 .4 1.2-2.1 .6-.3 1.5 1.9 .3 .5 1.9-.1 2.1 .1 1 0 1.2-2.3 .6-.1 1.5 1.9 .3 .5 1.9 0 2.2-.2 .9 .2 1.2-1.6 .6-.8 1.6 1.6 .2 .8 1.9-.2 2.2-.1 .9 .3 1.2-1.8 .6-.6 1.5 1.6 .3 .8 1.9-.9 2.1 .9 1 0 1.2-2 .6-.4 1.6 1.6 .2 .8 1.9-.4 2.2 .3 1 .1 1.1-1.6 .7-.8 1.4 1.9 .4 .5 1.8-.2 1.2 .2 .9-56.7 2.2-127.7 .4-23.4 1.7 120.2 .9 58.9 1.3-3.8 .3-.4 1.9 21.3 .9 11.6 1.2-.1 2.2 0 2.1 0 2.2 0 1 .1 1.1-1.7 .7-.7 1.4 1.5 .4 .9 1.8-.1 2.1-.5 1.1 .6 1.1-1.5 .7-.9 1.5 1.6 .3 .8 1.8-.3 2.2 0 1.1 .3 1-1.4 .8-1 1.3 1.8 .5 .6 1.7-.4 2.1 .3 1.2 .1 1-1.8 .8-.6 1.3 1.4 .5 1 1.7-.4 2.2 .3 1.1 .1 1-1.6 .8-.8 1.4 1.7 .4 .7 1.7-.3 2.2 .3 1.1 0 1-1.6 .8-.8 1.3 1.4 .5 1 1.7-.2 2.1 .1 1.2 .1 1-1.3 .8-1.1 1.4 1.7 .4 .7 1.7-.3 2.2 .2 1.2 .1 .9-1.4 .9-1 1.2 .9 .6 1.5 1.6-.1 2.1-.1 1.3 .2 .9-1.7 .9-.7 1.2 1.2 .6 1.2 1.6 0 2.2-.4 1.2 .4 .9-1.3 .9-1.1 1.3 1.4 .5 1 1.6-.4 2.2 .2 1.2 .2 .9-1.2 .9-1.2 1.2 1.5 .6 .9 1.6-.1 2.1 .1 1.3 0 .9-1.7 .9-.7 1.3 1.4 .5 1 1.6-.2 2.2 .1 1.3 .1 .8-1.6 1-.8 1.1 1.5 .7 .9 1.5-.3 2.1 .1 1.4 .2 .8-1.2 1-1.2 1.1 1.5 .7 .9 1.5-.4 2.2 .2 1.3 .2 .8-1.2 1-1.2 1.2 1.5 .6 .9 1.5-.4 2.2 .3 1.3 .1 .8-1.4 1-1 1.1 1.4 .7 1 1.5-.2 2.1-.3 1.4 .5 .8-1.2 1-1.2 1.2 1.1 .6 1.3 1.5-.2 2.2-.2 1.4 .4 .7-1 1.1-1.4 1 1.1 .8 1.3 1.4-.2 2.1-.1 1.5 .3 .7-1.3 1.1-1.1 1 1.2 .8 1.2 1.4 0 2.2-.4 1.4 .4 .7-1 1.1-1.4 1.1 1.3 .7 1.1 1.4-.4 2.2-.1 1.4 .5 .7-1 1.1-1.4 1 1.2 .8 1.2 1.4-.3 2.1 .1 1.5 .2 .7-1 1.1-1.4 1.1 1.1 .7 1.3 1.4-.2 2.2 .2 1.5 0 .6-1 1.2-1.4 .9 1.2 .9 1.2 1.3-.1 2.1-.2 1.6 .3 .6-1.1 1.2-1.3 .9 1 .9 1.4 1.3-.2 2.2 .1 .8 .1 12 0 0 13.8 -672 0Z" fill="#E6874A" fill-opacity="0.1" stroke="#E6874A" stroke-width="2" stroke-linejoin="round"/><path d="M926 1805.2l12 0 648 0 12 0 0 12.3 -672 0Z" fill="#D95E4F" fill-opacity="0.1" stroke="#D95E4F" stroke-width="2" stroke-linejoin="round"/><path d="M926 1805.2l12 0 237 .3 1.5-2.5 1.5 2.5 408-.3 12 0 0 12.3 -672 0Z" fill="#3A78BE" fill-opacity="0.1" stroke="#3A78BE" stroke-width="2" stroke-linejoin="round"/></g>
<rect x="882.4" y="1877.5" width="23.5" height="6.5" rx="2.5" fill="#80B071"/>
<text x="914.4" y="1888" class="lg" textLength="107.2" lengthAdjust="spacingAndGlyphs">Read (fioa)</text>
<rect x="1041.3" y="1877.5" width="23.5" height="6.5" rx="2.5" fill="#E5B84F"/>
<text x="1073.3" y="1888" class="lg" textLength="119.7" lengthAdjust="spacingAndGlyphs">Read (fioa1)</text>
<rect x="1212.7" y="1877.5" width="23.5" height="6.5" rx="2.5" fill="#7ACFDF"/>
<text x="1244.7" y="1888" class="lg" textLength="106.1" lengthAdjust="spacingAndGlyphs">Read (sda)</text>
<rect x="1370.5" y="1877.5" width="23.5" height="6.5" rx="2.5" fill="#E6874A"/>
<text x="1402.5" y="1888" class="lg" textLength="107.9" lengthAdjust="spacingAndGlyphs">Write (fioa)</text>
<rect x="882.4" y="1915.5" width="23.5" height="6.5" rx="2.5" fill="#D95E4F"/>
<text x="914.4" y="1926" class="lg" textLength="120.8" lengthAdjust="spacingAndGlyphs">Write (fioa1)</text>
<rect x="1054.9" y="1915.5" width="23.5" height="6.5" rx="2.5" fill="#3A78BE"/>
<text x="1086.9" y="1926" class="lg" textLength="107.2" lengthAdjust="spacingAndGlyphs">Write (sda)</text>
<rect x="1658.5" y="1488.5" width="795" height="459" rx="5" fill="#141516"/>
<rect x="1660" y="1490" width="792" height="456" rx="4" fill="#212124"/>
<text x="2055.0" y="1526" class="ttl" text-anchor="middle" textLength="222.3" lengthAdjust="spacingAndGlyphs">m4-04 Network I/O</text>
<path d="M2444 1932 h4 v10 h-10 v-4 h6 z" fill="#5d5d5d"/>
<text transform="translate(1738 1850.0) scale(.894 1)" class="ax" text-anchor="end">0</text>
<text transform="translate(1738 1779.0) scale(.894 1)" class="ax" text-anchor="end">100 K</text>
<text transform="translate(1738 1708.0) scale(.894 1)" class="ax" text-anchor="end">200 K</text>
<text transform="translate(1738 1637.0) scale(.894 1)" class="ax" text-anchor="end">300 K</text>
<text transform="translate(1738 1566.0) scale(.894 1)" class="ax" text-anchor="end">400 K</text>
<text transform="translate(1769.0 1877.0) scale(.894 1)" class="ax" text-anchor="middle">06:00</text>
<text transform="translate(2030.0 1877.0) scale(.894 1)" class="ax" text-anchor="middle">06:30</text>
<text transform="translate(2291.0 1877.0) scale(.894 1)" class="ax" text-anchor="middle">07:00</text>
<defs><clipPath id="cnet2"><rect x="1748" y="1541" width="656" height="305"/></clipPath></defs><g clip-path="url(#cnet2)"><path d="M1736 1641.2l12 0 2.2-.2 2.1 0 1 .2 1.2-8.9 1.3-9.8 .9 .5 2.1 2.2 1.2 .6 1-5.5 1.8-10.3 .4 2.7 2.2 14.3 2.1 14.2 0 .2 2.2-.4 2.2 .3 2.1-.2 2.2 .1 2.2 .3 2.1-.5 2.2 .4 2.2 0 2.2-.4 2.1 .5 1.6-.3 .6-5.1 1.6-13.6 .6 .4 2.1 1.2 2.2 1.5 .4 .2 1.8-8.9 1.6-8.6 .5 7.1 2 25.8 .2 .1 2.2 .1 2.2 0 2.1-.1 2.2-.1 2.2-.1 2.1 0 2.2 0 2.2 .3 2.2 0 2.1-.4 1.4 .2 .8-5.6 2.2-15.2 1.5-10.4 .6 4.8 1.6 11 .6-4.5 1.9-13 .3 3.5 2.1 28.4 .1 1 2.1-.2 2.2 .5 2.2-.3 2.1 .1 2.2 .1 2.2-.2 2.1 .2 2.2 0 2.2-.1 2.1-.1 1.7 0 .5-3.6 2-15.1 .2 .4 1.8 2.9 .3-3 1.5-12 .7 4 2.2 11.1 0-.1 1.6-1.6 .6 4.1 1.9 12.9 .2 .1 2.2-.1 2.2-.1 2.1 .2 2.2-.3 2.2 .3 2.1 0 2.2 .1 2.2-.4 2.2 .2 1.9 0 .2-2.5 1.5-16.2 .7 .8 2.2 2 .4 .5 1.7-8.2 1.6-6.8 .6 4.7 2.2 15.7 1.4 10 .8-.2 2.1 .4 2.2-.1 2.2-.4 2.1 .4 2.2-.2 2.2 0 2.1-.1 2.2 .4 2.2-.1 1.4-.1 .8-5.8 1.7-12.9 .4 4.9 1.2 13.6 1-6 2.2-12.8 1.8-11.4 .3 1.8 2.2 13.2 1.7-2.5 .5 5.1 1.2 12.8 .9 .2 2.2 0 2.2-.3 2.2 .3 2.1-.4 2.2 0 2.2 .3 2.1 .1 2.2-.3 2.2-.1 1.1 .2 1-8 1.5-10.7 .7 7.7 1 10.8 1.2-14.4 1.3-16.6 .8 5.4 1.7 10.4 .5-4.1 1.7-13.4 .5 8.1 1.5 24.8 .7-.2 1.6 .2 .5-.2 1.3 .2 .9 16.7 1.6 30.1 .6 .5 1.1 .7 1-25 1-23.2 1.2-17.5 .1-1 2.1 1.4 2.1 1.7 .8 .2 1.4-7.4 1.6-7.6 .6 7.4 1.4 18.5 .8-3.5 1.2-6.5 .9 6.1 1.3 8.4 .9 .2 2.2 0 2.1-.2 2.2 .3 2.2-.4 2.1 0 2.2-.1 2.2 .4 2.2-.4 2.1 .2 2.2 .2 1.6-.2 .6-12.8 1-23.4 1.1-.9 1.4-.8 .8 4 2.2 11.6 1.2 6.1 1-.4 1.5-1.3 .6 4.5 1.9 13.4 .3 .1 2.2-.3 2.1 .1 1.2 .1 1-16.1 1.5-23.8 .7 15.7 1 24.2 1.1-.1 2.2 .2 2.2-.1 2.2 .3 2.1-.4 2.2-.2 2.2 .1 0 .2 2.1-8.2 2-7.2 .2-.7 2.2-8.9 1.3-5.4 .8 2.8 2.2 7.2 .8 2.5 1.4 8.6 1.5 9.3 .6-.2 2.2 0 2.2 .4 2.2-.1 2.1-.2 2.2 .2 2.2 0 2.1-.3 2.2 .2 2.2 .2 2.2 0 1.9-.2 .2-1 2.2-11.2 1.3-6.5 .9 1.5 1.4 1.8 .7-2.5 2.2-7.3 1.4-5.2 .8 6.6 2.1 17.8 .8 6 1.4-.2 2.2 .5 2.2-.4 2.1-.1 2.2 .2 2.2 .1 2.1-.2 2.2 .4 2.2-.6 2.1 .5 2.2-.1 1.6-.1 .6-4.5 1.7-14.2 .4 4.6 1.4 13.9 .8-5.7 2.2-15.9 1.2-8.6 1 8.9 1.5 14.3 .6-4.6 1.9-14.4 .3 4.2 1.7 22 .5-.3 2.1 .4 2.2 .1 2.2-.3 2.2-.1 2.1 .3 1.7-.1 .5-2.4 2.2-11.8 1.5-8 .6 6.5 1.2 11.5 1-5.4 1.5-7.6 .7-.2 .8-.8 1.3 7.9 1.7 10.3 .5-.2 2.2 .4 2.1-.3 2.2-.2 2.2 .2 2.2 .3 2.1 0 2.2-.3 2.2-.2 2.1 .4 2.2-.3 1.8 .2 .4-3.4 1.6-15.3 .6 5.1 1.4 13.4 .7-9.2 1.6-20.8 .6 3 2.1 11.8 .1 .2 2.1-1.9 1.8-.8 .4 2.9 2.1 15 .1-.1 2.1 .1 2.2-.2 2.2 .5 2.1-.3 2.2 .1 2.2-.1 2.2 .2 2.1 0 2.2-.4 2.2 .5 .7-.3 1.4-9.1 1.6-9.6 .6 .6 2.2 1.5 1.2 1.2 .9-3.6 2.2-7.8 1.6-6.1 .6 7.2 2.2 25.5 0 .2 2.1 .1 2.2-.1 2.2 0 2.1-.1 2.2 .2 2.2-.2 2.2-.1 2.1 .3 2.2-.2 2.2 .2 1.3-.1 .8-6.1 1.7-12.6 .5 .8 2.2 1.9 .3 .6 1.8-7.4 1.9-7.6 .3 2.5 2.2 15.6 1.6 12.3 .5 0 2.2-.1 2.2 .2 2.2 .1 2.1-.2 2.2-.1 2.2 .1 2.1-.2 2.2 .4 2.2-.3 2.2-.1 2.1 .5 .8-.3 1.4-9.2 1.4-9.5 .8 6.4 1.4 12.1 .7-5.2 2.2-16.6 1.1-8.4 1.1 5.5 1.9 9.5 .2-.3 1.8-1.5 .4 2.8 2.1 14.4 .1-.1 2.2 .3 2.1-.3 2.2 0 2.2-.1 2.1 .4 2.2-.3 2.2 .3 2.1-.2 2.2-.2 2.2 .3 2.1 .1 2.2-.2 1.4 0 .8-5.6 1.7-13.1 .5 .7 2 2.6 .1 0 2.2 .2 2.2-.1 .5-.1 1.6-1.4 1.7-1.9 .5 4.2 1.7 14.5 .5 .3 2.2-.1 2.1-.3 2.2 .1 2.2 0 2.1-.2 2.2 .2 2.2 .3 2.1-.2 .7-.1 12 0 0 215.8 -680 0Z" fill="#80B071" fill-opacity="0.1" stroke="#80B071" stroke-width="2" stroke-linejoin="round"/><path d="M1736 1832.2l12 0 2.2-.6 2.1 .3 2.2-.1 2.2-.8 2.1 .7 2.2 .3 2.2-.4 2.2 .3 2.1-.1 2.2-.2 2.2 .4 2.1 0 2.2 .1 2.2-.7 2.1 .8 2.2-.2 2.2-.4 2.2 .2 2.1 .3 2.2-.6 2.2 .5 2.1-.1 2.2-.5 2.2 .2 2.1 .1 2.2 .3 2.2 .1 2.2-.1 2.1-.1 2.2-.2 2.2 .2 2.1-.1 2.2-.2 2.2 .5 2.2-.1 2.1 .2 2.2-.8 2.2 .7 2.1-.9 2.2 .7 2.2 .3 2.1-.1 2.2 0 2.2-.2 2.2-.3 2.1 .4 2.2-.3 2.2-1 2.1 .8 2.2 .2 2.2 .4 2.1-.6 2.2 .6 2.2-.9 2.1 1 2.2 0 2.2-.1 2.2-.5 2.1-.2 2.2 .4 2.2 .2 2.1-.1 2.2 .2 2.2 0 2.1 0 2.2 .1 2.2-.2 2.2-.1 2.1-.1 2.2-.5 2.2 .6 2.1 .2 2.2-.3 2.2 0 2.2-.1 2.1 .3 2.2 .1 2.2-.9 2.1 .6 2.2-.3 2.2 .6 2.1-.5 2.2 .3 2.2 0 2.2 .2 2.1 .1 2.2-.8 2.2 .5 2.1 .1 2.2-.1 2.2 .1 2.1 0 2.2-.2 2.2 .3 2.2-.1 2.1-.4 2.2 .4 2.2 0 2.1-.4 2.2-.2 2.2 .4 2.1-.3 2.2 0 2.2 .6 2.1-.4 2.2 .2 2.2-.3 2.2 .1 2.1-.2 2.2 .6 2.2-.1 2.1-.4 2.2-.5 2.2 1 2.1-.2 2.2 .1 2.2-.6 2.2 .2 2.1 .5 2.2-.3 2.2-.5 2.1-.1 2.2 .8 2.2 0 2.1-1.1 2.2 .3 2.2 0 2.2 .8 2.1-.7 2.2 .8 1.5 .1 .7-.7 1.7-1 .4 .1 2 1.6 .2-.5 2.2 .3 2.2 .1 2.1-.9 2.2 .6 2.2-.1 2.1 .1 .7 .4 1.5-1.7 .9-.5 1.3 1.2 1.1 1 1-1 2.2 .8 2.2-.5 2.2 .5 2.1-.1 2.2-.7 2.2 .8 2.1 .2 2.2-1.4 2.2 .9 2.1 .4 2.2-.3 2.2 .3 2.1-.9 2.2 .7 2.2 0 2.2-.1 2.1 .2 2.2-.1 2.2-.1 2.1 .4 2.2-.4 2.2-.4 2.2 .3 2.1-.4 2.2 .5 2.2 .4 2.1-.3 2.2-.2 2.2 .2 2.1-.4 2.2 .1 2.2 .5 2.2-.1 2.1 0 2.2-.2 2.2 .1 2.1-.3 2.2 .5 2.2-.3 2.1 .4 2.2-.9 2.2 .8 2.1-.6 2.2 0 2.2 .1 2.2 0 2.1 .3 2.2-.3 2.2 .6 2.1-.7 2.2-.5 2.2 .6 2.2 .4 2.1-.4 2.2 0 2.2 0 2.1 .4 .8 .2 1.4-4.8 1-2.7 1.2 3.1 1.2 4.4 .9-.2 2.2-.9 2.2 1.1 2.1 0 2.2-.5 2.2 .2 2.2-.1 2.1 0 2.2-.6 2.2 .5 2.1 .3 2.2-.4 2.2 .2 2.2 .1 2.1 0 2.2 0 2.2-.6 2.1-.4 2.2 1.1 2.2-.7 2.1 .8 2.2 0 2.2-1.1 2.1 .7 2.2-.2 2.2 .5 2.2-.8 2.1 .2 2.2 .1 2.2-.5 2.1 .1 2.2 1.1 2.2-1.2 2.1 1 2.2 .1 2.2-.2 2.2 .1 2.1-.2 2.2-.1 2.2 0 2.1-.2 2.2 .2 2.2-.1 2.2 .3 2.1-.3 2.2 .3 2.2-.1 2.1-.6 2.2 .8 2.2 .1 2.1-.3 2.2 .4 2.2-.1 2.1-.2 2.2-.6 2.2 .2 2.2 .7 2.1 0 2.2-.6 2.2-.3 2.1 .7 2.2 .2 2.2-.3 2.2-.1 2.1 .1 2.2 0 2.2-.2 2.1 .4 2.2 0 2.2-1.3 2.1 .5 2.2 .3 2.2 .6 2.2-.4 2.1-.5 2.2 .8 2.2-.5 2.1 0 2.2 .3 2.2-.4 2.1 .6 2.2 0 2.2-.9 2.1 1 2.2-.8 2.2 .6 2.2 0 2.1 0 2.2-.1 2.2 .2 2.1-.3 2.2-.5 2.2 .4 2.2 .4 2.1-.1 2.2 .2 2.2-.3 2.1 .3 2.2-.4 2.2 .1 2.1-.8 .7 1.1 12 0 0 24.8 -680 0Z" fill="#E5B84F" fill-opacity="0.1" stroke="#E5B84F" stroke-width="2" stroke-linejoin="round"/></g>
<path d="M1748 1845.0H2404 M1748 1774.0H2404 M1748 1703.0H2404 M1748 1632.0H2404 M1748 1561.0H2404" stroke="rgba(200,200,200,0.24)" stroke-width="2" fill="none"/>
<path d="M1769.0 1561V1845 M2030.0 1561V1845 M2291.0 1561V1845" stroke="rgba(200,200,200,0.24)" stroke-width="2" fill="none"/>
<rect x="1700.0" y="1915.5" width="23.5" height="6.5" rx="2.5" fill="#80B071"/>
<text x="1732.0" y="1926" class="lg" textLength="138.1" lengthAdjust="spacingAndGlyphs">Rx (enp7s0f0)</text>
<rect x="1889.2" y="1915.5" width="23.5" height="6.5" rx="2.5" fill="#E5B84F"/>
<text x="1921.2" y="1926" class="lg" textLength="136.8" lengthAdjust="spacingAndGlyphs">Tx (enp7s0f0)</text>
<text x="0" y="0" class="ax" text-anchor="middle" transform="translate(1283 255) rotate(-90)">%</text>
</svg></body></html>
